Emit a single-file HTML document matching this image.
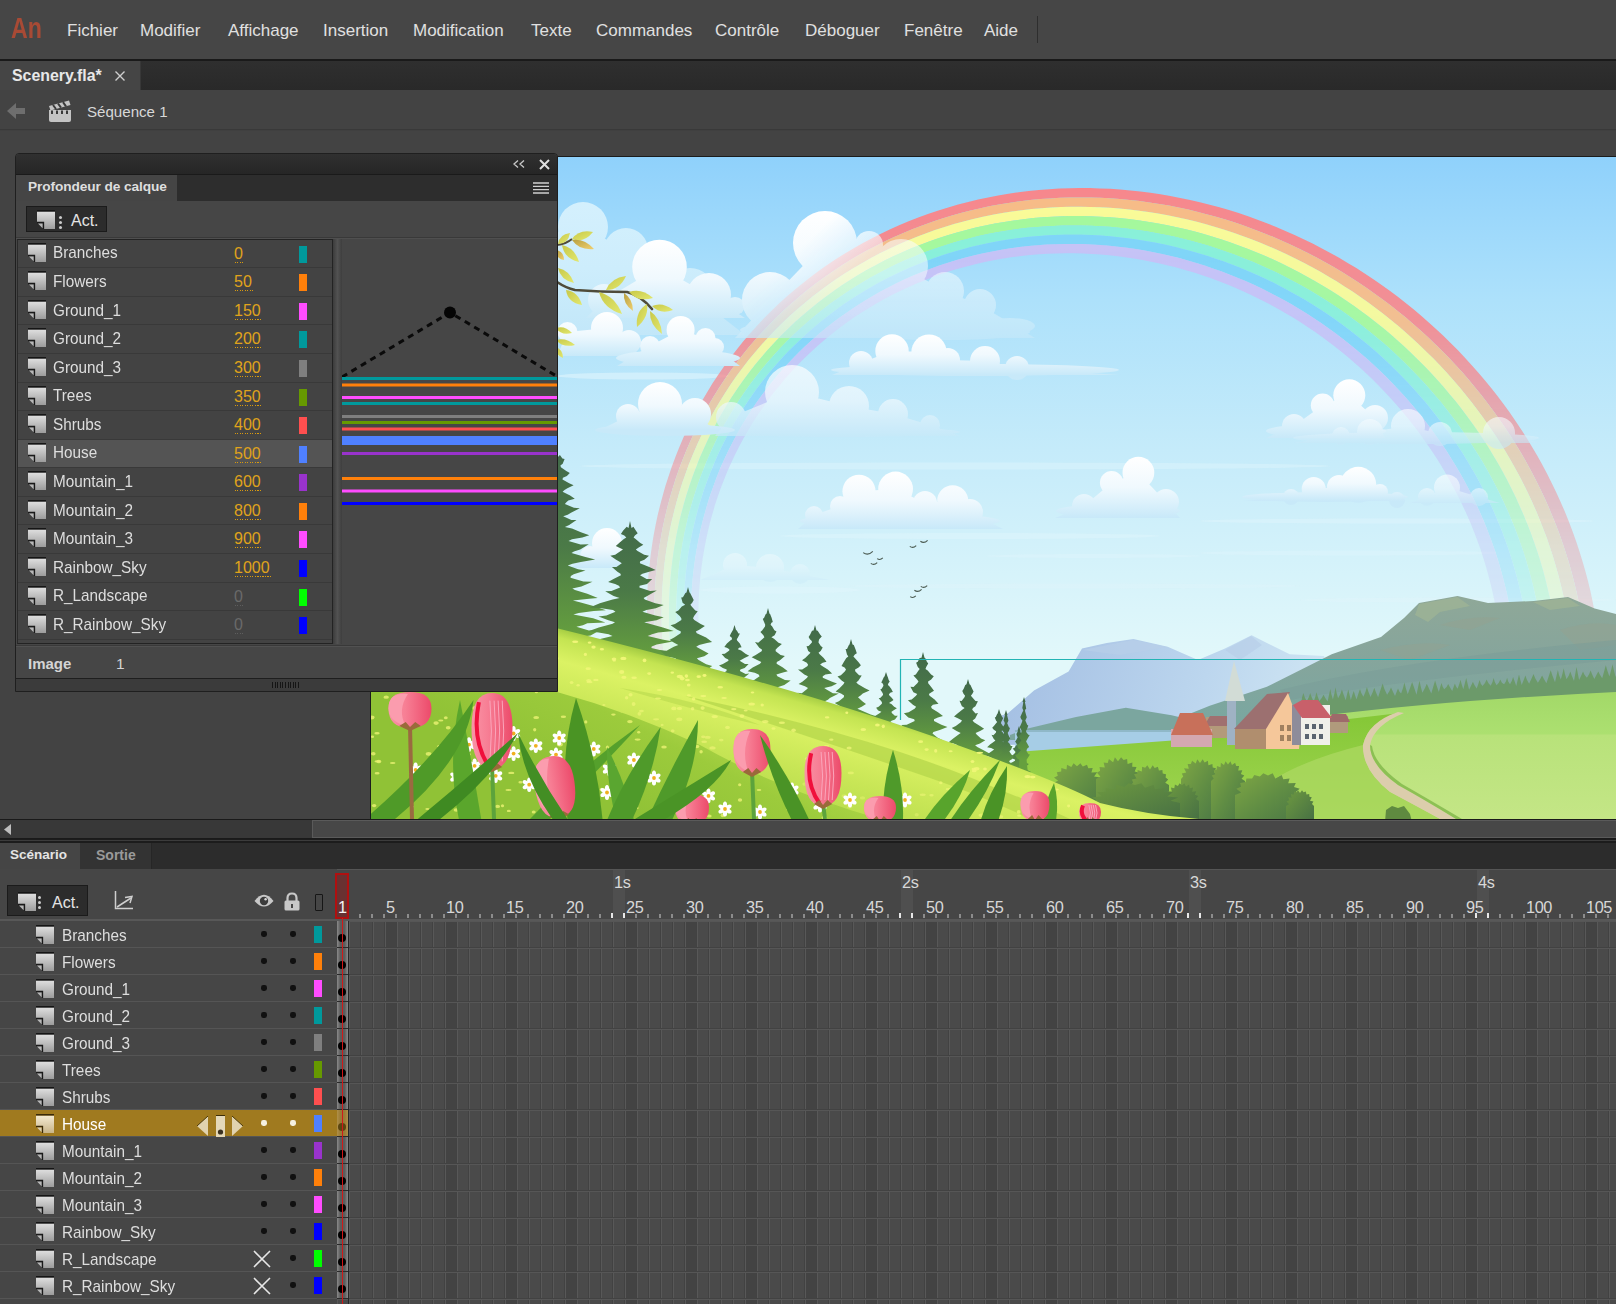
<!DOCTYPE html>
<html><head><meta charset="utf-8">
<style>
*{margin:0;padding:0;box-sizing:border-box}
html,body{width:1616px;height:1304px;overflow:hidden;background:#404040;font-family:"Liberation Sans",sans-serif;color:#dadada}
.a{position:absolute}
.t{position:absolute;white-space:nowrap;line-height:1}
#menu{left:0;top:0;width:1616px;height:59px;background:#464646}
#menu .t{font-size:17px;top:22px;color:#e0e0e0}
#tabs{left:0;top:59px;width:1616px;height:31px;background:linear-gradient(#2f2f2f,#292929);border-top:2px solid #1a1a1a}
#crumb{left:0;top:90px;width:1616px;height:40px;background:#434343;border-bottom:1px solid #393939}
#paste{left:0;top:131px;width:1616px;height:688px;background:#434343}
#stage{left:370px;top:156px;width:1246px;height:663px;overflow:hidden;background:#9ad6f8;border-left:1px solid #1c1c1c;border-top:1px solid #1c1c1c}
#stage svg{position:absolute;left:0;top:0}
#hscroll{left:0;top:819px;width:1616px;height:20px;background:#383838;border-top:1px solid #1a1a1a;border-bottom:1px solid #1a1a1a}
.lname{font-size:17px;color:#dedede;transform:scaleX(0.9);transform-origin:0 0}
.pnum{font-size:16px}
.sw{position:absolute;width:8px;height:17px}
.ico{position:absolute;width:18px;height:19px}
#panel{left:15px;top:153px;width:543px;height:539px;background:#464646;border:1px solid #1f1f1f;border-radius:4px 4px 0 0;overflow:hidden}
.prow{left:2px;width:314px;height:28.56px;border-bottom:1px solid #393939}
.trow{left:0;width:337px;height:27px;border-bottom:1px solid #555}

</style></head><body>
<svg width="0" height="0" style="position:absolute">
<defs>
<linearGradient id="icg" x1="0" y1="0" x2="0" y2="1"><stop offset="0" stop-color="#dedede"/><stop offset="1" stop-color="#9c9c9c"/></linearGradient>
<linearGradient id="icgs" x1="0" y1="0" x2="0" y2="1"><stop offset="0" stop-color="#f4ead2"/><stop offset="1" stop-color="#c8b488"/></linearGradient>
<g id="lic"><rect x="0" y="-0.5" width="18" height="2.2" fill="#151515"/><path d="M0 1.7H18V19H7V13H0Z" fill="url(#icg)"/><path d="M0 12.5H6.5V19" stroke="#1a1a1a" stroke-width="1.3" fill="none"/><path d="M1 13.6H5.6V18.2Z" fill="#b8b8b8"/></g>
<g id="lics"><rect x="0" y="-0.5" width="18" height="2.2" fill="#3a2a08"/><path d="M0 1.7H18V19H7V13H0Z" fill="url(#icgs)"/><path d="M0 12.5H6.5V19" stroke="#3a2a08" stroke-width="1.3" fill="none"/><path d="M1 13.6H5.6V18.2Z" fill="#d8ccb0"/></g>
</defs></svg>
<div id="menu" class="a">
  <div class="t" style="left:11px;top:14px;font-size:29px;color:#a84a35;transform:scaleX(0.8);transform-origin:left;font-weight:bold">An</div>
  <div class="t" style="left:67px">Fichier</div>
  <div class="t" style="left:140px">Modifier</div>
  <div class="t" style="left:228px">Affichage</div>
  <div class="t" style="left:323px">Insertion</div>
  <div class="t" style="left:413px">Modification</div>
  <div class="t" style="left:531px">Texte</div>
  <div class="t" style="left:596px">Commandes</div>
  <div class="t" style="left:715px">Contrôle</div>
  <div class="t" style="left:805px">Déboguer</div>
  <div class="t" style="left:904px">Fenêtre</div>
  <div class="t" style="left:984px">Aide</div>
  <div class="a" style="left:1037px;top:16px;width:1px;height:27px;background:#2e2e2e"></div>
</div>
<div id="tabs" class="a">
  <div class="a" style="left:0;top:0;width:141px;height:29px;background:#454545;border-right:1px solid #383838"></div>
  <div class="t" style="left:12px;top:7px;font-size:15.9px;font-weight:bold;color:#e8e8e8">Scenery.fla*</div>
  <svg class="a" style="left:115px;top:10px" width="10" height="10"><path d="M0.5 0.5L9.5 9.5M9.5 0.5L0.5 9.5" stroke="#cfcfcf" stroke-width="1.4"/></svg>
</div>
<div id="crumb" class="a">
  <svg class="a" style="left:7px;top:13px" width="20" height="16"><path d="M0 8L9 0V5H18V11H9V16Z" fill="#6e6e6e"/></svg>
  <svg class="a" style="left:48px;top:10px" width="24" height="22">
    <path d="M1 10H23V20Q23 22 21 22H3Q1 22 1 20Z" fill="#c4c4c4"/>
    <path d="M1 6L21 0.5L22.5 5L2.5 10.5Z" fill="#c4c4c4"/>
    <path d="M5 5L8 9M10 3.5L13 7.6M15 2.2L18 6.3" stroke="#3a3a3a" stroke-width="2"/>
    <path d="M4 10.5V14M9 10.5V14M14 10.5V14M19 10.5V14" stroke="#3a3a3a" stroke-width="2"/>
  </svg>
  <div class="t" style="left:87px;top:14px;font-size:15.1px;color:#d8d8d8">Séquence 1</div>
</div>
<div id="paste" class="a"></div>
<div id="hscroll" class="a">
  <svg class="a" style="left:4px;top:4px" width="8" height="12"><path d="M7 0V11L0 5.5Z" fill="#bdbdbd"/></svg>
  <div class="a" style="left:312px;top:0px;width:1304px;height:18px;background:#474747;border:1px solid #5a5a5a;border-right:none"></div>
</div>

<div class="a" id="stage"><svg width="1245" height="662" viewBox="371 157 1245 662"><defs>
<linearGradient id="sky" x1="0" y1="157" x2="0" y2="660" gradientUnits="userSpaceOnUse">
<stop offset="0" stop-color="#8fd1fb"/><stop offset="0.284" stop-color="#ade1fb"/><stop offset="0.582" stop-color="#c5ebfa"/><stop offset="0.8" stop-color="#d4f2fa"/><stop offset="1" stop-color="#e2f8fa"/></linearGradient>
<linearGradient id="cl" x1="0" y1="0" x2="0" y2="1"><stop offset="0" stop-color="#ffffff"/><stop offset="0.55" stop-color="#eef9fe"/><stop offset="1" stop-color="#c5e9fa"/></linearGradient>
<linearGradient id="cl2" x1="0" y1="0" x2="0" y2="1"><stop offset="0" stop-color="#d8f1fd"/><stop offset="1" stop-color="#b9e2f8"/></linearGradient>
<linearGradient id="rbfade" x1="0" y1="185" x2="0" y2="640" gradientUnits="userSpaceOnUse">
<stop offset="0" stop-color="#fff" stop-opacity="1"/><stop offset="0.3" stop-color="#fff" stop-opacity="0.9"/><stop offset="0.55" stop-color="#fff" stop-opacity="0.6"/><stop offset="0.8" stop-color="#fff" stop-opacity="0.35"/><stop offset="1" stop-color="#fff" stop-opacity="0.2"/></linearGradient>
<mask id="rbmask" maskUnits="userSpaceOnUse" x="371" y="157" width="1245" height="662"><rect x="371" y="157" width="1245" height="662" fill="url(#rbfade)"/></mask>
<linearGradient id="hill" x1="0" y1="0" x2="1" y2="0.6">
<stop offset="0" stop-color="#a6d044"/><stop offset="0.5" stop-color="#cfe95a"/><stop offset="1" stop-color="#b8dc4c"/></linearGradient>
<linearGradient id="tree" x1="0" y1="0" x2="0" y2="1"><stop offset="0" stop-color="#436b48"/><stop offset="0.6" stop-color="#4f7e45"/><stop offset="1" stop-color="#66a03c"/></linearGradient>
<linearGradient id="mtn" x1="0" y1="0" x2="0" y2="1"><stop offset="0" stop-color="#8ba79a"/><stop offset="1" stop-color="#7aa39a"/></linearGradient>
<linearGradient id="bmtn" x1="0" y1="0" x2="0" y2="1"><stop offset="0" stop-color="#a9c6e6"/><stop offset="1" stop-color="#bcd8ec"/></linearGradient>
<linearGradient id="meadow" x1="0" y1="0" x2="0" y2="1"><stop offset="0" stop-color="#a6d85a"/><stop offset="1" stop-color="#bfe077"/></linearGradient>
<linearGradient id="mid" x1="0" y1="0" x2="0" y2="1"><stop offset="0" stop-color="#8fcc3a"/><stop offset="1" stop-color="#a3d650"/></linearGradient>
<linearGradient id="bush" x1="0" y1="0" x2="1" y2="1"><stop offset="0" stop-color="#6f9a3a"/><stop offset="1" stop-color="#4d7a48"/></linearGradient>
<linearGradient id="tul" x1="0" y1="0" x2="1" y2="0"><stop offset="0" stop-color="#f993a6"/><stop offset="0.4" stop-color="#f77e94"/><stop offset="1" stop-color="#ec4a6a"/></linearGradient>
<linearGradient id="fg" x1="0" y1="0" x2="0" y2="1"><stop offset="0" stop-color="#a9d247"/><stop offset="1" stop-color="#8fc43a"/></linearGradient>
<linearGradient id="leaf" x1="0" y1="0" x2="1" y2="1"><stop offset="0" stop-color="#dce070"/><stop offset="1" stop-color="#c2b43c"/></linearGradient>
</defs>
<rect x="371" y="157" width="1245" height="662" fill="url(#sky)"/>
<ellipse cx="643.5" cy="376" rx="86.5" ry="3.5" fill="#e2f6fd" opacity="0.56"/>
<ellipse cx="955.0" cy="466" rx="375.0" ry="3.5" fill="#e2f6fd" opacity="0.39"/>
<ellipse cx="970.0" cy="536" rx="190.0" ry="3" fill="#e2f6fd" opacity="0.39"/>
<ellipse cx="1093.5" cy="556" rx="106.5" ry="2" fill="#e2f6fd" opacity="0.35"/>
<ellipse cx="1397.0" cy="521" rx="197.0" ry="2.5" fill="#e2f6fd" opacity="0.42"/>
<ellipse cx="1350.0" cy="553" rx="150.0" ry="2.5" fill="#e2f6fd" opacity="0.35"/>
<ellipse cx="780.0" cy="590" rx="80.0" ry="3.5" fill="#e2f6fd" opacity="0.42"/>
<ellipse cx="1075.0" cy="586" rx="225.0" ry="2.5" fill="#e2f6fd" opacity="0.28"/>
<ellipse cx="1458.0" cy="600" rx="158.0" ry="2.5" fill="#e2f6fd" opacity="0.32"/>
<g mask="url(#rbmask)">
<path d="M1600.9 729.7 L1601.6 718.9 L1602.1 708.2 L1602.3 697.4 L1602.2 686.7 L1601.9 675.9 L1601.3 665.2 L1600.5 654.6 L1599.4 643.9 L1598.1 633.3 L1596.5 622.8 L1594.7 612.3 L1592.7 601.9 L1590.5 591.6 L1588.0 581.3 L1585.3 571.1 L1582.4 560.9 L1579.3 550.9 L1576.0 540.9 L1572.4 531.1 L1568.7 521.3 L1564.8 511.6 L1560.6 502.0 L1556.3 492.6 L1551.8 483.2 L1547.2 474.0 L1542.3 464.8 L1537.3 455.8 L1532.1 446.9 L1526.7 438.1 L1521.2 429.5 L1515.5 421.0 L1509.7 412.5 L1503.7 404.3 L1497.5 396.1 L1491.2 388.1 L1484.8 380.2 L1478.2 372.5 L1471.5 364.9 L1464.7 357.4 L1457.7 350.1 L1450.6 342.9 L1443.3 335.8 L1436.0 328.9 L1428.5 322.2 L1420.9 315.6 L1413.2 309.1 L1405.4 302.8 L1397.5 296.6 L1389.4 290.6 L1381.3 284.8 L1373.0 279.1 L1364.7 273.5 L1356.3 268.1 L1347.7 262.9 L1339.1 257.8 L1330.4 252.9 L1321.5 248.2 L1312.6 243.6 L1303.6 239.2 L1294.6 235.0 L1285.4 230.9 L1276.2 227.0 L1266.9 223.3 L1257.5 219.7 L1248.1 216.3 L1238.6 213.1 L1229.0 210.1 L1219.4 207.3 L1209.7 204.7 L1199.9 202.2 L1190.1 199.9 L1180.2 197.9 L1170.3 196.0 L1160.4 194.3 L1150.4 192.8 L1140.3 191.5 L1130.3 190.4 L1120.2 189.5 L1110.1 188.8 L1099.9 188.4 L1089.8 188.1 L1079.6 188.1 L1069.4 188.2 L1059.2 188.6 L1049.0 189.2 L1038.8 190.0 L1028.7 191.0 L1018.5 192.3 L1008.4 193.8 L998.2 195.5 L988.1 197.4 L978.1 199.6 L968.1 201.9 L958.1 204.6 L948.2 207.4 L938.4 210.5 L928.6 213.8 L918.9 217.3 L909.2 221.1 L899.7 225.1 L890.2 229.3 L880.9 233.7 L871.6 238.4 L862.5 243.3 L853.4 248.4 L844.5 253.7 L835.7 259.3 L827.1 265.1 L818.6 271.1 L810.3 277.3 L802.1 283.7 L794.1 290.3 L786.2 297.1 L778.5 304.1 L771.0 311.2 L763.7 318.6 L756.6 326.2 L749.6 333.9 L742.9 341.8 L736.4 349.9 L730.1 358.1 L724.0 366.5 L718.1 375.0 L712.4 383.6 L707.0 392.4 L701.8 401.3 L696.8 410.4 L692.0 419.5 L687.5 428.8 L683.2 438.1 L679.2 447.6 L675.4 457.1 L671.8 466.7 L668.5 476.4 L665.4 486.1 L662.6 495.9 L660.0 505.7 L657.6 515.6 L655.5 525.5 L653.6 535.5 L652.0 545.5 L650.6 555.5 L649.4 565.5 L648.4 575.5 L647.7 585.5 L647.2 595.5 L647.0 605.4 L646.9 615.4 L647.1 625.4 L647.5 635.3 L648.1 645.1 L648.9 655.0 L650.0 664.8 L651.2 674.6 L652.6 684.3 L654.2 693.9 L656.1 703.5 L658.1 713.0 L660.3 722.5 L667.6 721.5 L665.4 712.2 L663.4 702.8 L661.6 693.4 L660.0 683.9 L658.5 674.3 L657.3 664.7 L656.3 655.1 L655.5 645.4 L654.9 635.7 L654.5 625.9 L654.3 616.1 L654.3 606.3 L654.6 596.5 L655.1 586.7 L655.8 576.8 L656.7 567.0 L657.8 557.1 L659.2 547.3 L660.9 537.5 L662.7 527.7 L664.8 517.9 L667.1 508.2 L669.7 498.5 L672.5 488.9 L675.5 479.3 L678.8 469.8 L682.3 460.4 L686.1 451.0 L690.1 441.7 L694.3 432.5 L698.7 423.4 L703.4 414.4 L708.3 405.6 L713.5 396.8 L718.8 388.2 L724.4 379.7 L730.2 371.3 L736.3 363.1 L742.5 355.0 L748.9 347.1 L755.6 339.3 L762.4 331.8 L769.4 324.4 L776.6 317.1 L784.0 310.1 L791.6 303.2 L799.4 296.6 L807.3 290.1 L815.3 283.8 L823.6 277.8 L831.9 271.9 L840.4 266.3 L849.1 260.8 L857.8 255.6 L866.7 250.6 L875.7 245.9 L884.9 241.3 L894.1 237.0 L903.4 232.9 L912.8 229.0 L922.2 225.4 L931.8 221.9 L941.4 218.7 L951.1 215.8 L960.8 213.0 L970.6 210.5 L980.5 208.2 L990.4 206.1 L1000.3 204.3 L1010.2 202.7 L1020.2 201.2 L1030.1 200.1 L1040.1 199.1 L1050.1 198.4 L1060.1 197.8 L1070.1 197.5 L1080.1 197.4 L1090.1 197.5 L1100.0 197.8 L1110.0 198.3 L1119.9 199.1 L1129.8 200.0 L1139.6 201.1 L1149.4 202.4 L1159.2 203.9 L1169.0 205.6 L1178.6 207.5 L1188.3 209.6 L1197.9 211.9 L1207.4 214.4 L1216.9 217.0 L1226.3 219.8 L1235.7 222.8 L1245.0 226.0 L1254.2 229.4 L1263.3 232.9 L1272.4 236.6 L1281.4 240.5 L1290.3 244.5 L1299.2 248.7 L1307.9 253.1 L1316.6 257.6 L1325.2 262.3 L1333.7 267.1 L1342.1 272.1 L1350.4 277.3 L1358.6 282.6 L1366.7 288.0 L1374.7 293.7 L1382.7 299.4 L1390.5 305.3 L1398.2 311.4 L1405.8 317.6 L1413.2 324.0 L1420.6 330.4 L1427.8 337.1 L1435.0 343.9 L1442.0 350.8 L1448.9 357.8 L1455.6 365.0 L1462.3 372.3 L1468.8 379.8 L1475.1 387.4 L1481.3 395.1 L1487.4 402.9 L1493.4 410.9 L1499.1 419.0 L1504.8 427.2 L1510.3 435.5 L1515.6 444.0 L1520.8 452.6 L1525.8 461.2 L1530.6 470.0 L1535.3 479.0 L1539.8 488.0 L1544.1 497.1 L1548.3 506.3 L1552.2 515.7 L1556.0 525.1 L1559.6 534.6 L1563.0 544.2 L1566.2 553.9 L1569.2 563.7 L1571.9 573.5 L1574.5 583.5 L1576.9 593.5 L1579.0 603.5 L1580.9 613.7 L1582.6 623.9 L1584.1 634.1 L1585.3 644.4 L1586.3 654.7 L1587.1 665.1 L1587.6 675.5 L1587.9 685.9 L1588.0 696.3 L1587.7 706.8 L1587.3 717.2 L1586.6 727.7Z" fill="#f7878c"/>
<path d="M1586.6 727.7 L1587.3 717.2 L1587.7 706.8 L1588.0 696.3 L1587.9 685.9 L1587.6 675.5 L1587.1 665.1 L1586.3 654.7 L1585.3 644.4 L1584.1 634.1 L1582.6 623.9 L1580.9 613.7 L1579.0 603.5 L1576.9 593.5 L1574.5 583.5 L1571.9 573.5 L1569.2 563.7 L1566.2 553.9 L1563.0 544.2 L1559.6 534.6 L1556.0 525.1 L1552.2 515.7 L1548.3 506.3 L1544.1 497.1 L1539.8 488.0 L1535.3 479.0 L1530.6 470.0 L1525.8 461.2 L1520.8 452.6 L1515.6 444.0 L1510.3 435.5 L1504.8 427.2 L1499.1 419.0 L1493.4 410.9 L1487.4 402.9 L1481.3 395.1 L1475.1 387.4 L1468.8 379.8 L1462.3 372.3 L1455.6 365.0 L1448.9 357.8 L1442.0 350.8 L1435.0 343.9 L1427.8 337.1 L1420.6 330.4 L1413.2 324.0 L1405.8 317.6 L1398.2 311.4 L1390.5 305.3 L1382.7 299.4 L1374.7 293.7 L1366.7 288.0 L1358.6 282.6 L1350.4 277.3 L1342.1 272.1 L1333.7 267.1 L1325.2 262.3 L1316.6 257.6 L1307.9 253.1 L1299.2 248.7 L1290.3 244.5 L1281.4 240.5 L1272.4 236.6 L1263.3 232.9 L1254.2 229.4 L1245.0 226.0 L1235.7 222.8 L1226.3 219.8 L1216.9 217.0 L1207.4 214.4 L1197.9 211.9 L1188.3 209.6 L1178.6 207.5 L1169.0 205.6 L1159.2 203.9 L1149.4 202.4 L1139.6 201.1 L1129.8 200.0 L1119.9 199.1 L1110.0 198.3 L1100.0 197.8 L1090.1 197.5 L1080.1 197.4 L1070.1 197.5 L1060.1 197.8 L1050.1 198.4 L1040.1 199.1 L1030.1 200.1 L1020.2 201.2 L1010.2 202.7 L1000.3 204.3 L990.4 206.1 L980.5 208.2 L970.6 210.5 L960.8 213.0 L951.1 215.8 L941.4 218.7 L931.8 221.9 L922.2 225.4 L912.8 229.0 L903.4 232.9 L894.1 237.0 L884.9 241.3 L875.7 245.9 L866.7 250.6 L857.8 255.6 L849.1 260.8 L840.4 266.3 L831.9 271.9 L823.6 277.8 L815.3 283.8 L807.3 290.1 L799.4 296.6 L791.6 303.2 L784.0 310.1 L776.6 317.1 L769.4 324.4 L762.4 331.8 L755.6 339.3 L748.9 347.1 L742.5 355.0 L736.3 363.1 L730.2 371.3 L724.4 379.7 L718.8 388.2 L713.5 396.8 L708.3 405.6 L703.4 414.4 L698.7 423.4 L694.3 432.5 L690.1 441.7 L686.1 451.0 L682.3 460.4 L678.8 469.8 L675.5 479.3 L672.5 488.9 L669.7 498.5 L667.1 508.2 L664.8 517.9 L662.7 527.7 L660.9 537.5 L659.2 547.3 L657.8 557.1 L656.7 567.0 L655.8 576.8 L655.1 586.7 L654.6 596.5 L654.3 606.3 L654.3 616.1 L654.5 625.9 L654.9 635.7 L655.5 645.4 L656.3 655.1 L657.3 664.7 L658.5 674.3 L660.0 683.9 L661.6 693.4 L663.4 702.8 L665.4 712.2 L667.6 721.5 L674.9 720.5 L672.7 711.3 L670.7 702.1 L668.9 692.8 L667.3 683.5 L665.9 674.1 L664.7 664.6 L663.6 655.2 L662.8 645.6 L662.2 636.1 L661.8 626.5 L661.6 616.8 L661.7 607.2 L661.9 597.5 L662.4 587.9 L663.1 578.2 L664.0 568.5 L665.1 558.8 L666.5 549.1 L668.1 539.5 L669.9 529.8 L672.0 520.2 L674.3 510.7 L676.8 501.2 L679.5 491.7 L682.5 482.3 L685.8 472.9 L689.2 463.6 L692.9 454.4 L696.9 445.3 L701.0 436.3 L705.4 427.3 L710.1 418.5 L714.9 409.8 L720.0 401.2 L725.3 392.7 L730.8 384.3 L736.5 376.1 L742.5 368.1 L748.6 360.1 L754.9 352.4 L761.5 344.8 L768.2 337.4 L775.2 330.1 L782.3 323.0 L789.6 316.1 L797.0 309.4 L804.7 302.9 L812.5 296.5 L820.4 290.4 L828.5 284.5 L836.7 278.8 L845.1 273.3 L853.6 268.0 L862.3 262.9 L871.0 258.0 L879.9 253.3 L888.8 248.9 L897.9 244.7 L907.1 240.7 L916.3 236.9 L925.6 233.4 L935.0 230.1 L944.5 227.0 L954.0 224.1 L963.6 221.5 L973.2 219.0 L982.9 216.8 L992.6 214.8 L1002.3 213.1 L1012.0 211.5 L1021.8 210.2 L1031.6 209.1 L1041.4 208.2 L1051.2 207.5 L1061.0 207.1 L1070.8 206.8 L1080.6 206.7 L1090.4 206.9 L1100.1 207.3 L1109.9 207.8 L1119.6 208.6 L1129.3 209.5 L1138.9 210.7 L1148.5 212.0 L1158.1 213.6 L1167.6 215.3 L1177.1 217.2 L1186.5 219.3 L1195.9 221.6 L1205.2 224.1 L1214.4 226.7 L1223.6 229.5 L1232.8 232.5 L1241.8 235.7 L1250.8 239.0 L1259.8 242.5 L1268.6 246.2 L1277.4 250.0 L1286.1 254.0 L1294.7 258.2 L1303.2 262.5 L1311.7 267.0 L1320.0 271.6 L1328.3 276.4 L1336.5 281.3 L1344.5 286.4 L1352.5 291.6 L1360.4 297.0 L1368.2 302.6 L1375.9 308.2 L1383.5 314.0 L1390.9 320.0 L1398.3 326.1 L1405.5 332.3 L1412.7 338.7 L1419.7 345.2 L1426.6 351.9 L1433.4 358.6 L1440.1 365.6 L1446.6 372.6 L1453.0 379.8 L1459.3 387.1 L1465.4 394.5 L1471.4 402.0 L1477.3 409.7 L1483.0 417.5 L1488.6 425.4 L1494.1 433.4 L1499.4 441.6 L1504.5 449.8 L1509.5 458.2 L1514.3 466.7 L1519.0 475.3 L1523.5 483.9 L1527.8 492.7 L1531.9 501.6 L1535.9 510.6 L1539.7 519.7 L1543.3 528.9 L1546.8 538.1 L1550.0 547.5 L1553.1 556.9 L1555.9 566.4 L1558.6 576.0 L1561.0 585.7 L1563.3 595.4 L1565.3 605.2 L1567.1 615.0 L1568.7 624.9 L1570.1 634.9 L1571.3 644.8 L1572.2 654.9 L1572.9 664.9 L1573.4 675.0 L1573.6 685.1 L1573.6 695.3 L1573.4 705.4 L1572.9 715.5 L1572.2 725.7Z" fill="#f8bb86"/>
<path d="M1572.2 725.7 L1572.9 715.5 L1573.4 705.4 L1573.6 695.3 L1573.6 685.1 L1573.4 675.0 L1572.9 664.9 L1572.2 654.9 L1571.3 644.8 L1570.1 634.9 L1568.7 624.9 L1567.1 615.0 L1565.3 605.2 L1563.3 595.4 L1561.0 585.7 L1558.6 576.0 L1555.9 566.4 L1553.1 556.9 L1550.0 547.5 L1546.8 538.1 L1543.3 528.9 L1539.7 519.7 L1535.9 510.6 L1531.9 501.6 L1527.8 492.7 L1523.5 483.9 L1519.0 475.3 L1514.3 466.7 L1509.5 458.2 L1504.5 449.8 L1499.4 441.6 L1494.1 433.4 L1488.6 425.4 L1483.0 417.5 L1477.3 409.7 L1471.4 402.0 L1465.4 394.5 L1459.3 387.1 L1453.0 379.8 L1446.6 372.6 L1440.1 365.6 L1433.4 358.6 L1426.6 351.9 L1419.7 345.2 L1412.7 338.7 L1405.5 332.3 L1398.3 326.1 L1390.9 320.0 L1383.5 314.0 L1375.9 308.2 L1368.2 302.6 L1360.4 297.0 L1352.5 291.6 L1344.5 286.4 L1336.5 281.3 L1328.3 276.4 L1320.0 271.6 L1311.7 267.0 L1303.2 262.5 L1294.7 258.2 L1286.1 254.0 L1277.4 250.0 L1268.6 246.2 L1259.8 242.5 L1250.8 239.0 L1241.8 235.7 L1232.8 232.5 L1223.6 229.5 L1214.4 226.7 L1205.2 224.1 L1195.9 221.6 L1186.5 219.3 L1177.1 217.2 L1167.6 215.3 L1158.1 213.6 L1148.5 212.0 L1138.9 210.7 L1129.3 209.5 L1119.6 208.6 L1109.9 207.8 L1100.1 207.3 L1090.4 206.9 L1080.6 206.7 L1070.8 206.8 L1061.0 207.1 L1051.2 207.5 L1041.4 208.2 L1031.6 209.1 L1021.8 210.2 L1012.0 211.5 L1002.3 213.1 L992.6 214.8 L982.9 216.8 L973.2 219.0 L963.6 221.5 L954.0 224.1 L944.5 227.0 L935.0 230.1 L925.6 233.4 L916.3 236.9 L907.1 240.7 L897.9 244.7 L888.8 248.9 L879.9 253.3 L871.0 258.0 L862.3 262.9 L853.6 268.0 L845.1 273.3 L836.7 278.8 L828.5 284.5 L820.4 290.4 L812.5 296.5 L804.7 302.9 L797.0 309.4 L789.6 316.1 L782.3 323.0 L775.2 330.1 L768.2 337.4 L761.5 344.8 L754.9 352.4 L748.6 360.1 L742.5 368.1 L736.5 376.1 L730.8 384.3 L725.3 392.7 L720.0 401.2 L714.9 409.8 L710.1 418.5 L705.4 427.3 L701.0 436.3 L696.9 445.3 L692.9 454.4 L689.2 463.6 L685.8 472.9 L682.5 482.3 L679.5 491.7 L676.8 501.2 L674.3 510.7 L672.0 520.2 L669.9 529.8 L668.1 539.5 L666.5 549.1 L665.1 558.8 L664.0 568.5 L663.1 578.2 L662.4 587.9 L661.9 597.5 L661.7 607.2 L661.6 616.8 L661.8 626.5 L662.2 636.1 L662.8 645.6 L663.6 655.2 L664.7 664.6 L665.9 674.1 L667.3 683.5 L668.9 692.8 L670.7 702.1 L672.7 711.3 L674.9 720.5 L682.1 719.4 L680.0 710.4 L678.0 701.4 L676.2 692.3 L674.6 683.1 L673.2 673.8 L672.0 664.6 L671.0 655.2 L670.2 645.9 L669.6 636.5 L669.2 627.0 L669.0 617.6 L669.0 608.1 L669.2 598.6 L669.7 589.0 L670.4 579.5 L671.3 570.0 L672.4 560.5 L673.7 551.0 L675.3 541.5 L677.1 532.0 L679.1 522.6 L681.4 513.1 L683.9 503.8 L686.6 494.5 L689.6 485.2 L692.8 476.0 L696.2 466.9 L699.8 457.8 L703.7 448.9 L707.8 440.0 L712.1 431.2 L716.7 422.6 L721.5 414.0 L726.5 405.5 L731.7 397.2 L737.2 389.0 L742.8 381.0 L748.7 373.1 L754.7 365.3 L761.0 357.7 L767.4 350.2 L774.1 342.9 L780.9 335.8 L787.9 328.9 L795.1 322.1 L802.5 315.6 L810.0 309.2 L817.6 303.0 L825.5 297.0 L833.5 291.2 L841.6 285.6 L849.8 280.2 L858.2 275.1 L866.7 270.1 L875.3 265.4 L884.0 260.8 L892.8 256.5 L901.8 252.4 L910.8 248.5 L919.9 244.9 L929.0 241.4 L938.2 238.2 L947.5 235.2 L956.9 232.5 L966.3 229.9 L975.7 227.6 L985.2 225.5 L994.8 223.6 L1004.3 221.9 L1013.9 220.4 L1023.5 219.2 L1033.1 218.1 L1042.7 217.3 L1052.3 216.7 L1061.9 216.3 L1071.5 216.1 L1081.1 216.1 L1090.7 216.3 L1100.2 216.7 L1109.8 217.3 L1119.3 218.1 L1128.7 219.1 L1138.2 220.3 L1147.6 221.7 L1156.9 223.2 L1166.2 225.0 L1175.5 226.9 L1184.7 229.0 L1193.9 231.3 L1203.0 233.8 L1212.0 236.4 L1221.0 239.2 L1229.9 242.2 L1238.7 245.4 L1247.5 248.7 L1256.2 252.2 L1264.8 255.8 L1273.3 259.6 L1281.8 263.6 L1290.2 267.7 L1298.5 272.0 L1306.7 276.4 L1314.8 280.9 L1322.9 285.7 L1330.8 290.5 L1338.7 295.6 L1346.4 300.7 L1354.1 306.0 L1361.6 311.5 L1369.1 317.0 L1376.4 322.8 L1383.7 328.6 L1390.8 334.6 L1397.8 340.7 L1404.8 347.0 L1411.6 353.4 L1418.2 359.9 L1424.8 366.5 L1431.2 373.3 L1437.6 380.2 L1443.8 387.2 L1449.8 394.4 L1455.8 401.6 L1461.6 409.0 L1467.2 416.5 L1472.7 424.1 L1478.1 431.8 L1483.4 439.7 L1488.5 447.6 L1493.4 455.7 L1498.2 463.8 L1502.8 472.1 L1507.3 480.5 L1511.6 488.9 L1515.8 497.5 L1519.7 506.2 L1523.6 514.9 L1527.2 523.7 L1530.7 532.7 L1533.9 541.7 L1537.0 550.8 L1540.0 559.9 L1542.7 569.2 L1545.2 578.5 L1547.5 587.9 L1549.7 597.3 L1551.6 606.8 L1553.3 616.4 L1554.8 626.0 L1556.1 635.6 L1557.2 645.3 L1558.1 655.0 L1558.7 664.8 L1559.2 674.6 L1559.4 684.4 L1559.3 694.2 L1559.1 704.0 L1558.6 713.8 L1557.9 723.6Z" fill="#fbfb96"/>
<path d="M1557.9 723.6 L1558.6 713.8 L1559.1 704.0 L1559.3 694.2 L1559.4 684.4 L1559.2 674.6 L1558.7 664.8 L1558.1 655.0 L1557.2 645.3 L1556.1 635.6 L1554.8 626.0 L1553.3 616.4 L1551.6 606.8 L1549.7 597.3 L1547.5 587.9 L1545.2 578.5 L1542.7 569.2 L1540.0 559.9 L1537.0 550.8 L1533.9 541.7 L1530.7 532.7 L1527.2 523.7 L1523.6 514.9 L1519.7 506.2 L1515.8 497.5 L1511.6 488.9 L1507.3 480.5 L1502.8 472.1 L1498.2 463.8 L1493.4 455.7 L1488.5 447.6 L1483.4 439.7 L1478.1 431.8 L1472.7 424.1 L1467.2 416.5 L1461.6 409.0 L1455.8 401.6 L1449.8 394.4 L1443.8 387.2 L1437.6 380.2 L1431.2 373.3 L1424.8 366.5 L1418.2 359.9 L1411.6 353.4 L1404.8 347.0 L1397.8 340.7 L1390.8 334.6 L1383.7 328.6 L1376.4 322.8 L1369.1 317.0 L1361.6 311.5 L1354.1 306.0 L1346.4 300.7 L1338.7 295.6 L1330.8 290.5 L1322.9 285.7 L1314.8 280.9 L1306.7 276.4 L1298.5 272.0 L1290.2 267.7 L1281.8 263.6 L1273.3 259.6 L1264.8 255.8 L1256.2 252.2 L1247.5 248.7 L1238.7 245.4 L1229.9 242.2 L1221.0 239.2 L1212.0 236.4 L1203.0 233.8 L1193.9 231.3 L1184.7 229.0 L1175.5 226.9 L1166.2 225.0 L1156.9 223.2 L1147.6 221.7 L1138.2 220.3 L1128.7 219.1 L1119.3 218.1 L1109.8 217.3 L1100.2 216.7 L1090.7 216.3 L1081.1 216.1 L1071.5 216.1 L1061.9 216.3 L1052.3 216.7 L1042.7 217.3 L1033.1 218.1 L1023.5 219.2 L1013.9 220.4 L1004.3 221.9 L994.8 223.6 L985.2 225.5 L975.7 227.6 L966.3 229.9 L956.9 232.5 L947.5 235.2 L938.2 238.2 L929.0 241.4 L919.9 244.9 L910.8 248.5 L901.8 252.4 L892.8 256.5 L884.0 260.8 L875.3 265.4 L866.7 270.1 L858.2 275.1 L849.8 280.2 L841.6 285.6 L833.5 291.2 L825.5 297.0 L817.6 303.0 L810.0 309.2 L802.5 315.6 L795.1 322.1 L787.9 328.9 L780.9 335.8 L774.1 342.9 L767.4 350.2 L761.0 357.7 L754.7 365.3 L748.7 373.1 L742.8 381.0 L737.2 389.0 L731.7 397.2 L726.5 405.5 L721.5 414.0 L716.7 422.6 L712.1 431.2 L707.8 440.0 L703.7 448.9 L699.8 457.8 L696.2 466.9 L692.8 476.0 L689.6 485.2 L686.6 494.5 L683.9 503.8 L681.4 513.1 L679.1 522.6 L677.1 532.0 L675.3 541.5 L673.7 551.0 L672.4 560.5 L671.3 570.0 L670.4 579.5 L669.7 589.0 L669.2 598.6 L669.0 608.1 L669.0 617.6 L669.2 627.0 L669.6 636.5 L670.2 645.9 L671.0 655.2 L672.0 664.6 L673.2 673.8 L674.6 683.1 L676.2 692.3 L678.0 701.4 L680.0 710.4 L682.1 719.4 L689.4 718.4 L687.3 709.6 L685.3 700.7 L683.5 691.7 L682.0 682.7 L680.6 673.6 L679.4 664.5 L678.3 655.3 L677.5 646.1 L676.9 636.9 L676.5 627.6 L676.3 618.3 L676.3 608.9 L676.6 599.6 L677.0 590.2 L677.7 580.9 L678.5 571.5 L679.6 562.1 L681.0 552.8 L682.5 543.5 L684.3 534.1 L686.3 524.9 L688.5 515.6 L691.0 506.4 L693.7 497.3 L696.6 488.2 L699.7 479.1 L703.1 470.2 L706.7 461.3 L710.5 452.5 L714.6 443.8 L718.8 435.1 L723.3 426.6 L728.1 418.2 L733.0 409.9 L738.1 401.7 L743.5 393.7 L749.1 385.8 L754.9 378.0 L760.8 370.4 L767.0 363.0 L773.4 355.7 L779.9 348.5 L786.6 341.6 L793.5 334.8 L800.6 328.2 L807.9 321.7 L815.3 315.5 L822.8 309.4 L830.5 303.6 L838.4 297.9 L846.4 292.5 L854.5 287.2 L862.8 282.2 L871.1 277.3 L879.6 272.7 L888.2 268.3 L896.8 264.1 L905.6 260.1 L914.5 256.4 L923.4 252.8 L932.4 249.5 L941.5 246.4 L950.6 243.5 L959.8 240.8 L969.0 238.4 L978.3 236.1 L987.6 234.1 L997.0 232.3 L1006.3 230.7 L1015.7 229.3 L1025.1 228.1 L1034.5 227.2 L1044.0 226.4 L1053.4 225.9 L1062.8 225.5 L1072.2 225.4 L1081.6 225.4 L1091.0 225.7 L1100.3 226.2 L1109.7 226.8 L1119.0 227.7 L1128.2 228.7 L1137.4 229.9 L1146.6 231.3 L1155.8 232.9 L1164.9 234.7 L1173.9 236.6 L1182.9 238.7 L1191.8 241.0 L1200.7 243.5 L1209.5 246.1 L1218.3 248.9 L1227.0 251.9 L1235.6 255.1 L1244.1 258.4 L1252.6 261.8 L1261.0 265.4 L1269.3 269.2 L1277.6 273.1 L1285.7 277.2 L1293.8 281.4 L1301.8 285.8 L1309.7 290.3 L1317.5 295.0 L1325.2 299.8 L1332.8 304.7 L1340.3 309.8 L1347.8 315.0 L1355.1 320.4 L1362.3 325.8 L1369.4 331.5 L1376.4 337.2 L1383.4 343.1 L1390.2 349.1 L1396.8 355.3 L1403.4 361.5 L1409.9 367.9 L1416.2 374.4 L1422.4 381.0 L1428.5 387.8 L1434.5 394.7 L1440.4 401.6 L1446.1 408.7 L1451.7 416.0 L1457.1 423.3 L1462.4 430.7 L1467.6 438.3 L1472.6 445.9 L1477.5 453.7 L1482.3 461.5 L1486.9 469.5 L1491.3 477.5 L1495.6 485.7 L1499.8 493.9 L1503.7 502.2 L1507.6 510.7 L1511.2 519.2 L1514.7 527.8 L1518.0 536.5 L1521.1 545.2 L1524.1 554.0 L1526.8 563.0 L1529.4 571.9 L1531.8 581.0 L1534.0 590.1 L1536.1 599.2 L1537.9 608.4 L1539.5 617.7 L1540.9 627.0 L1542.1 636.4 L1543.2 645.8 L1544.0 655.2 L1544.5 664.6 L1544.9 674.1 L1545.1 683.6 L1545.0 693.1 L1544.7 702.6 L1544.2 712.1 L1543.5 721.6Z" fill="#a5f99a"/>
<path d="M1543.5 721.6 L1544.2 712.1 L1544.7 702.6 L1545.0 693.1 L1545.1 683.6 L1544.9 674.1 L1544.5 664.6 L1544.0 655.2 L1543.2 645.8 L1542.1 636.4 L1540.9 627.0 L1539.5 617.7 L1537.9 608.4 L1536.1 599.2 L1534.0 590.1 L1531.8 581.0 L1529.4 571.9 L1526.8 563.0 L1524.1 554.0 L1521.1 545.2 L1518.0 536.5 L1514.7 527.8 L1511.2 519.2 L1507.6 510.7 L1503.7 502.2 L1499.8 493.9 L1495.6 485.7 L1491.3 477.5 L1486.9 469.5 L1482.3 461.5 L1477.5 453.7 L1472.6 445.9 L1467.6 438.3 L1462.4 430.7 L1457.1 423.3 L1451.7 416.0 L1446.1 408.7 L1440.4 401.6 L1434.5 394.7 L1428.5 387.8 L1422.4 381.0 L1416.2 374.4 L1409.9 367.9 L1403.4 361.5 L1396.8 355.3 L1390.2 349.1 L1383.4 343.1 L1376.4 337.2 L1369.4 331.5 L1362.3 325.8 L1355.1 320.4 L1347.8 315.0 L1340.3 309.8 L1332.8 304.7 L1325.2 299.8 L1317.5 295.0 L1309.7 290.3 L1301.8 285.8 L1293.8 281.4 L1285.7 277.2 L1277.6 273.1 L1269.3 269.2 L1261.0 265.4 L1252.6 261.8 L1244.1 258.4 L1235.6 255.1 L1227.0 251.9 L1218.3 248.9 L1209.5 246.1 L1200.7 243.5 L1191.8 241.0 L1182.9 238.7 L1173.9 236.6 L1164.9 234.7 L1155.8 232.9 L1146.6 231.3 L1137.4 229.9 L1128.2 228.7 L1119.0 227.7 L1109.7 226.8 L1100.3 226.2 L1091.0 225.7 L1081.6 225.4 L1072.2 225.4 L1062.8 225.5 L1053.4 225.9 L1044.0 226.4 L1034.5 227.2 L1025.1 228.1 L1015.7 229.3 L1006.3 230.7 L997.0 232.3 L987.6 234.1 L978.3 236.1 L969.0 238.4 L959.8 240.8 L950.6 243.5 L941.5 246.4 L932.4 249.5 L923.4 252.8 L914.5 256.4 L905.6 260.1 L896.8 264.1 L888.2 268.3 L879.6 272.7 L871.1 277.3 L862.8 282.2 L854.5 287.2 L846.4 292.5 L838.4 297.9 L830.5 303.6 L822.8 309.4 L815.3 315.5 L807.9 321.7 L800.6 328.2 L793.5 334.8 L786.6 341.6 L779.9 348.5 L773.4 355.7 L767.0 363.0 L760.8 370.4 L754.9 378.0 L749.1 385.8 L743.5 393.7 L738.1 401.7 L733.0 409.9 L728.1 418.2 L723.3 426.6 L718.8 435.1 L714.6 443.8 L710.5 452.5 L706.7 461.3 L703.1 470.2 L699.7 479.1 L696.6 488.2 L693.7 497.3 L691.0 506.4 L688.5 515.6 L686.3 524.9 L684.3 534.1 L682.5 543.5 L681.0 552.8 L679.6 562.1 L678.5 571.5 L677.7 580.9 L677.0 590.2 L676.6 599.6 L676.3 608.9 L676.3 618.3 L676.5 627.6 L676.9 636.9 L677.5 646.1 L678.3 655.3 L679.4 664.5 L680.6 673.6 L682.0 682.7 L683.5 691.7 L685.3 700.7 L687.3 709.6 L689.4 718.4 L696.7 717.4 L694.6 708.7 L692.6 700.0 L690.9 691.2 L689.3 682.3 L687.9 673.4 L686.7 664.4 L685.7 655.4 L684.9 646.3 L684.3 637.3 L683.9 628.1 L683.7 619.0 L683.7 609.8 L683.9 600.6 L684.3 591.4 L685.0 582.2 L685.8 573.0 L686.9 563.8 L688.2 554.6 L689.7 545.5 L691.5 536.3 L693.5 527.2 L695.7 518.1 L698.1 509.1 L700.7 500.1 L703.6 491.1 L706.7 482.2 L710.0 473.4 L713.6 464.7 L717.3 456.1 L721.3 447.5 L725.6 439.0 L730.0 430.7 L734.6 422.4 L739.5 414.3 L744.6 406.3 L749.9 398.4 L755.4 390.6 L761.0 383.0 L766.9 375.6 L773.0 368.3 L779.3 361.1 L785.7 354.1 L792.4 347.3 L799.2 340.7 L806.1 334.2 L813.3 327.9 L820.6 321.8 L828.0 315.9 L835.6 310.2 L843.3 304.6 L851.2 299.3 L859.2 294.2 L867.3 289.3 L875.5 284.6 L883.9 280.1 L892.3 275.8 L900.8 271.7 L909.5 267.8 L918.2 264.2 L926.9 260.8 L935.8 257.5 L944.7 254.5 L953.7 251.7 L962.7 249.2 L971.7 246.8 L980.9 244.7 L990.0 242.7 L999.2 241.0 L1008.4 239.5 L1017.6 238.2 L1026.8 237.1 L1036.0 236.2 L1045.2 235.5 L1054.5 235.0 L1063.7 234.8 L1072.9 234.7 L1082.1 234.8 L1091.3 235.1 L1100.4 235.6 L1109.6 236.3 L1118.6 237.2 L1127.7 238.3 L1136.7 239.5 L1145.7 240.9 L1154.6 242.5 L1163.5 244.3 L1172.3 246.3 L1181.1 248.4 L1189.8 250.7 L1198.5 253.2 L1207.1 255.8 L1215.6 258.7 L1224.1 261.6 L1232.5 264.7 L1240.8 268.0 L1249.0 271.4 L1257.2 275.0 L1265.3 278.8 L1273.3 282.6 L1281.2 286.7 L1289.1 290.9 L1296.8 295.2 L1304.5 299.6 L1312.1 304.2 L1319.6 309.0 L1326.9 313.8 L1334.2 318.8 L1341.4 324.0 L1348.5 329.3 L1355.5 334.7 L1362.4 340.2 L1369.2 345.8 L1375.9 351.6 L1382.5 357.5 L1388.9 363.5 L1395.3 369.7 L1401.5 375.9 L1407.6 382.3 L1413.6 388.8 L1419.5 395.4 L1425.3 402.1 L1430.9 408.9 L1436.4 415.9 L1441.8 422.9 L1447.0 430.1 L1452.1 437.3 L1457.1 444.7 L1461.9 452.1 L1466.6 459.7 L1471.2 467.4 L1475.6 475.1 L1479.9 482.9 L1484.0 490.9 L1487.9 498.9 L1491.7 507.0 L1495.4 515.2 L1498.8 523.5 L1502.2 531.8 L1505.3 540.3 L1508.3 548.8 L1511.1 557.3 L1513.7 566.0 L1516.2 574.7 L1518.5 583.4 L1520.5 592.3 L1522.5 601.1 L1524.2 610.1 L1525.7 619.0 L1527.0 628.1 L1528.2 637.1 L1529.1 646.2 L1529.8 655.3 L1530.4 664.5 L1530.7 673.6 L1530.8 682.8 L1530.7 692.0 L1530.4 701.2 L1529.9 710.4 L1529.2 719.6Z" fill="#88f0d8"/>
<path d="M1529.2 719.6 L1529.9 710.4 L1530.4 701.2 L1530.7 692.0 L1530.8 682.8 L1530.7 673.6 L1530.4 664.5 L1529.8 655.3 L1529.1 646.2 L1528.2 637.1 L1527.0 628.1 L1525.7 619.0 L1524.2 610.1 L1522.5 601.1 L1520.5 592.3 L1518.5 583.4 L1516.2 574.7 L1513.7 566.0 L1511.1 557.3 L1508.3 548.8 L1505.3 540.3 L1502.2 531.8 L1498.8 523.5 L1495.4 515.2 L1491.7 507.0 L1487.9 498.9 L1484.0 490.9 L1479.9 482.9 L1475.6 475.1 L1471.2 467.4 L1466.6 459.7 L1461.9 452.1 L1457.1 444.7 L1452.1 437.3 L1447.0 430.1 L1441.8 422.9 L1436.4 415.9 L1430.9 408.9 L1425.3 402.1 L1419.5 395.4 L1413.6 388.8 L1407.6 382.3 L1401.5 375.9 L1395.3 369.7 L1388.9 363.5 L1382.5 357.5 L1375.9 351.6 L1369.2 345.8 L1362.4 340.2 L1355.5 334.7 L1348.5 329.3 L1341.4 324.0 L1334.2 318.8 L1326.9 313.8 L1319.6 309.0 L1312.1 304.2 L1304.5 299.6 L1296.8 295.2 L1289.1 290.9 L1281.2 286.7 L1273.3 282.6 L1265.3 278.8 L1257.2 275.0 L1249.0 271.4 L1240.8 268.0 L1232.5 264.7 L1224.1 261.6 L1215.6 258.7 L1207.1 255.8 L1198.5 253.2 L1189.8 250.7 L1181.1 248.4 L1172.3 246.3 L1163.5 244.3 L1154.6 242.5 L1145.7 240.9 L1136.7 239.5 L1127.7 238.3 L1118.6 237.2 L1109.6 236.3 L1100.4 235.6 L1091.3 235.1 L1082.1 234.8 L1072.9 234.7 L1063.7 234.8 L1054.5 235.0 L1045.2 235.5 L1036.0 236.2 L1026.8 237.1 L1017.6 238.2 L1008.4 239.5 L999.2 241.0 L990.0 242.7 L980.9 244.7 L971.7 246.8 L962.7 249.2 L953.7 251.7 L944.7 254.5 L935.8 257.5 L926.9 260.8 L918.2 264.2 L909.5 267.8 L900.8 271.7 L892.3 275.8 L883.9 280.1 L875.5 284.6 L867.3 289.3 L859.2 294.2 L851.2 299.3 L843.3 304.6 L835.6 310.2 L828.0 315.9 L820.6 321.8 L813.3 327.9 L806.1 334.2 L799.2 340.7 L792.4 347.3 L785.7 354.1 L779.3 361.1 L773.0 368.3 L766.9 375.6 L761.0 383.0 L755.4 390.6 L749.9 398.4 L744.6 406.3 L739.5 414.3 L734.6 422.4 L730.0 430.7 L725.6 439.0 L721.3 447.5 L717.3 456.1 L713.6 464.7 L710.0 473.4 L706.7 482.2 L703.6 491.1 L700.7 500.1 L698.1 509.1 L695.7 518.1 L693.5 527.2 L691.5 536.3 L689.7 545.5 L688.2 554.6 L686.9 563.8 L685.8 573.0 L685.0 582.2 L684.3 591.4 L683.9 600.6 L683.7 609.8 L683.7 619.0 L683.9 628.1 L684.3 637.3 L684.9 646.3 L685.7 655.4 L686.7 664.4 L687.9 673.4 L689.3 682.3 L690.9 691.2 L692.6 700.0 L694.6 708.7 L696.7 717.4 L704.0 716.4 L701.9 707.8 L699.9 699.2 L698.2 690.6 L696.6 681.9 L695.2 673.1 L694.1 664.3 L693.1 655.5 L692.2 646.6 L691.6 637.7 L691.2 628.7 L691.0 619.7 L691.0 610.7 L691.2 601.7 L691.6 592.6 L692.3 583.6 L693.1 574.5 L694.2 565.5 L695.5 556.5 L697.0 547.4 L698.7 538.5 L700.6 529.5 L702.8 520.6 L705.2 511.7 L707.8 502.8 L710.6 494.1 L713.7 485.4 L716.9 476.7 L720.4 468.1 L724.2 459.6 L728.1 451.2 L732.3 442.9 L736.6 434.7 L741.2 426.6 L746.0 418.7 L751.0 410.8 L756.2 403.1 L761.6 395.5 L767.2 388.0 L773.0 380.7 L779.0 373.6 L785.2 366.6 L791.6 359.7 L798.1 353.0 L804.8 346.5 L811.7 340.2 L818.7 334.1 L825.9 328.1 L833.2 322.3 L840.7 316.7 L848.3 311.4 L856.0 306.2 L863.9 301.2 L871.9 296.4 L880.0 291.8 L888.2 287.4 L896.4 283.3 L904.8 279.3 L913.3 275.6 L921.9 272.0 L930.5 268.7 L939.2 265.6 L947.9 262.7 L956.7 260.0 L965.6 257.5 L974.5 255.3 L983.4 253.2 L992.4 251.4 L1001.4 249.7 L1010.4 248.3 L1019.4 247.1 L1028.4 246.1 L1037.5 245.2 L1046.5 244.6 L1055.6 244.2 L1064.6 244.0 L1073.6 244.0 L1082.6 244.1 L1091.6 244.5 L1100.5 245.1 L1109.5 245.8 L1118.3 246.7 L1127.2 247.8 L1136.0 249.1 L1144.8 250.6 L1153.5 252.2 L1162.1 254.0 L1170.8 256.0 L1179.3 258.1 L1187.8 260.4 L1196.3 262.9 L1204.6 265.6 L1212.9 268.4 L1221.2 271.3 L1229.3 274.4 L1237.4 277.7 L1245.5 281.1 L1253.4 284.6 L1261.3 288.3 L1269.1 292.2 L1276.7 296.2 L1284.4 300.3 L1291.9 304.6 L1299.3 309.0 L1306.7 313.5 L1313.9 318.2 L1321.1 323.0 L1328.1 327.9 L1335.1 333.0 L1342.0 338.2 L1348.7 343.5 L1355.4 348.9 L1362.0 354.4 L1368.4 360.1 L1374.8 365.9 L1381.0 371.8 L1387.1 377.8 L1393.1 383.9 L1399.0 390.2 L1404.8 396.5 L1410.5 403.0 L1416.0 409.6 L1421.4 416.2 L1426.7 423.0 L1431.9 429.9 L1436.9 436.9 L1441.8 443.9 L1446.6 451.1 L1451.2 458.4 L1455.7 465.7 L1460.1 473.2 L1464.3 480.7 L1468.4 488.4 L1472.3 496.1 L1476.1 503.9 L1479.7 511.8 L1483.2 519.7 L1486.5 527.8 L1489.6 535.9 L1492.6 544.0 L1495.5 552.3 L1498.1 560.6 L1500.6 569.0 L1502.9 577.4 L1505.1 585.9 L1507.1 594.5 L1508.8 603.1 L1510.5 611.7 L1511.9 620.4 L1513.1 629.1 L1514.2 637.9 L1515.0 646.7 L1515.7 655.5 L1516.2 664.3 L1516.4 673.2 L1516.5 682.1 L1516.4 690.9 L1516.1 699.8 L1515.5 708.7 L1514.8 717.6Z" fill="#7ed4f8"/>
<path d="M1514.8 717.6 L1515.5 708.7 L1516.1 699.8 L1516.4 690.9 L1516.5 682.1 L1516.4 673.2 L1516.2 664.3 L1515.7 655.5 L1515.0 646.7 L1514.2 637.9 L1513.1 629.1 L1511.9 620.4 L1510.5 611.7 L1508.8 603.1 L1507.1 594.5 L1505.1 585.9 L1502.9 577.4 L1500.6 569.0 L1498.1 560.6 L1495.5 552.3 L1492.6 544.0 L1489.6 535.9 L1486.5 527.8 L1483.2 519.7 L1479.7 511.8 L1476.1 503.9 L1472.3 496.1 L1468.4 488.4 L1464.3 480.7 L1460.1 473.2 L1455.7 465.7 L1451.2 458.4 L1446.6 451.1 L1441.8 443.9 L1436.9 436.9 L1431.9 429.9 L1426.7 423.0 L1421.4 416.2 L1416.0 409.6 L1410.5 403.0 L1404.8 396.5 L1399.0 390.2 L1393.1 383.9 L1387.1 377.8 L1381.0 371.8 L1374.8 365.9 L1368.4 360.1 L1362.0 354.4 L1355.4 348.9 L1348.7 343.5 L1342.0 338.2 L1335.1 333.0 L1328.1 327.9 L1321.1 323.0 L1313.9 318.2 L1306.7 313.5 L1299.3 309.0 L1291.9 304.6 L1284.4 300.3 L1276.7 296.2 L1269.1 292.2 L1261.3 288.3 L1253.4 284.6 L1245.5 281.1 L1237.4 277.7 L1229.3 274.4 L1221.2 271.3 L1212.9 268.4 L1204.6 265.6 L1196.3 262.9 L1187.8 260.4 L1179.3 258.1 L1170.8 256.0 L1162.1 254.0 L1153.5 252.2 L1144.8 250.6 L1136.0 249.1 L1127.2 247.8 L1118.3 246.7 L1109.5 245.8 L1100.5 245.1 L1091.6 244.5 L1082.6 244.1 L1073.6 244.0 L1064.6 244.0 L1055.6 244.2 L1046.5 244.6 L1037.5 245.2 L1028.4 246.1 L1019.4 247.1 L1010.4 248.3 L1001.4 249.7 L992.4 251.4 L983.4 253.2 L974.5 255.3 L965.6 257.5 L956.7 260.0 L947.9 262.7 L939.2 265.6 L930.5 268.7 L921.9 272.0 L913.3 275.6 L904.8 279.3 L896.4 283.3 L888.2 287.4 L880.0 291.8 L871.9 296.4 L863.9 301.2 L856.0 306.2 L848.3 311.4 L840.7 316.7 L833.2 322.3 L825.9 328.1 L818.7 334.1 L811.7 340.2 L804.8 346.5 L798.1 353.0 L791.6 359.7 L785.2 366.6 L779.0 373.6 L773.0 380.7 L767.2 388.0 L761.6 395.5 L756.2 403.1 L751.0 410.8 L746.0 418.7 L741.2 426.6 L736.6 434.7 L732.3 442.9 L728.1 451.2 L724.2 459.6 L720.4 468.1 L716.9 476.7 L713.7 485.4 L710.6 494.1 L707.8 502.8 L705.2 511.7 L702.8 520.6 L700.6 529.5 L698.7 538.5 L697.0 547.4 L695.5 556.5 L694.2 565.5 L693.1 574.5 L692.3 583.6 L691.6 592.6 L691.2 601.7 L691.0 610.7 L691.0 619.7 L691.2 628.7 L691.6 637.7 L692.2 646.6 L693.1 655.5 L694.1 664.3 L695.2 673.1 L696.6 681.9 L698.2 690.6 L699.9 699.2 L701.9 707.8 L704.0 716.4 L711.2 715.3 L709.2 707.0 L707.2 698.5 L705.5 690.1 L704.0 681.5 L702.6 672.9 L701.4 664.3 L700.4 655.6 L699.6 646.8 L699.0 638.1 L698.6 629.2 L698.4 620.4 L698.4 611.6 L698.6 602.7 L699.0 593.8 L699.6 584.9 L700.4 576.0 L701.5 567.2 L702.7 558.3 L704.2 549.4 L705.9 540.6 L707.8 531.8 L709.9 523.0 L712.3 514.3 L714.8 505.6 L717.6 497.0 L720.6 488.5 L723.9 480.0 L727.3 471.6 L731.0 463.2 L734.9 455.0 L739.0 446.8 L743.3 438.8 L747.8 430.9 L752.5 423.0 L757.5 415.3 L762.6 407.8 L767.9 400.3 L773.4 393.0 L779.2 385.9 L785.1 378.8 L791.1 372.0 L797.4 365.3 L803.8 358.8 L810.4 352.4 L817.2 346.2 L824.1 340.2 L831.2 334.4 L838.4 328.8 L845.8 323.3 L853.2 318.1 L860.8 313.0 L868.6 308.2 L876.4 303.5 L884.4 299.0 L892.4 294.8 L900.6 290.7 L908.8 286.9 L917.1 283.3 L925.5 279.9 L934.0 276.6 L942.5 273.6 L951.1 270.8 L959.8 268.3 L968.5 265.9 L977.2 263.7 L986.0 261.8 L994.8 260.0 L1003.6 258.4 L1012.4 257.1 L1021.2 256.0 L1030.1 255.0 L1039.0 254.3 L1047.8 253.7 L1056.7 253.4 L1065.5 253.2 L1074.3 253.3 L1083.1 253.5 L1091.9 253.9 L1100.6 254.5 L1109.4 255.3 L1118.0 256.2 L1126.7 257.4 L1135.3 258.7 L1143.8 260.2 L1152.3 261.9 L1160.8 263.7 L1169.2 265.7 L1177.5 267.8 L1185.8 270.2 L1194.0 272.6 L1202.2 275.3 L1210.3 278.1 L1218.3 281.0 L1226.2 284.1 L1234.1 287.3 L1241.9 290.7 L1249.6 294.2 L1257.2 297.9 L1264.8 301.7 L1272.3 305.7 L1279.6 309.8 L1286.9 314.0 L1294.2 318.3 L1301.3 322.8 L1308.3 327.4 L1315.2 332.1 L1322.1 337.0 L1328.8 342.0 L1335.4 347.1 L1342.0 352.3 L1348.4 357.6 L1354.7 363.0 L1361.0 368.6 L1367.1 374.3 L1373.1 380.1 L1379.0 386.0 L1384.8 392.0 L1390.4 398.1 L1396.0 404.3 L1401.4 410.6 L1406.8 417.0 L1412.0 423.5 L1417.0 430.1 L1422.0 436.8 L1426.8 443.7 L1431.5 450.6 L1436.1 457.5 L1440.5 464.6 L1444.8 471.8 L1449.0 479.0 L1453.0 486.4 L1456.9 493.8 L1460.6 501.3 L1464.2 508.9 L1467.7 516.5 L1471.0 524.2 L1474.1 532.0 L1477.1 539.9 L1480.0 547.8 L1482.6 555.8 L1485.2 563.9 L1487.5 572.0 L1489.7 580.2 L1491.7 588.4 L1493.6 596.7 L1495.2 605.0 L1496.7 613.3 L1498.1 621.7 L1499.2 630.2 L1500.2 638.6 L1501.0 647.1 L1501.6 655.6 L1502.0 664.2 L1502.2 672.7 L1502.2 681.3 L1502.1 689.9 L1501.7 698.4 L1501.2 707.0 L1500.5 715.6Z" fill="#c7c1f6"/>
</g>
<linearGradient id="g20" x1="0" y1="202.0" x2="0" y2="335.0" gradientUnits="userSpaceOnUse"><stop offset="0" stop-color="#d4f0fd"/><stop offset="0.5" stop-color="#cdedfc"/><stop offset="1" stop-color="#c2e7f9"/></linearGradient>
<g opacity="1.0" fill="url(#g20)">
<path d="M556.0 335.0 L583.0 227.0 L626.0 250.0 L690.0 292.0 L745.0 335.0Z"/>
<circle cx="583.0" cy="227.0" r="25.0"/>
<circle cx="626.0" cy="250.0" r="22.0"/>
<circle cx="690.0" cy="292.0" r="24.0"/>
<ellipse cx="566.0" cy="285.0" rx="30.0" ry="55.0"/>
</g>
<linearGradient id="g28" x1="0" y1="239.7" x2="0" y2="318.0" gradientUnits="userSpaceOnUse"><stop offset="0" stop-color="#ffffff"/><stop offset="0.5" stop-color="#f0f9fe"/><stop offset="1" stop-color="#c8e9f9"/></linearGradient>
<g opacity="1.0" fill="url(#g28)">
<path d="M586.0 318.0 L604.0 300.0 L659.5 267.0 L709.0 295.0 L745.0 318.0Z"/>
<circle cx="604.0" cy="300.0" r="16.0"/>
<circle cx="659.5" cy="267.0" r="27.3"/>
<circle cx="709.0" cy="295.0" r="22.0"/>
<ellipse cx="735.0" cy="306.0" rx="10.0" ry="9.0"/>
</g>
<linearGradient id="g36" x1="0" y1="211.0" x2="0" y2="338.0" gradientUnits="userSpaceOnUse"><stop offset="0" stop-color="#ffffff"/><stop offset="0.5" stop-color="#f0f9fe"/><stop offset="1" stop-color="#c8e9f9"/></linearGradient>
<linearGradient id="m37g" x1="812" y1="236" x2="850" y2="275" gradientUnits="userSpaceOnUse"><stop offset="0" stop-color="#fff" stop-opacity="1"/><stop offset="1" stop-color="#fff" stop-opacity="0.58"/></linearGradient>
<mask id="m37" maskUnits="userSpaceOnUse" x="371" y="157" width="1245" height="662"><rect x="371" y="157" width="1245" height="662" fill="url(#m37g)"/></mask>
<g opacity="1.0" fill="url(#g36)" mask="url(#m37)">
<path d="M735.0 338.0 L770.0 300.0 L825.0 243.0 L869.0 245.0 L901.0 266.0 L945.0 291.0 L980.0 305.0 L1035.0 338.0Z"/>
<circle cx="770.0" cy="300.0" r="28.0"/>
<circle cx="825.0" cy="243.0" r="32.0"/>
<circle cx="869.0" cy="245.0" r="14.0"/>
<circle cx="901.0" cy="266.0" r="27.0"/>
<circle cx="945.0" cy="291.0" r="19.0"/>
<circle cx="980.0" cy="305.0" r="16.0"/>
<ellipse cx="800.0" cy="330.0" rx="60.0" ry="8.0"/>
<ellipse cx="1010.0" cy="326.0" rx="25.0" ry="8.0"/>
<ellipse cx="940.0" cy="332.0" rx="90.0" ry="8.0"/>
</g>
<linearGradient id="g51" x1="0" y1="334.3" x2="0" y2="375.0" gradientUnits="userSpaceOnUse"><stop offset="0" stop-color="#ffffff"/><stop offset="0.5" stop-color="#f0f9fe"/><stop offset="1" stop-color="#c8e9f9"/></linearGradient>
<g opacity="1.0" fill="url(#g51)">
<path d="M832.0 375.0 L861.0 363.0 L892.0 351.0 L929.0 352.0 L948.0 360.0 L985.0 361.0 L1017.0 368.0 L1119.0 375.0Z"/>
<circle cx="861.0" cy="363.0" r="12.0"/>
<circle cx="892.0" cy="351.0" r="16.7"/>
<circle cx="929.0" cy="352.0" r="17.6"/>
<circle cx="948.0" cy="360.0" r="12.0"/>
<circle cx="985.0" cy="361.0" r="15.0"/>
<circle cx="1017.0" cy="368.0" r="12.0"/>
<ellipse cx="975.0" cy="370.0" rx="144.0" ry="6.0"/>
</g>
<linearGradient id="g62" x1="0" y1="312.0" x2="0" y2="356.0" gradientUnits="userSpaceOnUse"><stop offset="0" stop-color="#ffffff"/><stop offset="0.5" stop-color="#f0f9fe"/><stop offset="1" stop-color="#c8e9f9"/></linearGradient>
<g opacity="1.0" fill="url(#g62)">
<path d="M557.0 356.0 L567.5 332.0 L607.0 328.0 L629.0 342.0 L640.0 356.0Z"/>
<circle cx="567.5" cy="332.0" r="10.0"/>
<circle cx="607.0" cy="328.0" r="16.0"/>
<circle cx="629.0" cy="342.0" r="12.0"/>
</g>
<linearGradient id="g69" x1="0" y1="316.0" x2="0" y2="366.0" gradientUnits="userSpaceOnUse"><stop offset="0" stop-color="#ffffff"/><stop offset="0.5" stop-color="#f0f9fe"/><stop offset="1" stop-color="#c8e9f9"/></linearGradient>
<g opacity="1.0" fill="url(#g69)">
<path d="M617.0 366.0 L650.0 346.0 L680.6 330.0 L705.5 338.0 L715.0 347.0 L740.0 366.0Z"/>
<circle cx="650.0" cy="346.0" r="10.0"/>
<circle cx="680.6" cy="330.0" r="14.0"/>
<circle cx="705.5" cy="338.0" r="10.0"/>
<circle cx="715.0" cy="347.0" r="9.0"/>
<ellipse cx="678.0" cy="358.0" rx="62.0" ry="8.0"/>
</g>
<linearGradient id="g78" x1="0" y1="382.0" x2="0" y2="430.0" gradientUnits="userSpaceOnUse"><stop offset="0" stop-color="#ffffff"/><stop offset="0.5" stop-color="#f0f9fe"/><stop offset="1" stop-color="#c8e9f9"/></linearGradient>
<g opacity="1.0" fill="url(#g78)">
<path d="M600.0 430.0 L628.0 416.0 L660.0 404.0 L695.0 414.0 L715.0 430.0Z"/>
<circle cx="628.0" cy="416.0" r="12.0"/>
<circle cx="660.0" cy="404.0" r="22.0"/>
<circle cx="695.0" cy="414.0" r="16.0"/>
<ellipse cx="665.0" cy="430.0" rx="70.0" ry="6.0"/>
</g>
<linearGradient id="g86" x1="0" y1="365.0" x2="0" y2="436.0" gradientUnits="userSpaceOnUse"><stop offset="0" stop-color="#ffffff"/><stop offset="0.5" stop-color="#f0f9fe"/><stop offset="1" stop-color="#c8e9f9"/></linearGradient>
<g opacity="0.7" fill="url(#g86)">
<path d="M715.0 436.0 L731.0 417.0 L792.0 392.0 L849.0 406.0 L893.0 414.0 L930.0 425.0 L960.0 436.0Z"/>
<circle cx="731.0" cy="417.0" r="15.0"/>
<circle cx="792.0" cy="392.0" r="27.0"/>
<circle cx="849.0" cy="406.0" r="20.0"/>
<circle cx="893.0" cy="414.0" r="15.0"/>
<circle cx="930.0" cy="425.0" r="10.0"/>
<ellipse cx="840.0" cy="432.0" rx="120.0" ry="5.0"/>
</g>
<linearGradient id="g96" x1="0" y1="471.6" x2="0" y2="529.0" gradientUnits="userSpaceOnUse"><stop offset="0" stop-color="#ffffff"/><stop offset="0.5" stop-color="#f0f9fe"/><stop offset="1" stop-color="#c8e9f9"/></linearGradient>
<g opacity="1.0" fill="url(#g96)">
<path d="M798.0 529.0 L814.0 515.0 L840.0 506.0 L859.0 491.3 L895.6 489.0 L925.0 503.0 L952.7 500.8 L970.0 512.0 L1003.0 529.0Z"/>
<circle cx="814.0" cy="515.0" r="9.0"/>
<circle cx="840.0" cy="506.0" r="10.0"/>
<circle cx="859.0" cy="491.3" r="16.6"/>
<circle cx="895.6" cy="489.0" r="17.4"/>
<circle cx="925.0" cy="503.0" r="12.0"/>
<circle cx="952.7" cy="500.8" r="15.5"/>
<circle cx="970.0" cy="512.0" r="13.0"/>
<ellipse cx="900.0" cy="521.0" rx="100.0" ry="8.0"/>
</g>
<linearGradient id="g108" x1="0" y1="456.8" x2="0" y2="518.0" gradientUnits="userSpaceOnUse"><stop offset="0" stop-color="#ffffff"/><stop offset="0.5" stop-color="#f0f9fe"/><stop offset="1" stop-color="#c8e9f9"/></linearGradient>
<g opacity="1.0" fill="url(#g108)">
<path d="M1055.0 518.0 L1084.0 506.0 L1111.6 482.8 L1138.4 472.7 L1166.0 502.0 L1180.0 518.0Z"/>
<circle cx="1084.0" cy="506.0" r="12.0"/>
<circle cx="1111.6" cy="482.8" r="11.7"/>
<circle cx="1138.4" cy="472.7" r="15.9"/>
<circle cx="1166.0" cy="502.0" r="13.0"/>
<ellipse cx="1118.0" cy="511.0" rx="62.0" ry="7.0"/>
</g>
<linearGradient id="g117" x1="0" y1="379.3" x2="0" y2="438.0" gradientUnits="userSpaceOnUse"><stop offset="0" stop-color="#ffffff"/><stop offset="0.5" stop-color="#f0f9fe"/><stop offset="1" stop-color="#c8e9f9"/></linearGradient>
<g opacity="1.0" fill="url(#g117)">
<path d="M1266.0 438.0 L1294.0 426.0 L1322.6 405.3 L1349.3 395.3 L1375.0 418.0 L1385.0 438.0Z"/>
<circle cx="1294.0" cy="426.0" r="12.0"/>
<circle cx="1322.6" cy="405.3" r="11.8"/>
<circle cx="1349.3" cy="395.3" r="16.0"/>
<circle cx="1375.0" cy="418.0" r="13.0"/>
<ellipse cx="1326.0" cy="431.0" rx="60.0" ry="7.0"/>
</g>
<linearGradient id="g126" x1="0" y1="409.0" x2="0" y2="443.0" gradientUnits="userSpaceOnUse"><stop offset="0" stop-color="#ffffff"/><stop offset="0.5" stop-color="#f0f9fe"/><stop offset="1" stop-color="#c8e9f9"/></linearGradient>
<g opacity="0.6" fill="url(#g126)">
<path d="M1293.0 443.0 L1341.0 436.0 L1370.0 432.0 L1408.0 426.0 L1440.0 434.0 L1499.0 433.0 L1540.0 443.0Z"/>
<circle cx="1341.0" cy="436.0" r="9.0"/>
<circle cx="1370.0" cy="432.0" r="13.0"/>
<circle cx="1408.0" cy="426.0" r="17.0"/>
<circle cx="1440.0" cy="434.0" r="12.0"/>
<circle cx="1499.0" cy="433.0" r="16.0"/>
<ellipse cx="1416.0" cy="438.0" rx="123.0" ry="6.0"/>
</g>
<linearGradient id="g136" x1="0" y1="466.8" x2="0" y2="501.0" gradientUnits="userSpaceOnUse"><stop offset="0" stop-color="#ffffff"/><stop offset="0.5" stop-color="#f0f9fe"/><stop offset="1" stop-color="#c8e9f9"/></linearGradient>
<g opacity="1.0" fill="url(#g136)">
<path d="M1242.0 501.0 L1291.0 497.0 L1313.7 489.0 L1339.0 487.0 L1358.3 484.8 L1380.0 492.0 L1397.0 500.0 L1408.0 501.0Z"/>
<circle cx="1291.0" cy="497.0" r="8.0"/>
<circle cx="1313.7" cy="489.0" r="12.0"/>
<circle cx="1339.0" cy="487.0" r="12.0"/>
<circle cx="1358.3" cy="484.8" r="18.0"/>
<circle cx="1380.0" cy="492.0" r="8.0"/>
<circle cx="1397.0" cy="500.0" r="8.0"/>
<ellipse cx="1325.0" cy="497.0" rx="83.0" ry="5.0"/>
</g>
<linearGradient id="g147" x1="0" y1="474.5" x2="0" y2="503.0" gradientUnits="userSpaceOnUse"><stop offset="0" stop-color="#ffffff"/><stop offset="0.5" stop-color="#f0f9fe"/><stop offset="1" stop-color="#c8e9f9"/></linearGradient>
<g opacity="0.6" fill="url(#g147)">
<path d="M1410.0 503.0 L1427.0 497.0 L1447.0 487.5 L1479.0 497.0 L1500.0 503.0Z"/>
<circle cx="1427.0" cy="497.0" r="9.0"/>
<circle cx="1447.0" cy="487.5" r="13.0"/>
<circle cx="1479.0" cy="497.0" r="9.0"/>
</g>
<linearGradient id="g154" x1="0" y1="528.0" x2="0" y2="568.0" gradientUnits="userSpaceOnUse"><stop offset="0" stop-color="#ffffff"/><stop offset="0.5" stop-color="#f0f9fe"/><stop offset="1" stop-color="#c8e9f9"/></linearGradient>
<g opacity="1.0" fill="url(#g154)">
<path d="M570.0 568.0 L590.0 556.0 L607.0 543.0 L625.0 556.0 L650.0 568.0Z"/>
<circle cx="590.0" cy="556.0" r="10.0"/>
<circle cx="607.0" cy="543.0" r="15.0"/>
<circle cx="625.0" cy="556.0" r="10.0"/>
<ellipse cx="610.0" cy="562.0" rx="40.0" ry="6.0"/>
</g>
<linearGradient id="g162" x1="0" y1="553.0" x2="0" y2="580.0" gradientUnits="userSpaceOnUse"><stop offset="0" stop-color="#ffffff"/><stop offset="0.5" stop-color="#f0f9fe"/><stop offset="1" stop-color="#c8e9f9"/></linearGradient>
<g opacity="0.35" fill="url(#g162)">
<path d="M700.0 580.0 L735.0 565.0 L770.0 568.0 L800.0 574.0 L830.0 580.0Z"/>
<circle cx="735.0" cy="565.0" r="12.0"/>
<circle cx="770.0" cy="568.0" r="14.0"/>
<circle cx="800.0" cy="574.0" r="10.0"/>
</g>
<linearGradient id="bm2" x1="1000" y1="635" x2="1330" y2="740" gradientUnits="userSpaceOnUse"><stop offset="0" stop-color="#a2bde2"/><stop offset="0.6" stop-color="#bcd6ee"/><stop offset="1" stop-color="#d2e8f4"/></linearGradient>
<path d="M1000 716 L1007.6 713.4 L1034 690.6 L1068.6 671.5 L1082 648.6 L1106.7 643 L1133.4 639 L1167.7 646.7 L1198 660 L1225 648.6 L1251.6 635.3 L1266.9 643 L1289.7 654.3 L1324 656 L1340 700 L1300 740 L1000 745Z" fill="url(#bm2)"/>
<path d="M1082 650 L1133 640 L1167 647 L1120 655Z M1225 650 L1251 636 L1262 645 L1240 660Z" fill="#b8cfe8" opacity="0.7"/>
<linearGradient id="mt2" x1="0" y1="596" x2="0" y2="720" gradientUnits="userSpaceOnUse"><stop offset="0" stop-color="#8fa898"/><stop offset="0.5" stop-color="#86a59c"/><stop offset="1" stop-color="#7aa7a0"/></linearGradient>
<path d="M1152.5 728.7 L1209.7 705.8 L1266.9 686.7 L1331.7 654.3 L1381 637 L1404 618 L1419 603 L1457.5 596 L1488 603 L1533.7 601 L1568 597 L1594.7 608.6 L1616 614 L1616 730 L1152 735Z" fill="url(#mt2)"/>
<path d="M1419 604 L1457.5 597 L1470 606 L1440 612 L1428 622 L1415 615Z M1533 602 L1568 598 L1580 606 L1550 610Z" fill="#a4b894" opacity="0.6"/>
<path d="M1440 625 Q1470 615 1500 618 L1470 630Z M1560 630 Q1590 620 1616 625 L1616 645 L1580 650Z M1380 650 Q1420 640 1450 645 L1410 660Z" fill="#98a08c" opacity="0.35"/>
<path d="M1280 690 Q1400 660 1616 640 L1616 660 Q1400 680 1290 700Z" fill="#7a9c98" opacity="0.5"/>
<path d="M1010 735 L1026.7 728.7 L1076 717 L1125.8 707.7 L1171.6 715.3 L1200 722 L1200 740 L1010 740Z" fill="#7ba69f"/>
<rect x="1015" y="730" width="160" height="23" fill="#a6cde6"/>
<rect x="1015" y="730" width="160" height="2" fill="#8fb8c8"/>
<path d="M1300 712 L1302.0 697.4 L1303.4 693.1 L1304.8 697.4 L1306.8 701.2 L1308.9 697.1 L1310.2 692.9 L1311.6 697.1 L1313.7 701.7 L1315.4 696.5 L1316.5 692.3 L1317.7 696.5 L1319.4 700.9 L1321.9 697.8 L1323.5 694.7 L1325.1 697.8 L1327.6 701.4 L1329.2 694.1 L1330.3 689.0 L1331.3 694.1 L1332.9 699.6 L1334.5 692.9 L1335.5 687.3 L1336.6 692.9 L1338.1 698.3 L1340.4 694.0 L1341.9 689.5 L1343.4 694.0 L1345.7 700.3 L1347.2 693.7 L1348.3 689.4 L1349.3 693.7 L1350.8 699.9 L1352.5 694.5 L1353.7 691.0 L1354.8 694.5 L1356.5 699.6 L1358.6 693.1 L1360.0 689.1 L1361.3 693.1 L1363.4 696.7 L1365.5 691.7 L1366.9 687.1 L1368.4 691.7 L1370.5 697.1 L1372.8 691.9 L1374.3 687.8 L1375.8 691.9 L1378.1 697.2 L1380.8 689.0 L1382.6 683.4 L1384.4 689.0 L1387.1 694.8 L1389.5 691.1 L1391.0 687.4 L1392.6 691.1 L1395.0 695.9 L1396.8 691.4 L1398.0 688.4 L1399.3 691.4 L1401.1 693.6 L1403.1 687.7 L1404.4 682.5 L1405.7 687.7 L1407.7 694.2 L1410.4 687.1 L1412.1 681.9 L1413.9 687.1 L1416.5 694.8 L1418.3 686.1 L1419.5 680.7 L1420.6 686.1 L1422.4 692.7 L1425.1 687.7 L1426.8 683.8 L1428.6 687.7 L1431.3 693.4 L1433.6 685.4 L1435.1 680.4 L1436.6 685.4 L1438.8 692.0 L1440.4 686.6 L1441.5 682.9 L1442.6 686.6 L1444.2 689.3 L1446.6 687.0 L1448.2 683.9 L1449.8 687.0 L1452.2 691.0 L1453.8 686.6 L1454.9 683.6 L1456.0 686.6 L1457.6 688.7 L1459.3 684.1 L1460.5 679.7 L1461.6 684.1 L1463.3 689.3 L1465.0 682.8 L1466.2 678.0 L1467.4 682.8 L1469.1 689.7 L1471.4 684.9 L1472.9 681.8 L1474.4 684.9 L1476.7 688.4 L1478.4 683.7 L1479.6 680.1 L1480.8 683.7 L1482.5 686.1 L1485.0 683.0 L1486.6 679.4 L1488.3 683.0 L1490.7 685.8 L1492.5 681.9 L1493.6 678.0 L1494.8 681.9 L1496.6 685.2 L1498.8 682.7 L1500.3 679.6 L1501.9 682.7 L1504.1 684.3 L1505.9 681.4 L1507.1 677.8 L1508.2 681.4 L1510.0 684.3 L1511.9 680.7 L1513.1 677.1 L1514.4 680.7 L1516.3 685.9 L1517.9 679.0 L1519.0 674.5 L1520.1 679.0 L1521.7 684.9 L1523.9 679.4 L1525.4 675.6 L1526.8 679.4 L1529.1 683.8 L1531.7 678.3 L1533.5 674.1 L1535.2 678.3 L1537.9 682.8 L1540.4 678.8 L1542.1 675.5 L1543.8 678.8 L1546.4 683.3 L1549.0 675.4 L1550.7 670.3 L1552.4 675.4 L1555.0 682.3 L1556.7 675.0 L1557.9 670.1 L1559.0 675.0 L1560.8 679.5 L1562.5 673.6 L1563.7 668.2 L1564.8 673.6 L1566.5 679.2 L1568.8 675.4 L1570.3 671.4 L1571.7 675.4 L1574.0 681.0 L1575.5 672.5 L1576.5 667.0 L1577.6 672.5 L1579.1 680.0 L1581.5 675.0 L1583.0 671.5 L1584.6 675.0 L1586.9 677.8 L1589.1 674.2 L1590.6 670.6 L1592.1 674.2 L1594.3 679.1 L1596.7 674.5 L1598.3 671.5 L1599.8 674.5 L1602.2 678.3 L1604.4 670.5 L1605.8 665.3 L1607.3 670.5 L1609.4 676.5 L1611.3 669.6 L1612.5 664.3 L1613.7 669.6 L1615.6 677.1 L1617.1 671.8 L1618.1 668.3 L1619.1 671.8 L1620.6 675.8 L1616 725 L1300 725Z" fill="#6c9a6a"/>
<linearGradient id="rm" x1="0" y1="690" x2="0" y2="819" gradientUnits="userSpaceOnUse"><stop offset="0" stop-color="#a2d868"/><stop offset="0.34" stop-color="#ace070"/><stop offset="0.35" stop-color="#b8e27a"/><stop offset="1" stop-color="#c4e686"/></linearGradient>
<path d="M1320 716 Q1450 700 1616 692 L1616 819 L1320 819Z" fill="url(#rm)"/>
<linearGradient id="mm" x1="0" y1="720" x2="0" y2="819" gradientUnits="userSpaceOnUse"><stop offset="0" stop-color="#86c838"/><stop offset="1" stop-color="#a2d652"/></linearGradient>
<path d="M1015 752 L1179 740 L1331.7 721 L1400 713 Q1368 722 1363 745 Q1362 770 1390 792 Q1420 808 1440 819 L1015 819Z" fill="url(#mm)"/>
<path d="M1230 819 Q1262 770 1363 745 Q1362 770 1390 792 Q1420 808 1440 819Z" fill="#acd862" opacity="0.75"/>
<path d="M1398 712 Q1368 722 1363 745 Q1362 770 1390 792 Q1420 808 1440 819 L1456 819 Q1425 800 1398 785 Q1370 765 1370 745 Q1374 725 1404 713Z" fill="#dccdac"/>
<path d="M1370 745 Q1370 765 1398 785 Q1425 800 1456 819 L1462 819 Q1430 800 1402 784 Q1374 764 1372 746Z" fill="#7fb648" opacity="0.8"/>
<g>
<rect x="1206" y="717" width="22" height="21" fill="#b39a7a"/><path d="M1204 726 L1210 716 L1228 716 L1228 726Z" fill="#a07070"/>
<rect x="1330" y="716" width="18" height="17" fill="#b09a7c"/><path d="M1328 722 L1332 714 L1346 714 L1350 722Z" fill="#9e6a6a"/>
<rect x="1171" y="729" width="41" height="18" fill="#d4a8b0"/><path d="M1171 735 L1180 713 L1203 713 L1213 735Z" fill="#c8705a"/>
<rect x="1227" y="700" width="9" height="45" fill="#9fb2c4"/><path d="M1225 701 L1234 661 L1245 701Z" fill="#d2dcd6"/>
<rect x="1235" y="728" width="32" height="21" fill="#b08e6e"/><path d="M1234 729 L1267 694 L1290 692 L1268 729Z" fill="#9c7070"/>
<path d="M1266 729 L1288 693 L1301 729 L1299 749 L1266 749Z" fill="#f5c79a"/>
<rect x="1299" y="705" width="31" height="40" fill="#f0f0ea"/><rect x="1292" y="705" width="9" height="40" fill="#8e8c9a"/>
<path d="M1293 705 L1302 700 L1318 700 L1332 718 L1302 718Z" fill="#c8606a"/>
<g fill="#5a6470"><rect x="1305" y="724" width="4" height="5"/><rect x="1312" y="724" width="4" height="5"/><rect x="1319" y="724" width="4" height="5"/><rect x="1305" y="734" width="4" height="5"/><rect x="1312" y="734" width="4" height="5"/><rect x="1319" y="734" width="4" height="5"/></g>
<g fill="#a08060"><rect x="1280" y="725" width="4" height="6"/><rect x="1287" y="725" width="4" height="6"/><rect x="1280" y="735" width="4" height="6"/><rect x="1287" y="735" width="4" height="6"/></g>
</g>
<linearGradient id="bu" x1="0" y1="0" x2="1" y2="1"><stop offset="0" stop-color="#7fa744"/><stop offset="0.55" stop-color="#5f8c44"/><stop offset="1" stop-color="#4a7646"/></linearGradient>
<linearGradient id="bu2" x1="0" y1="0" x2="1" y2="1"><stop offset="0" stop-color="#6e9a40"/><stop offset="1" stop-color="#466f44"/></linearGradient>
<path d="M1053.0 783.0 L1058.1 780.7 L1054.0 777.4 L1057.8 775.7 L1056.8 772.2 L1061.2 771.6 L1061.3 767.9 L1066.5 769.4 L1067.0 764.8 L1071.3 766.9 L1073.6 763.2 L1077.0 766.3 L1080.4 763.2 L1082.8 766.5 L1087.0 764.8 L1088.3 768.3 L1092.7 767.9 L1091.4 772.6 L1097.2 772.2 L1094.1 776.5 L1100.0 777.4 L1097.9 780.5 L1101.0 783.0 L1101.0 822 L1053.0 822Z" fill="url(#bu)"/>
<path d="M1096.0 779.0 L1100.4 776.5 L1096.9 772.8 L1100.1 770.8 L1099.5 767.1 L1104.8 767.5 L1103.6 762.4 L1107.7 763.0 L1108.9 759.0 L1113.1 762.3 L1114.9 757.2 L1118.0 761.2 L1121.1 757.2 L1123.6 760.0 L1127.1 759.0 L1127.6 764.1 L1132.4 762.4 L1132.2 766.7 L1136.5 767.1 L1134.7 771.4 L1139.1 772.8 L1136.2 776.4 L1140.0 779.0 L1140.0 822 L1096.0 822Z" fill="url(#bu)"/>
<path d="M1131.0 785.0 L1133.2 782.5 L1131.8 779.4 L1136.5 778.5 L1134.0 774.2 L1137.5 773.6 L1137.6 769.9 L1141.8 771.6 L1142.1 766.8 L1145.2 767.8 L1147.3 765.2 L1150.0 769.4 L1152.7 765.2 L1154.7 768.0 L1157.9 766.8 L1158.9 770.5 L1162.4 769.9 L1162.7 773.4 L1166.0 774.2 L1165.6 777.5 L1168.2 779.4 L1165.2 782.7 L1169.0 785.0 L1169.0 822 L1131.0 822Z" fill="url(#bu)"/>
<path d="M1181.0 779.0 L1183.2 776.5 L1181.8 773.4 L1186.2 772.4 L1184.0 768.2 L1188.8 768.7 L1187.6 763.9 L1190.8 763.9 L1192.1 760.8 L1195.7 763.6 L1197.3 759.2 L1200.0 763.1 L1202.7 759.2 L1204.6 762.5 L1207.9 760.8 L1208.4 765.2 L1212.4 763.9 L1212.7 767.4 L1216.0 768.2 L1214.0 772.3 L1218.2 773.4 L1216.8 776.5 L1219.0 779.0 L1219.0 822 L1181.0 822Z" fill="url(#bu)"/>
<path d="M1211.0 781.0 L1213.8 778.6 L1211.7 775.4 L1215.3 774.2 L1213.7 770.2 L1216.7 769.5 L1216.9 765.9 L1220.5 767.3 L1220.9 762.8 L1224.0 764.9 L1225.6 761.2 L1228.0 764.6 L1230.4 761.2 L1232.0 765.1 L1235.1 762.8 L1236.2 765.9 L1239.1 765.9 L1238.2 770.6 L1242.3 770.2 L1240.9 774.1 L1244.3 775.4 L1241.6 778.7 L1245.0 781.0 L1245.0 822 L1211.0 822Z" fill="url(#bu)"/>
<path d="M1235.0 795.0 L1241.2 792.4 L1236.3 788.8 L1241.0 786.8 L1240.2 783.1 L1245.7 782.1 L1246.4 778.4 L1252.1 778.5 L1254.3 775.0 L1259.9 776.5 L1263.3 773.2 L1268.0 775.5 L1272.7 773.2 L1275.3 778.5 L1281.7 775.0 L1283.3 779.2 L1289.6 778.4 L1288.2 783.3 L1295.8 783.1 L1294.0 787.1 L1299.7 788.8 L1295.2 792.4 L1301.0 795.0 L1301.0 822 L1235.0 822Z" fill="url(#bu)"/>
<path d="M1165.0 801.0 L1168.8 799.0 L1165.7 795.9 L1168.6 794.5 L1167.7 791.3 L1171.8 791.6 L1170.9 787.4 L1174.3 788.3 L1174.9 784.6 L1177.9 786.1 L1179.6 783.2 L1182.0 785.2 L1184.4 783.2 L1186.0 786.6 L1189.1 784.6 L1189.7 788.3 L1193.1 787.4 L1192.1 791.8 L1196.3 791.3 L1194.9 794.8 L1198.3 795.9 L1195.9 798.9 L1199.0 801.0 L1199.0 822 L1165.0 822Z" fill="url(#bu2)"/>
<path d="M1090.0 803.0 L1097.6 800.6 L1091.8 797.4 L1101.8 796.3 L1097.1 792.2 L1105.9 791.8 L1105.5 787.9 L1115.3 789.4 L1116.3 784.8 L1124.4 786.9 L1128.6 783.2 L1135.0 785.1 L1141.4 783.2 L1145.0 787.8 L1153.7 784.8 L1154.9 789.2 L1164.5 787.9 L1164.3 791.7 L1172.9 792.2 L1167.3 796.4 L1178.2 797.4 L1170.6 800.7 L1180.0 803.0 L1180.0 822 L1090.0 822Z" fill="url(#bu2)"/>
<path d="M1286.0 806.0 L1289.1 804.2 L1286.6 801.5 L1289.2 800.3 L1288.2 797.3 L1291.7 797.8 L1290.8 793.9 L1293.6 794.7 L1294.2 791.4 L1296.5 792.2 L1298.0 790.2 L1300.0 793.0 L1302.0 790.2 L1303.5 792.2 L1305.8 791.4 L1306.5 794.5 L1309.2 793.9 L1309.4 796.7 L1311.8 797.3 L1310.0 800.8 L1313.4 801.5 L1312.0 804.0 L1314.0 806.0 L1314.0 822 L1286.0 822Z" fill="url(#bu2)"/>
<path d="M1385 822 L1386 810 L1392 806 L1398 808 L1404 806 L1410 814 L1412 822Z" fill="#5f8a40"/>
<linearGradient id="tg201" x1="0" y1="452.0" x2="0" y2="640.0" gradientUnits="userSpaceOnUse"><stop offset="0" stop-color="#426a4a"/><stop offset="0.5" stop-color="#4b7a47"/><stop offset="1" stop-color="#66a03e"/></linearGradient>
<path d="M556.0 449.0 L557.5 457.6 L559.9 454.9 L562.4 458.6 L564.6 459.0 L562.7 463.7 L560.4 465.5 L560.9 467.2 L566.3 470.9 L569.8 473.0 L566.9 475.9 L562.9 477.8 L562.5 479.4 L569.2 483.2 L573.6 485.2 L567.4 488.2 L564.5 490.1 L562.6 491.7 L570.1 495.5 L574.8 498.8 L568.3 500.5 L566.1 502.4 L564.9 504.0 L573.9 507.8 L579.8 508.2 L571.0 512.8 L567.7 514.7 L563.2 516.3 L571.4 520.1 L576.5 520.1 L569.2 525.1 L564.9 526.9 L572.0 528.6 L580.9 532.3 L589.3 535.3 L582.4 537.4 L572.0 539.2 L568.5 540.9 L580.6 544.6 L588.8 544.3 L580.2 549.6 L573.9 551.5 L571.5 553.1 L585.4 556.9 L595.2 559.5 L580.8 561.9 L572.5 563.8 L567.7 565.4 L578.1 569.2 L585.5 570.5 L573.7 574.2 L570.8 576.1 L570.5 577.7 L583.4 581.5 L592.5 581.8 L581.4 586.5 L572.3 588.4 L575.0 590.0 L587.3 593.8 L597.8 597.9 L589.2 598.8 L572.9 600.6 L579.8 602.3 L593.4 606.0 L605.9 610.3 L593.8 611.0 L578.7 612.9 L573.4 614.6 L593.1 618.3 L605.4 622.5 L587.4 623.3 L582.9 625.2 L576.4 626.8 L588.9 630.6 L599.9 630.3 L590.6 635.6 L575.8 637.5 L600.0 680.0 L512.0 680.0 L526.8 637.5 L514.3 635.6 L499.1 631.5 L513.3 630.6 L529.5 626.8 L538.2 625.2 L525.6 623.3 L516.7 618.8 L526.6 618.3 L540.7 614.6 L531.4 612.9 L517.8 611.0 L501.5 607.3 L515.1 606.0 L529.1 602.3 L536.9 600.6 L529.7 598.8 L514.3 596.1 L524.7 593.8 L539.6 590.0 L532.9 588.4 L524.4 586.5 L510.7 583.6 L522.0 581.5 L533.5 577.7 L539.1 576.1 L534.7 574.2 L525.2 572.1 L532.9 569.2 L541.3 565.4 L537.4 563.8 L531.2 561.9 L516.0 557.3 L526.0 556.9 L538.2 553.1 L543.6 551.5 L540.8 549.6 L531.7 544.8 L537.8 544.6 L545.7 540.9 L539.1 539.2 L536.8 537.4 L524.6 534.6 L532.5 532.3 L542.9 528.6 L541.5 526.9 L536.8 525.1 L526.4 522.4 L533.8 520.1 L543.3 516.3 L548.6 514.7 L544.6 512.8 L537.9 507.2 L542.4 507.8 L547.8 504.0 L548.4 502.4 L544.2 500.5 L537.4 498.3 L542.1 495.5 L548.6 491.7 L548.5 490.1 L546.7 488.2 L542.1 483.0 L545.5 483.2 L549.8 479.4 L550.6 477.8 L545.6 475.9 L542.9 475.1 L546.1 470.9 L549.7 467.2 L552.1 465.5 L551.3 463.7 L548.4 459.1 L550.3 458.6 L552.7 454.9 L554.5 457.6Z" fill="url(#tg201)"/>
<linearGradient id="tg203" x1="0" y1="524.0" x2="0" y2="660.0" gradientUnits="userSpaceOnUse"><stop offset="0" stop-color="#426a4a"/><stop offset="0.5" stop-color="#4b7a47"/><stop offset="1" stop-color="#66a03e"/></linearGradient>
<path d="M630.0 521.0 L631.5 528.1 L633.4 526.8 L635.8 530.6 L637.7 533.2 L634.9 535.5 L633.6 537.4 L635.6 539.0 L640.0 542.7 L643.3 544.7 L638.7 547.6 L635.8 549.5 L637.6 551.1 L644.2 554.8 L649.0 555.8 L644.4 559.7 L640.0 561.6 L639.9 563.2 L649.3 566.9 L655.7 570.1 L649.2 571.8 L642.5 573.7 L640.0 575.3 L646.6 579.0 L652.2 579.0 L647.0 584.0 L639.6 585.8 L639.4 587.4 L650.1 591.1 L656.8 590.6 L647.2 596.1 L643.6 597.9 L644.8 599.5 L655.3 603.3 L663.7 605.0 L655.8 608.2 L646.5 610.1 L642.4 611.7 L655.3 615.4 L663.7 617.3 L656.5 620.3 L644.2 622.2 L649.5 623.8 L662.9 627.5 L673.8 631.0 L658.1 632.4 L652.0 634.3 L647.7 635.9 L662.3 639.6 L673.0 641.6 L656.7 644.5 L651.7 646.4 L651.4 648.0 L667.3 651.7 L679.7 654.4 L667.9 656.7 L656.0 658.5 L671.6 700.0 L588.4 700.0 L601.2 658.5 L594.7 656.7 L574.3 655.3 L588.3 651.7 L603.0 648.0 L610.2 646.4 L600.3 644.5 L587.3 640.9 L598.0 639.6 L612.5 635.9 L608.6 634.3 L598.6 632.4 L588.4 631.3 L598.8 627.5 L612.6 623.8 L615.0 622.2 L608.4 620.3 L598.5 616.5 L606.4 615.4 L615.5 611.7 L613.0 610.1 L601.3 608.2 L589.7 607.5 L599.8 603.3 L612.6 599.5 L619.6 597.9 L613.6 596.1 L605.2 591.3 L611.4 591.1 L620.1 587.4 L618.9 585.8 L615.1 584.0 L608.1 582.0 L613.5 579.0 L620.9 575.3 L620.5 573.7 L617.4 571.8 L611.9 566.9 L616.4 566.9 L621.8 563.2 L619.2 561.6 L616.1 559.7 L610.3 555.7 L615.2 554.8 L620.7 551.1 L623.0 549.5 L618.9 547.6 L615.8 546.0 L619.4 542.7 L623.9 539.0 L626.3 537.4 L624.3 535.5 L620.9 534.1 L623.2 530.6 L626.7 526.8 L628.5 528.1Z" fill="url(#tg203)"/>
<linearGradient id="tg205" x1="0" y1="590.0" x2="0" y2="672.0" gradientUnits="userSpaceOnUse"><stop offset="0" stop-color="#426a4a"/><stop offset="0.5" stop-color="#4b7a47"/><stop offset="1" stop-color="#66a03e"/></linearGradient>
<path d="M688.0 587.0 L689.5 592.5 L690.1 593.1 L692.3 597.2 L693.7 599.9 L692.2 602.7 L690.4 604.8 L691.7 606.5 L695.3 610.6 L697.7 611.3 L694.1 616.1 L693.0 618.2 L694.3 619.9 L700.7 624.0 L704.9 625.9 L699.7 629.5 L695.8 631.5 L696.8 633.3 L706.1 637.4 L712.1 642.1 L707.0 642.9 L699.1 644.9 L696.2 646.7 L703.5 650.8 L708.6 653.6 L704.3 656.3 L696.9 658.3 L698.6 660.1 L706.2 664.2 L712.2 666.0 L707.1 669.7 L700.7 671.7 L712.0 712.0 L664.0 712.0 L678.2 671.7 L670.6 669.7 L664.3 666.0 L670.2 664.2 L677.5 660.1 L675.3 658.3 L666.4 656.3 L659.5 650.2 L666.6 650.8 L673.8 646.7 L678.3 644.9 L674.6 642.9 L669.6 640.0 L674.2 637.4 L680.6 633.3 L680.9 631.5 L676.8 629.5 L670.6 625.3 L675.0 624.0 L681.4 619.9 L681.3 618.2 L679.7 616.1 L675.2 611.9 L678.4 610.6 L681.8 606.5 L685.2 604.8 L682.6 602.7 L681.2 597.5 L682.9 597.2 L685.4 593.1 L686.5 592.5Z" fill="url(#tg205)"/>
<linearGradient id="tg207" x1="0" y1="628.0" x2="0" y2="690.0" gradientUnits="userSpaceOnUse"><stop offset="0" stop-color="#426a4a"/><stop offset="0.5" stop-color="#4b7a47"/><stop offset="1" stop-color="#66a03e"/></linearGradient>
<path d="M734.5 625.0 L736.0 629.9 L736.8 630.4 L738.5 633.5 L739.9 633.5 L737.9 637.6 L736.8 639.2 L737.1 640.5 L739.8 643.6 L741.6 647.2 L739.0 647.7 L737.9 649.3 L741.2 650.6 L745.5 653.7 L749.2 655.8 L744.5 657.9 L741.9 659.4 L739.6 660.8 L745.0 663.9 L748.6 664.0 L744.7 668.0 L740.4 669.5 L739.9 670.9 L745.6 674.0 L749.3 673.6 L743.7 678.1 L741.8 679.7 L743.6 681.0 L753.6 684.1 L760.0 686.1 L752.2 688.2 L748.2 689.8 L752.9 730.0 L716.1 730.0 L725.5 689.8 L720.9 688.2 L715.9 684.6 L720.5 684.1 L727.9 681.0 L727.3 679.7 L724.2 678.1 L717.5 674.1 L721.8 674.0 L726.5 670.9 L726.7 669.5 L722.8 668.0 L719.0 665.6 L722.9 663.9 L728.5 660.8 L728.2 659.4 L725.1 657.9 L721.6 653.9 L724.8 653.7 L729.3 650.6 L729.3 649.3 L726.9 647.7 L724.3 647.1 L726.9 643.6 L730.3 640.5 L732.1 639.2 L731.6 637.6 L729.7 636.1 L730.9 633.5 L732.6 630.4 L733.0 629.9Z" fill="url(#tg207)"/>
<linearGradient id="tg209" x1="0" y1="611.0" x2="0" y2="700.0" gradientUnits="userSpaceOnUse"><stop offset="0" stop-color="#426a4a"/><stop offset="0.5" stop-color="#4b7a47"/><stop offset="1" stop-color="#66a03e"/></linearGradient>
<path d="M768.0 608.0 L769.5 613.7 L770.1 613.9 L771.6 617.7 L772.8 622.1 L771.4 622.8 L770.6 624.7 L772.2 626.4 L774.4 630.2 L776.5 631.4 L774.6 635.3 L771.4 637.2 L774.0 638.8 L778.5 642.7 L781.9 644.0 L777.4 647.7 L775.6 649.7 L775.7 651.3 L780.6 655.1 L784.9 656.1 L780.0 660.2 L776.8 662.1 L776.6 663.8 L782.9 667.6 L787.8 671.3 L782.1 672.7 L776.4 674.6 L777.4 676.2 L785.0 680.0 L790.7 680.6 L784.3 685.1 L778.3 687.0 L777.6 688.7 L786.8 692.5 L793.0 692.0 L787.3 697.6 L779.5 699.5 L789.6 740.0 L746.4 740.0 L755.9 699.5 L753.2 697.6 L745.2 692.6 L750.9 692.5 L757.7 688.7 L760.5 687.0 L753.3 685.1 L749.5 680.8 L754.1 680.0 L759.6 676.2 L758.6 674.6 L754.7 672.7 L747.6 671.2 L752.7 667.6 L760.0 663.8 L761.3 662.1 L757.6 660.2 L751.6 657.2 L755.7 655.1 L761.6 651.3 L762.1 649.7 L759.3 647.7 L755.0 642.1 L758.2 642.7 L762.8 638.8 L764.4 637.2 L763.4 635.3 L760.4 632.0 L762.3 630.2 L765.0 626.4 L765.2 624.7 L764.4 622.8 L762.8 618.9 L764.1 617.7 L765.8 613.9 L766.5 613.7Z" fill="url(#tg209)"/>
<linearGradient id="tg211" x1="0" y1="628.0" x2="0" y2="712.0" gradientUnits="userSpaceOnUse"><stop offset="0" stop-color="#426a4a"/><stop offset="0.5" stop-color="#4b7a47"/><stop offset="1" stop-color="#66a03e"/></linearGradient>
<path d="M815.0 625.0 L816.5 630.5 L817.7 630.8 L820.1 634.4 L821.8 636.4 L819.2 639.2 L818.7 641.0 L818.5 642.5 L820.8 646.1 L822.7 647.4 L820.7 650.9 L818.5 652.7 L819.7 654.3 L823.7 657.9 L826.5 661.7 L822.7 662.7 L820.1 664.5 L822.1 666.0 L827.8 669.6 L832.1 673.4 L825.4 674.4 L822.7 676.2 L822.8 677.8 L831.5 681.4 L837.0 683.4 L831.6 686.2 L824.2 688.0 L826.5 689.6 L832.9 693.2 L838.8 693.4 L829.9 698.0 L827.9 699.8 L824.9 701.3 L830.8 704.9 L836.1 705.3 L829.9 709.7 L825.8 711.5 L835.8 752.0 L794.2 752.0 L806.4 711.5 L799.3 709.7 L794.0 707.9 L799.3 704.9 L805.0 701.3 L806.2 699.8 L804.3 698.0 L797.4 692.7 L801.8 693.2 L806.5 689.6 L808.0 688.0 L804.9 686.2 L798.6 683.9 L802.7 681.4 L807.1 677.8 L807.9 676.2 L804.3 674.4 L798.0 669.6 L802.2 669.6 L807.6 666.0 L808.0 664.5 L806.8 662.7 L802.0 660.2 L805.2 657.9 L809.0 654.3 L810.5 652.7 L808.2 650.9 L806.5 646.3 L808.6 646.1 L811.9 642.5 L811.8 641.0 L809.9 639.2 L808.6 637.1 L810.2 634.4 L812.0 630.8 L813.5 630.5Z" fill="url(#tg211)"/>
<linearGradient id="tg213" x1="0" y1="642.0" x2="0" y2="722.0" gradientUnits="userSpaceOnUse"><stop offset="0" stop-color="#426a4a"/><stop offset="0.5" stop-color="#4b7a47"/><stop offset="1" stop-color="#66a03e"/></linearGradient>
<path d="M851.0 639.0 L852.5 644.4 L853.8 645.1 L855.4 649.1 L856.8 653.3 L854.9 654.4 L853.4 656.4 L854.8 658.1 L858.4 662.1 L860.9 665.2 L858.6 667.5 L855.1 669.5 L855.2 671.2 L859.1 675.2 L861.7 675.5 L858.5 680.5 L856.3 682.5 L858.2 684.3 L865.0 688.3 L869.6 690.6 L862.8 693.6 L860.6 695.6 L858.0 697.3 L862.3 701.3 L866.0 704.1 L861.7 706.7 L857.4 708.7 L861.4 710.4 L870.7 714.4 L877.2 716.6 L871.7 719.7 L863.8 721.7 L870.2 762.0 L831.8 762.0 L840.1 721.7 L833.4 719.7 L825.2 715.5 L831.7 714.4 L840.9 710.4 L843.9 708.7 L841.1 706.7 L834.8 702.9 L838.9 701.3 L843.8 697.3 L844.1 695.6 L841.0 693.6 L835.6 691.5 L839.5 688.3 L843.4 684.3 L844.5 682.5 L841.6 680.5 L837.5 676.4 L840.9 675.2 L845.0 671.2 L846.0 669.5 L844.6 667.5 L841.5 666.1 L843.8 662.1 L846.3 658.1 L848.3 656.4 L847.0 654.4 L845.6 648.9 L847.0 649.1 L848.9 645.1 L849.5 644.4Z" fill="url(#tg213)"/>
<linearGradient id="tg215" x1="0" y1="675.0" x2="0" y2="730.0" gradientUnits="userSpaceOnUse"><stop offset="0" stop-color="#426a4a"/><stop offset="0.5" stop-color="#4b7a47"/><stop offset="1" stop-color="#66a03e"/></linearGradient>
<path d="M886.0 672.0 L887.5 676.6 L887.8 677.1 L888.7 679.9 L889.7 681.6 L888.3 683.5 L887.9 684.9 L889.1 686.1 L891.2 688.8 L892.9 692.0 L890.7 692.5 L889.1 693.9 L889.0 695.1 L891.7 697.8 L893.5 700.0 L891.3 701.5 L889.0 702.9 L891.4 704.1 L894.2 706.8 L896.9 708.2 L893.3 710.5 L891.5 711.8 L891.8 713.0 L894.9 715.8 L897.8 715.8 L895.0 719.5 L891.6 720.8 L890.2 722.0 L894.8 724.8 L897.7 726.4 L895.0 728.4 L891.3 729.8 L898.8 770.0 L873.2 770.0 L878.5 729.8 L874.5 728.4 L868.6 725.9 L873.0 724.8 L879.3 722.0 L878.3 720.8 L876.3 719.5 L872.0 718.3 L875.5 715.8 L879.9 713.0 L881.4 711.8 L878.1 710.5 L876.1 707.7 L878.6 706.8 L881.6 704.1 L882.1 702.9 L881.5 701.5 L878.7 698.2 L880.5 697.8 L883.0 695.1 L883.0 693.9 L882.3 692.5 L880.3 689.6 L881.7 688.8 L883.3 686.1 L883.4 684.9 L882.7 683.5 L881.3 682.6 L882.5 679.9 L883.9 677.1 L884.5 676.6Z" fill="url(#tg215)"/>
<linearGradient id="tg217" x1="0" y1="655.0" x2="0" y2="745.0" gradientUnits="userSpaceOnUse"><stop offset="0" stop-color="#426a4a"/><stop offset="0.5" stop-color="#4b7a47"/><stop offset="1" stop-color="#66a03e"/></linearGradient>
<path d="M923.0 652.0 L924.5 657.7 L925.2 658.0 L926.9 661.8 L928.2 663.5 L926.2 667.0 L925.5 668.9 L927.7 670.6 L931.1 674.4 L933.8 676.2 L931.2 679.6 L928.1 681.5 L928.2 683.2 L931.2 687.0 L934.0 690.7 L931.5 692.2 L928.9 694.1 L929.6 695.8 L934.6 699.6 L938.5 703.8 L932.9 704.8 L931.0 706.7 L931.9 708.4 L938.0 712.2 L943.0 716.0 L937.9 717.4 L934.0 719.3 L934.0 721.0 L941.4 724.8 L947.5 727.0 L939.8 730.0 L933.4 731.9 L932.5 733.6 L937.4 737.4 L942.1 739.9 L936.0 742.6 L932.0 744.5 L943.8 785.0 L902.2 785.0 L911.5 744.5 L908.5 742.6 L900.8 740.6 L906.3 737.4 L914.9 733.6 L912.3 731.9 L906.9 730.0 L901.2 725.1 L906.7 724.8 L914.7 721.0 L914.2 719.3 L908.3 717.4 L903.9 713.3 L908.7 712.2 L914.9 708.4 L916.1 706.7 L912.9 704.8 L907.9 700.2 L911.7 699.6 L916.0 695.8 L917.2 694.1 L913.4 692.2 L910.4 686.7 L913.5 687.0 L917.3 683.2 L918.5 681.5 L917.1 679.6 L913.4 675.5 L915.8 674.4 L918.5 670.6 L919.7 668.9 L917.8 667.0 L916.1 662.8 L917.8 661.8 L919.6 658.0 L921.5 657.7Z" fill="url(#tg217)"/>
<linearGradient id="tg219" x1="0" y1="682.0" x2="0" y2="758.0" gradientUnits="userSpaceOnUse"><stop offset="0" stop-color="#426a4a"/><stop offset="0.5" stop-color="#4b7a47"/><stop offset="1" stop-color="#66a03e"/></linearGradient>
<path d="M968.0 679.0 L969.5 684.3 L970.5 684.9 L972.2 688.7 L973.6 691.6 L972.4 693.8 L970.9 695.7 L972.2 697.3 L975.5 701.1 L977.9 701.3 L975.4 706.2 L972.9 708.1 L972.2 709.7 L975.5 713.5 L978.0 713.1 L975.2 718.6 L972.6 720.5 L974.0 722.2 L980.0 726.0 L984.1 728.7 L980.1 731.0 L975.6 732.9 L976.6 734.6 L981.0 738.4 L985.3 740.2 L980.0 743.4 L975.1 745.3 L977.3 747.0 L984.5 750.8 L990.0 753.8 L985.3 755.8 L978.9 757.7 L986.4 798.0 L949.6 798.0 L954.5 757.7 L949.3 755.8 L942.3 750.4 L948.7 750.8 L956.0 747.0 L957.7 745.3 L953.7 743.4 L948.3 742.5 L953.2 738.4 L958.6 734.6 L960.7 732.9 L956.6 731.0 L951.7 728.0 L955.8 726.0 L960.8 722.2 L962.0 720.5 L958.3 718.6 L954.0 716.5 L957.5 713.5 L962.2 709.7 L964.6 708.1 L961.9 706.2 L959.5 700.7 L961.6 701.1 L964.5 697.3 L965.1 695.7 L963.5 693.8 L962.3 691.1 L963.7 688.7 L965.3 684.9 L966.5 684.3Z" fill="url(#tg219)"/>
<linearGradient id="tg221" x1="0" y1="712.0" x2="0" y2="768.0" gradientUnits="userSpaceOnUse"><stop offset="0" stop-color="#426a4a"/><stop offset="0.5" stop-color="#4b7a47"/><stop offset="1" stop-color="#66a03e"/></linearGradient>
<path d="M999.0 709.0 L1000.5 713.7 L1000.8 714.1 L1002.1 716.9 L1003.2 718.0 L1001.9 720.7 L1001.2 722.1 L1001.0 723.3 L1002.9 726.1 L1004.2 727.1 L1002.3 729.8 L1001.6 731.2 L1002.8 732.4 L1004.9 735.2 L1006.9 737.5 L1005.1 739.0 L1003.3 740.4 L1002.7 741.6 L1006.2 744.4 L1008.6 747.5 L1005.3 748.1 L1003.2 749.5 L1005.4 750.7 L1008.6 753.5 L1011.8 755.7 L1008.5 757.3 L1004.8 758.7 L1004.3 759.9 L1009.3 762.7 L1012.7 762.8 L1009.9 766.4 L1004.9 767.8 L1011.8 808.0 L986.2 808.0 L993.3 767.8 L991.6 766.4 L986.7 764.0 L989.8 762.7 L994.4 759.9 L993.2 758.7 L990.5 757.3 L985.0 755.3 L988.5 753.5 L992.4 750.7 L994.1 749.5 L991.1 748.1 L987.1 747.3 L990.0 744.4 L994.2 741.6 L995.4 740.4 L993.8 739.0 L991.5 734.8 L993.4 735.2 L996.0 732.4 L996.1 731.2 L993.8 729.8 L992.2 727.8 L993.9 726.1 L996.1 723.3 L997.2 722.1 L996.1 720.7 L994.8 717.6 L995.8 716.9 L997.1 714.1 L997.5 713.7Z" fill="url(#tg221)"/>
<linearGradient id="tg223" x1="0" y1="729.0" x2="0" y2="775.0" gradientUnits="userSpaceOnUse"><stop offset="0" stop-color="#426a4a"/><stop offset="0.5" stop-color="#4b7a47"/><stop offset="1" stop-color="#66a03e"/></linearGradient>
<path d="M1019.0 726.0 L1020.5 730.4 L1020.1 730.8 L1020.9 733.1 L1021.6 732.8 L1020.6 736.1 L1020.3 737.3 L1021.0 738.3 L1022.9 740.6 L1024.2 742.9 L1022.6 743.6 L1021.1 744.8 L1021.4 745.8 L1022.9 748.1 L1024.2 748.8 L1022.8 751.2 L1021.4 752.3 L1021.5 753.3 L1024.2 755.6 L1026.0 757.3 L1024.2 758.7 L1021.8 759.8 L1023.9 760.8 L1026.4 763.1 L1028.9 764.0 L1026.1 766.2 L1023.7 767.3 L1025.1 768.3 L1028.2 770.6 L1031.3 772.0 L1027.4 773.7 L1025.6 774.8 L1027.8 815.0 L1010.2 815.0 L1013.8 774.8 L1011.5 773.7 L1009.0 770.5 L1011.5 770.6 L1014.7 768.3 L1013.4 767.3 L1012.7 766.2 L1008.5 765.0 L1011.2 763.1 L1014.9 760.8 L1015.3 759.8 L1013.0 758.7 L1010.4 757.5 L1012.5 755.6 L1014.7 753.3 L1016.1 752.3 L1014.9 751.2 L1012.7 748.5 L1014.3 748.1 L1015.9 745.8 L1017.0 744.8 L1016.4 743.6 L1015.1 741.5 L1016.0 740.6 L1017.2 738.3 L1017.7 737.3 L1017.0 736.1 L1016.4 734.1 L1017.0 733.1 L1018.0 730.8 L1017.5 730.4Z" fill="url(#tg223)"/>
<linearGradient id="tg225" x1="0" y1="713.0" x2="0" y2="770.0" gradientUnits="userSpaceOnUse"><stop offset="0" stop-color="#426a4a"/><stop offset="0.5" stop-color="#4b7a47"/><stop offset="1" stop-color="#66a03e"/></linearGradient>
<path d="M1006.0 710.0 L1007.5 714.7 L1007.1 715.2 L1007.8 718.0 L1008.4 720.5 L1007.9 721.8 L1007.2 723.3 L1007.8 724.5 L1008.9 727.3 L1009.9 728.0 L1009.0 731.1 L1007.8 732.6 L1007.9 733.8 L1009.2 736.7 L1010.2 738.2 L1009.1 740.5 L1007.7 741.9 L1009.1 743.1 L1010.9 746.0 L1012.5 745.9 L1011.0 749.8 L1009.4 751.2 L1010.0 752.4 L1012.0 755.3 L1014.0 755.1 L1012.3 759.1 L1009.7 760.5 L1009.2 761.7 L1012.0 764.6 L1014.0 765.3 L1011.7 768.4 L1009.7 769.8 L1014.0 810.0 L998.0 810.0 L1000.4 769.8 L999.0 768.4 L994.9 767.8 L997.7 764.6 L1001.2 761.7 L1001.3 760.5 L998.5 759.1 L996.5 756.5 L998.8 755.3 L1002.5 752.4 L1002.6 751.2 L1001.0 749.8 L998.4 747.3 L1000.3 746.0 L1002.7 743.1 L1003.6 741.9 L1002.3 740.5 L1001.4 736.8 L1002.5 736.7 L1004.0 733.8 L1004.0 732.6 L1002.7 731.1 L1001.8 729.7 L1002.9 727.3 L1004.5 724.5 L1004.8 723.3 L1004.4 721.8 L1003.6 720.7 L1004.2 718.0 L1004.9 715.2 L1004.5 714.7Z" fill="url(#tg225)"/>
<linearGradient id="tg227" x1="0" y1="700.0" x2="0" y2="760.0" gradientUnits="userSpaceOnUse"><stop offset="0" stop-color="#426a4a"/><stop offset="0.5" stop-color="#4b7a47"/><stop offset="1" stop-color="#66a03e"/></linearGradient>
<path d="M1024.0 697.0 L1025.5 701.8 L1024.9 702.3 L1025.6 705.3 L1026.2 708.7 L1025.5 709.3 L1025.0 710.8 L1025.3 712.1 L1026.1 715.1 L1026.8 717.2 L1026.0 719.1 L1025.3 720.6 L1026.0 721.9 L1027.3 724.9 L1028.3 725.6 L1027.1 728.9 L1026.2 730.4 L1026.0 731.7 L1028.3 734.7 L1029.7 735.1 L1027.5 738.7 L1026.7 740.2 L1026.1 741.5 L1027.8 744.5 L1029.1 746.9 L1027.3 748.5 L1026.6 750.0 L1026.6 751.3 L1028.5 754.3 L1030.0 754.5 L1027.6 758.3 L1026.6 759.8 L1030.4 800.0 L1017.6 800.0 L1019.4 759.8 L1017.0 758.3 L1015.1 754.9 L1017.3 754.3 L1020.0 751.3 L1021.0 750.0 L1018.2 748.5 L1016.7 744.1 L1018.5 744.5 L1020.5 741.5 L1021.4 740.2 L1020.0 738.7 L1019.0 735.9 L1020.3 734.7 L1021.6 731.7 L1021.6 730.4 L1020.8 728.9 L1019.6 727.3 L1020.7 724.9 L1022.0 721.9 L1022.4 720.6 L1021.1 719.1 L1020.3 717.0 L1021.2 715.1 L1022.5 712.1 L1023.3 710.8 L1022.8 709.3 L1022.3 708.1 L1022.8 705.3 L1023.3 702.3 L1022.5 701.8Z" fill="url(#tg227)"/>
<linearGradient id="hl" x1="760" y1="682" x2="718" y2="837" gradientUnits="userSpaceOnUse"><stop offset="0" stop-color="#a4cc42"/><stop offset="0.06" stop-color="#c4e452"/><stop offset="0.2" stop-color="#dbf264"/><stop offset="0.45" stop-color="#c8e656"/><stop offset="0.75" stop-color="#b4da4a"/><stop offset="1" stop-color="#a6d042"/></linearGradient>
<path d="M371 580 L556 628 Q800 688 960 746 Q1060 782 1100 803 Q1150 816 1213 820 L371 820Z" fill="url(#hl)"/>
<path d="M685 696 Q800 720 900 752 Q960 772 1000 790 Q1040 805 1070 819 L1030 819 Q980 795 930 778 Q820 740 685 696Z" fill="#b2d448" opacity="0.7"/>
<path d="M620 688 Q700 700 760 725 Q700 712 620 688Z" fill="#b8d84c" opacity="0.6"/>
<ellipse cx="587.3" cy="725.4" rx="1.6" ry="1.4" fill="#f3f77a" opacity="0.40"/>
<ellipse cx="593.5" cy="647.1" rx="2.2" ry="1.7" fill="#f3f77a" opacity="0.94"/>
<ellipse cx="621.7" cy="672.0" rx="2.6" ry="1.9" fill="#f3f77a" opacity="0.82"/>
<ellipse cx="718.3" cy="783.4" rx="1.8" ry="1.5" fill="#f3f77a" opacity="0.24"/>
<ellipse cx="588.2" cy="668.7" rx="2.7" ry="1.4" fill="#f3f77a" opacity="0.78"/>
<ellipse cx="721.3" cy="740.1" rx="2.3" ry="1.3" fill="#f3f77a" opacity="0.53"/>
<ellipse cx="972.5" cy="761.4" rx="1.9" ry="1.5" fill="#f3f77a" opacity="0.88"/>
<ellipse cx="831.7" cy="794.5" rx="2.7" ry="1.3" fill="#f3f77a" opacity="0.36"/>
<ellipse cx="775.7" cy="772.3" rx="1.8" ry="1.4" fill="#f3f77a" opacity="0.41"/>
<ellipse cx="577.5" cy="755.6" rx="2.8" ry="1.5" fill="#f3f77a" opacity="0.19"/>
<ellipse cx="920.6" cy="741.7" rx="2.5" ry="1.4" fill="#f3f77a" opacity="0.88"/>
<ellipse cx="996.3" cy="807.6" rx="2.3" ry="1.6" fill="#f3f77a" opacity="0.63"/>
<ellipse cx="588.7" cy="761.9" rx="2.6" ry="1.9" fill="#f3f77a" opacity="0.16"/>
<ellipse cx="758.8" cy="755.7" rx="1.5" ry="1.4" fill="#f3f77a" opacity="0.49"/>
<ellipse cx="587.8" cy="774.4" rx="1.7" ry="1.2" fill="#f3f77a" opacity="0.15"/>
<ellipse cx="761.5" cy="793.8" rx="1.6" ry="1.4" fill="#f3f77a" opacity="0.24"/>
<ellipse cx="844.4" cy="796.1" rx="2.9" ry="1.8" fill="#f3f77a" opacity="0.37"/>
<ellipse cx="702.6" cy="708.1" rx="2.1" ry="1.8" fill="#f3f77a" opacity="0.72"/>
<ellipse cx="649.2" cy="673.6" rx="1.9" ry="1.4" fill="#f3f77a" opacity="0.85"/>
<ellipse cx="559.1" cy="708.8" rx="2.1" ry="1.5" fill="#f3f77a" opacity="0.47"/>
<ellipse cx="826.6" cy="746.1" rx="2.6" ry="1.0" fill="#f3f77a" opacity="0.67"/>
<ellipse cx="1027.5" cy="776.6" rx="3.0" ry="1.7" fill="#f3f77a" opacity="0.91"/>
<ellipse cx="762.2" cy="705.0" rx="1.7" ry="1.6" fill="#f3f77a" opacity="0.84"/>
<ellipse cx="589.6" cy="642.7" rx="1.9" ry="1.1" fill="#f3f77a" opacity="0.96"/>
<ellipse cx="557.1" cy="658.4" rx="1.7" ry="1.3" fill="#f3f77a" opacity="0.80"/>
<ellipse cx="570.3" cy="794.4" rx="2.5" ry="1.1" fill="#f3f77a" opacity="0.15"/>
<ellipse cx="688.9" cy="695.3" rx="2.1" ry="1.1" fill="#f3f77a" opacity="0.78"/>
<ellipse cx="1001.0" cy="816.7" rx="2.3" ry="1.4" fill="#f3f77a" opacity="0.58"/>
<ellipse cx="601.9" cy="649.2" rx="2.1" ry="1.2" fill="#f3f77a" opacity="0.94"/>
<ellipse cx="569.1" cy="808.8" rx="2.4" ry="1.1" fill="#f3f77a" opacity="0.15"/>
<ellipse cx="833.2" cy="814.0" rx="3.0" ry="1.6" fill="#f3f77a" opacity="0.23"/>
<ellipse cx="693.6" cy="698.9" rx="1.8" ry="1.7" fill="#f3f77a" opacity="0.76"/>
<ellipse cx="835.5" cy="776.5" rx="2.1" ry="1.2" fill="#f3f77a" opacity="0.49"/>
<ellipse cx="981.4" cy="815.2" rx="2.9" ry="1.7" fill="#f3f77a" opacity="0.54"/>
<ellipse cx="985.0" cy="769.1" rx="1.9" ry="1.5" fill="#f3f77a" opacity="0.86"/>
<ellipse cx="571.6" cy="682.5" rx="1.9" ry="1.6" fill="#f3f77a" opacity="0.66"/>
<ellipse cx="1047.1" cy="815.8" rx="3.1" ry="1.3" fill="#f3f77a" opacity="0.70"/>
<ellipse cx="672.3" cy="672.6" rx="1.8" ry="1.2" fill="#f3f77a" opacity="0.90"/>
<ellipse cx="883.4" cy="799.3" rx="2.9" ry="1.4" fill="#f3f77a" opacity="0.41"/>
<ellipse cx="898.5" cy="780.3" rx="1.6" ry="1.6" fill="#f3f77a" opacity="0.57"/>
<ellipse cx="1032.8" cy="777.1" rx="2.8" ry="1.4" fill="#f3f77a" opacity="0.92"/>
<ellipse cx="650.4" cy="778.4" rx="2.1" ry="1.7" fill="#f3f77a" opacity="0.16"/>
<ellipse cx="766.9" cy="808.0" rx="2.7" ry="1.2" fill="#f3f77a" opacity="0.16"/>
<ellipse cx="623.4" cy="658.4" rx="3.0" ry="1.7" fill="#f3f77a" opacity="0.91"/>
<ellipse cx="633.4" cy="785.4" rx="3.2" ry="1.6" fill="#f3f77a" opacity="0.15"/>
<ellipse cx="740.3" cy="733.1" rx="1.7" ry="1.0" fill="#f3f77a" opacity="0.61"/>
<ellipse cx="832.4" cy="805.5" rx="2.2" ry="1.8" fill="#f3f77a" opacity="0.29"/>
<ellipse cx="688.7" cy="685.1" rx="1.9" ry="1.5" fill="#f3f77a" opacity="0.85"/>
<ellipse cx="692.6" cy="708.8" rx="1.7" ry="1.8" fill="#f3f77a" opacity="0.69"/>
<ellipse cx="742.0" cy="716.1" rx="2.5" ry="1.8" fill="#f3f77a" opacity="0.73"/>
<ellipse cx="777.0" cy="802.5" rx="2.4" ry="1.5" fill="#f3f77a" opacity="0.21"/>
<ellipse cx="559.1" cy="780.2" rx="1.8" ry="1.4" fill="#f3f77a" opacity="0.15"/>
<ellipse cx="727.5" cy="727.4" rx="2.4" ry="1.7" fill="#f3f77a" opacity="0.63"/>
<ellipse cx="612.5" cy="735.3" rx="1.9" ry="1.2" fill="#f3f77a" opacity="0.38"/>
<ellipse cx="850.8" cy="772.9" rx="3.1" ry="1.4" fill="#f3f77a" opacity="0.54"/>
<ellipse cx="877.4" cy="725.0" rx="2.4" ry="1.6" fill="#f3f77a" opacity="0.90"/>
<ellipse cx="793.6" cy="730.3" rx="2.3" ry="1.8" fill="#f3f77a" opacity="0.72"/>
<ellipse cx="922.7" cy="794.8" rx="3.1" ry="1.2" fill="#f3f77a" opacity="0.53"/>
<ellipse cx="849.6" cy="807.3" rx="2.9" ry="1.1" fill="#f3f77a" opacity="0.30"/>
<ellipse cx="620.6" cy="713.1" rx="1.6" ry="1.2" fill="#f3f77a" opacity="0.54"/>
<ellipse cx="595.2" cy="755.9" rx="2.8" ry="1.8" fill="#f3f77a" opacity="0.21"/>
<ellipse cx="637.8" cy="764.6" rx="2.6" ry="1.1" fill="#f3f77a" opacity="0.23"/>
<ellipse cx="1018.7" cy="811.9" rx="1.9" ry="1.9" fill="#f3f77a" opacity="0.66"/>
<ellipse cx="765.3" cy="721.6" rx="3.2" ry="1.7" fill="#f3f77a" opacity="0.73"/>
<ellipse cx="641.4" cy="711.1" rx="2.4" ry="1.3" fill="#f3f77a" opacity="0.59"/>
<ellipse cx="659.4" cy="689.9" rx="2.7" ry="1.0" fill="#f3f77a" opacity="0.76"/>
<ellipse cx="846.8" cy="712.8" rx="1.5" ry="1.3" fill="#f3f77a" opacity="0.93"/>
<ellipse cx="883.3" cy="726.3" rx="1.6" ry="1.9" fill="#f3f77a" opacity="0.90"/>
<ellipse cx="969.3" cy="812.7" rx="1.7" ry="1.2" fill="#f3f77a" opacity="0.53"/>
<ellipse cx="577.7" cy="776.5" rx="2.0" ry="1.1" fill="#f3f77a" opacity="0.15"/>
<ellipse cx="777.8" cy="801.3" rx="2.9" ry="1.2" fill="#f3f77a" opacity="0.22"/>
<ellipse cx="635.1" cy="802.8" rx="2.5" ry="1.6" fill="#f3f77a" opacity="0.15"/>
<ellipse cx="594.9" cy="806.4" rx="2.6" ry="1.7" fill="#f3f77a" opacity="0.15"/>
<ellipse cx="600.8" cy="791.0" rx="1.6" ry="1.8" fill="#f3f77a" opacity="0.15"/>
<ellipse cx="846.3" cy="804.2" rx="2.0" ry="1.1" fill="#f3f77a" opacity="0.32"/>
<ellipse cx="614.2" cy="660.4" rx="1.6" ry="1.2" fill="#f3f77a" opacity="0.88"/>
<ellipse cx="720.2" cy="687.3" rx="2.8" ry="1.3" fill="#f3f77a" opacity="0.88"/>
<ellipse cx="656.1" cy="719.3" rx="3.1" ry="1.1" fill="#f3f77a" opacity="0.56"/>
<ellipse cx="815.9" cy="786.9" rx="2.2" ry="1.5" fill="#f3f77a" opacity="0.38"/>
<ellipse cx="916.7" cy="814.7" rx="2.1" ry="1.7" fill="#f3f77a" opacity="0.38"/>
<ellipse cx="926.6" cy="749.6" rx="2.2" ry="1.3" fill="#f3f77a" opacity="0.84"/>
<ellipse cx="585.4" cy="654.4" rx="1.6" ry="1.7" fill="#f3f77a" opacity="0.87"/>
<ellipse cx="601.2" cy="788.2" rx="3.0" ry="1.6" fill="#f3f77a" opacity="0.15"/>
<ellipse cx="704.5" cy="675.5" rx="2.0" ry="1.4" fill="#f3f77a" opacity="0.94"/>
<ellipse cx="639.4" cy="713.8" rx="1.9" ry="1.9" fill="#f3f77a" opacity="0.57"/>
<ellipse cx="684.8" cy="811.5" rx="2.0" ry="1.3" fill="#f3f77a" opacity="0.15"/>
<ellipse cx="557.6" cy="701.7" rx="2.3" ry="1.5" fill="#f3f77a" opacity="0.51"/>
<ellipse cx="662.1" cy="724.9" rx="1.5" ry="1.2" fill="#f3f77a" opacity="0.53"/>
<ellipse cx="603.9" cy="705.1" rx="1.6" ry="1.0" fill="#f3f77a" opacity="0.57"/>
<ellipse cx="863.3" cy="729.5" rx="2.8" ry="1.6" fill="#f3f77a" opacity="0.85"/>
<ellipse cx="931.5" cy="795.3" rx="2.2" ry="1.3" fill="#f3f77a" opacity="0.55"/>
<ellipse cx="935.7" cy="750.9" rx="1.6" ry="1.8" fill="#f3f77a" opacity="0.85"/>
<ellipse cx="940.8" cy="782.7" rx="1.7" ry="1.5" fill="#f3f77a" opacity="0.66"/>
<ellipse cx="820.8" cy="787.0" rx="2.9" ry="1.7" fill="#f3f77a" opacity="0.39"/>
<ellipse cx="862.5" cy="797.9" rx="2.7" ry="1.6" fill="#f3f77a" opacity="0.39"/>
<ellipse cx="626.6" cy="697.8" rx="1.7" ry="1.8" fill="#f3f77a" opacity="0.65"/>
<ellipse cx="849.1" cy="748.0" rx="2.6" ry="1.6" fill="#f3f77a" opacity="0.70"/>
<ellipse cx="974.2" cy="770.7" rx="2.4" ry="1.5" fill="#f3f77a" opacity="0.82"/>
<ellipse cx="595.9" cy="679.9" rx="2.7" ry="1.2" fill="#f3f77a" opacity="0.72"/>
<ellipse cx="943.9" cy="813.4" rx="2.3" ry="1.3" fill="#f3f77a" opacity="0.46"/>
<ellipse cx="807.5" cy="758.5" rx="2.8" ry="1.6" fill="#f3f77a" opacity="0.56"/>
<ellipse cx="634.1" cy="677.7" rx="2.8" ry="1.3" fill="#f3f77a" opacity="0.80"/>
<ellipse cx="588.7" cy="680.5" rx="2.6" ry="1.6" fill="#f3f77a" opacity="0.71"/>
<ellipse cx="827.1" cy="717.4" rx="2.3" ry="1.1" fill="#f3f77a" opacity="0.87"/>
<ellipse cx="1068.6" cy="806.0" rx="1.5" ry="1.4" fill="#f3f77a" opacity="0.82"/>
<ellipse cx="985.8" cy="812.0" rx="2.3" ry="1.2" fill="#f3f77a" opacity="0.57"/>
<ellipse cx="666.7" cy="807.8" rx="1.9" ry="1.5" fill="#f3f77a" opacity="0.15"/>
<ellipse cx="631.1" cy="728.5" rx="3.1" ry="1.1" fill="#f3f77a" opacity="0.46"/>
<ellipse cx="678.0" cy="798.8" rx="2.3" ry="1.0" fill="#f3f77a" opacity="0.15"/>
<ellipse cx="558.9" cy="722.4" rx="2.3" ry="1.3" fill="#f3f77a" opacity="0.38"/>
<ellipse cx="630.6" cy="694.7" rx="2.0" ry="1.8" fill="#f3f77a" opacity="0.68"/>
<ellipse cx="557.9" cy="771.1" rx="2.9" ry="1.1" fill="#f3f77a" opacity="0.15"/>
<ellipse cx="751.7" cy="703.9" rx="3.2" ry="1.5" fill="#f3f77a" opacity="0.83"/>
<ellipse cx="745.7" cy="710.5" rx="2.0" ry="1.0" fill="#f3f77a" opacity="0.77"/>
<ellipse cx="610.2" cy="786.9" rx="2.0" ry="1.8" fill="#f3f77a" opacity="0.15"/>
<ellipse cx="687.4" cy="680.0" rx="2.4" ry="1.2" fill="#f3f77a" opacity="0.88"/>
<ellipse cx="752.3" cy="809.8" rx="3.0" ry="1.7" fill="#f3f77a" opacity="0.15"/>
<ellipse cx="887.0" cy="801.7" rx="3.1" ry="1.5" fill="#f3f77a" opacity="0.40"/>
<ellipse cx="950.6" cy="751.2" rx="2.0" ry="1.0" fill="#f3f77a" opacity="0.89"/>
<ellipse cx="712.7" cy="768.9" rx="3.2" ry="1.2" fill="#f3f77a" opacity="0.33"/>
<ellipse cx="644.5" cy="660.4" rx="1.9" ry="1.8" fill="#f3f77a" opacity="0.93"/>
<ellipse cx="1031.0" cy="817.3" rx="2.3" ry="1.1" fill="#f3f77a" opacity="0.65"/>
<ellipse cx="682.1" cy="678.6" rx="2.5" ry="1.8" fill="#f3f77a" opacity="0.88"/>
<ellipse cx="773.5" cy="728.5" rx="2.1" ry="1.3" fill="#f3f77a" opacity="0.70"/>
<ellipse cx="589.5" cy="682.2" rx="3.1" ry="1.1" fill="#f3f77a" opacity="0.70"/>
<ellipse cx="820.3" cy="748.4" rx="3.0" ry="1.2" fill="#f3f77a" opacity="0.65"/>
<ellipse cx="698.7" cy="676.7" rx="2.2" ry="1.4" fill="#f3f77a" opacity="0.92"/>
<ellipse cx="1055.9" cy="789.6" rx="3.0" ry="1.0" fill="#f3f77a" opacity="0.90"/>
<ellipse cx="573.9" cy="763.4" rx="3.0" ry="1.4" fill="#f3f77a" opacity="0.15"/>
<ellipse cx="761.8" cy="804.2" rx="2.9" ry="1.8" fill="#f3f77a" opacity="0.17"/>
<ellipse cx="614.0" cy="659.0" rx="2.4" ry="1.6" fill="#f3f77a" opacity="0.89"/>
<ellipse cx="895.6" cy="773.8" rx="2.3" ry="1.5" fill="#f3f77a" opacity="0.61"/>
<ellipse cx="577.7" cy="777.1" rx="1.9" ry="1.8" fill="#f3f77a" opacity="0.15"/>
<ellipse cx="623.9" cy="677.3" rx="2.6" ry="1.6" fill="#f3f77a" opacity="0.79"/>
<ellipse cx="831.3" cy="739.6" rx="2.2" ry="1.2" fill="#f3f77a" opacity="0.72"/>
<ellipse cx="714.7" cy="716.6" rx="3.1" ry="1.6" fill="#f3f77a" opacity="0.68"/>
<ellipse cx="679.8" cy="676.4" rx="3.1" ry="1.6" fill="#f3f77a" opacity="0.89"/>
<ellipse cx="817.6" cy="756.8" rx="2.2" ry="1.2" fill="#f3f77a" opacity="0.59"/>
<ellipse cx="906.0" cy="803.9" rx="1.9" ry="1.0" fill="#f3f77a" opacity="0.43"/>
<ellipse cx="733.8" cy="709.1" rx="2.7" ry="1.2" fill="#f3f77a" opacity="0.76"/>
<ellipse cx="973.9" cy="769.0" rx="2.4" ry="1.2" fill="#f3f77a" opacity="0.83"/>
<ellipse cx="672.8" cy="773.0" rx="2.0" ry="1.9" fill="#f3f77a" opacity="0.23"/>
<ellipse cx="673.8" cy="708.4" rx="2.6" ry="1.9" fill="#f3f77a" opacity="0.66"/>
<ellipse cx="633.6" cy="704.0" rx="1.9" ry="1.9" fill="#f3f77a" opacity="0.63"/>
<ellipse cx="588.5" cy="703.9" rx="3.0" ry="1.8" fill="#f3f77a" opacity="0.55"/>
<ellipse cx="940.2" cy="817.5" rx="3.1" ry="1.3" fill="#f3f77a" opacity="0.42"/>
<ellipse cx="654.0" cy="805.9" rx="2.8" ry="1.0" fill="#f3f77a" opacity="0.15"/>
<ellipse cx="752.5" cy="692.4" rx="1.8" ry="1.0" fill="#f3f77a" opacity="0.91"/>
<ellipse cx="703.3" cy="696.1" rx="3.1" ry="1.1" fill="#f3f77a" opacity="0.80"/>
<ellipse cx="743.5" cy="784.5" rx="2.9" ry="1.4" fill="#f3f77a" opacity="0.28"/>
<ellipse cx="582.8" cy="719.0" rx="2.1" ry="1.8" fill="#f3f77a" opacity="0.44"/>
<ellipse cx="658.0" cy="698.5" rx="3.0" ry="1.0" fill="#f3f77a" opacity="0.70"/>
<ellipse cx="771.8" cy="782.6" rx="2.8" ry="1.0" fill="#f3f77a" opacity="0.34"/>
<ellipse cx="575.2" cy="641.8" rx="3.1" ry="1.2" fill="#f3f77a" opacity="0.94"/>
<ellipse cx="947.8" cy="798.9" rx="2.1" ry="1.2" fill="#f3f77a" opacity="0.56"/>
<ellipse cx="694.1" cy="764.7" rx="2.0" ry="1.2" fill="#f3f77a" opacity="0.32"/>
<ellipse cx="559.0" cy="772.1" rx="3.1" ry="1.6" fill="#f3f77a" opacity="0.15"/>
<ellipse cx="679.3" cy="719.3" rx="3.1" ry="1.9" fill="#f3f77a" opacity="0.60"/>
<ellipse cx="781.9" cy="722.8" rx="3.1" ry="1.2" fill="#f3f77a" opacity="0.75"/>
<ellipse cx="976.7" cy="768.8" rx="2.9" ry="1.7" fill="#f3f77a" opacity="0.84"/>
<ellipse cx="724.1" cy="698.0" rx="2.8" ry="1.1" fill="#f3f77a" opacity="0.82"/>
<ellipse cx="660.2" cy="771.5" rx="1.9" ry="1.1" fill="#f3f77a" opacity="0.22"/>
<ellipse cx="574.7" cy="733.9" rx="2.1" ry="1.9" fill="#f3f77a" opacity="0.33"/>
<ellipse cx="1019.1" cy="815.7" rx="2.0" ry="1.1" fill="#f3f77a" opacity="0.63"/>
<ellipse cx="607.4" cy="723.7" rx="2.7" ry="1.4" fill="#f3f77a" opacity="0.45"/>
<ellipse cx="679.5" cy="708.4" rx="2.6" ry="1.6" fill="#f3f77a" opacity="0.67"/>
<ellipse cx="948.2" cy="789.2" rx="2.6" ry="1.1" fill="#f3f77a" opacity="0.63"/>
<ellipse cx="686.4" cy="676.1" rx="1.8" ry="1.8" fill="#f3f77a" opacity="0.90"/>
<ellipse cx="764.1" cy="816.6" rx="2.4" ry="1.2" fill="#f3f77a" opacity="0.15"/>
<ellipse cx="979.8" cy="752.8" rx="3.2" ry="1.1" fill="#f3f77a" opacity="0.95"/>
<ellipse cx="805.3" cy="784.0" rx="2.9" ry="1.8" fill="#f3f77a" opacity="0.38"/>
<ellipse cx="578.1" cy="685.2" rx="1.7" ry="1.2" fill="#f3f77a" opacity="0.66"/>
<linearGradient id="fgg" x1="700" y1="700" x2="640" y2="819" gradientUnits="userSpaceOnUse"><stop offset="0" stop-color="#a8d244" stop-opacity="0.6"/><stop offset="0.4" stop-color="#9ccb3c"/><stop offset="1" stop-color="#90c236"/></linearGradient>
<path d="M371 690 L557 692 Q630 712 700 745 Q780 790 880 819 L371 819Z" fill="url(#fgg)"/>
<ellipse cx="508.5" cy="790.0" rx="3.1" ry="1.1" fill="#e6f070" opacity="0.85"/>
<ellipse cx="686.4" cy="770.1" rx="1.9" ry="1.3" fill="#e6f070" opacity="0.85"/>
<ellipse cx="445.8" cy="717.7" rx="1.9" ry="1.5" fill="#e6f070" opacity="0.85"/>
<ellipse cx="377.0" cy="733.2" rx="2.7" ry="1.2" fill="#e6f070" opacity="0.85"/>
<ellipse cx="536.2" cy="717.6" rx="2.9" ry="1.5" fill="#e6f070" opacity="0.85"/>
<ellipse cx="404.5" cy="704.8" rx="2.2" ry="1.5" fill="#e6f070" opacity="0.85"/>
<ellipse cx="457.6" cy="779.6" rx="2.2" ry="1.3" fill="#e6f070" opacity="0.85"/>
<ellipse cx="533.7" cy="812.1" rx="2.0" ry="1.5" fill="#e6f070" opacity="0.85"/>
<ellipse cx="559.9" cy="744.5" rx="3.0" ry="1.9" fill="#e6f070" opacity="0.85"/>
<ellipse cx="563.4" cy="716.8" rx="2.7" ry="1.2" fill="#e6f070" opacity="0.85"/>
<ellipse cx="374.1" cy="805.6" rx="2.2" ry="1.7" fill="#e6f070" opacity="0.85"/>
<ellipse cx="585.9" cy="803.2" rx="2.3" ry="1.1" fill="#e6f070" opacity="0.85"/>
<ellipse cx="378.8" cy="761.5" rx="2.6" ry="1.8" fill="#e6f070" opacity="0.85"/>
<ellipse cx="418.1" cy="770.4" rx="2.1" ry="1.5" fill="#e6f070" opacity="0.85"/>
<ellipse cx="448.2" cy="727.7" rx="2.4" ry="1.8" fill="#e6f070" opacity="0.85"/>
<ellipse cx="428.6" cy="753.8" rx="2.9" ry="1.9" fill="#e6f070" opacity="0.85"/>
<ellipse cx="475.4" cy="708.0" rx="3.1" ry="1.9" fill="#e6f070" opacity="0.85"/>
<ellipse cx="585.0" cy="798.6" rx="2.9" ry="1.2" fill="#e6f070" opacity="0.85"/>
<ellipse cx="486.4" cy="742.4" rx="2.4" ry="1.3" fill="#e6f070" opacity="0.85"/>
<ellipse cx="436.1" cy="723.1" rx="2.7" ry="1.8" fill="#e6f070" opacity="0.85"/>
<ellipse cx="392.7" cy="762.9" rx="2.8" ry="1.0" fill="#e6f070" opacity="0.85"/>
<ellipse cx="688.1" cy="761.3" rx="2.6" ry="1.3" fill="#e6f070" opacity="0.85"/>
<ellipse cx="593.2" cy="765.4" rx="2.2" ry="1.6" fill="#e6f070" opacity="0.85"/>
<ellipse cx="607.4" cy="747.2" rx="1.5" ry="1.6" fill="#e6f070" opacity="0.85"/>
<ellipse cx="629.9" cy="721.6" rx="2.8" ry="1.7" fill="#e6f070" opacity="0.85"/>
<ellipse cx="613.4" cy="714.6" rx="2.3" ry="1.1" fill="#e6f070" opacity="0.85"/>
<ellipse cx="439.0" cy="746.3" rx="1.7" ry="1.4" fill="#e6f070" opacity="0.85"/>
<ellipse cx="759.0" cy="790.0" rx="2.4" ry="1.0" fill="#e6f070" opacity="0.85"/>
<ellipse cx="637.6" cy="739.6" rx="3.1" ry="1.1" fill="#e6f070" opacity="0.85"/>
<ellipse cx="824.4" cy="817.5" rx="2.7" ry="1.7" fill="#e6f070" opacity="0.85"/>
<ellipse cx="473.5" cy="815.7" rx="2.3" ry="1.9" fill="#e6f070" opacity="0.85"/>
<ellipse cx="788.1" cy="809.3" rx="1.6" ry="1.3" fill="#e6f070" opacity="0.85"/>
<ellipse cx="636.7" cy="807.9" rx="1.9" ry="1.2" fill="#e6f070" opacity="0.85"/>
<ellipse cx="638.7" cy="732.2" rx="1.6" ry="1.2" fill="#e6f070" opacity="0.85"/>
<ellipse cx="456.3" cy="810.0" rx="2.7" ry="1.8" fill="#e6f070" opacity="0.85"/>
<ellipse cx="460.3" cy="790.9" rx="1.7" ry="1.5" fill="#e6f070" opacity="0.85"/>
<ellipse cx="707.6" cy="737.3" rx="3.0" ry="1.5" fill="#e6f070" opacity="0.85"/>
<ellipse cx="677.8" cy="803.2" rx="1.7" ry="1.9" fill="#e6f070" opacity="0.85"/>
<ellipse cx="704.2" cy="741.7" rx="2.9" ry="1.2" fill="#e6f070" opacity="0.85"/>
<ellipse cx="561.6" cy="788.3" rx="2.3" ry="1.2" fill="#e6f070" opacity="0.85"/>
<ellipse cx="709.2" cy="816.0" rx="2.5" ry="1.6" fill="#e6f070" opacity="0.85"/>
<ellipse cx="536.4" cy="692.2" rx="1.6" ry="1.1" fill="#e6f070" opacity="0.85"/>
<ellipse cx="696.9" cy="746.5" rx="2.4" ry="1.8" fill="#e6f070" opacity="0.85"/>
<ellipse cx="440.8" cy="720.6" rx="2.6" ry="1.0" fill="#e6f070" opacity="0.85"/>
<ellipse cx="372.4" cy="736.7" rx="1.7" ry="1.3" fill="#e6f070" opacity="0.85"/>
<ellipse cx="489.6" cy="765.5" rx="2.5" ry="1.2" fill="#e6f070" opacity="0.85"/>
<ellipse cx="701.1" cy="751.8" rx="1.7" ry="1.8" fill="#e6f070" opacity="0.85"/>
<ellipse cx="499.9" cy="710.8" rx="1.7" ry="1.6" fill="#e6f070" opacity="0.85"/>
<ellipse cx="831.9" cy="790.6" rx="2.2" ry="1.2" fill="#e6f070" opacity="0.85"/>
<ellipse cx="377.1" cy="773.3" rx="2.5" ry="1.3" fill="#e6f070" opacity="0.85"/>
<ellipse cx="712.5" cy="747.9" rx="3.1" ry="1.7" fill="#e6f070" opacity="0.85"/>
<ellipse cx="502.5" cy="805.8" rx="1.6" ry="1.5" fill="#e6f070" opacity="0.85"/>
<ellipse cx="585.8" cy="721.9" rx="1.6" ry="1.7" fill="#e6f070" opacity="0.85"/>
<ellipse cx="377.5" cy="761.4" rx="3.1" ry="1.1" fill="#e6f070" opacity="0.85"/>
<ellipse cx="476.5" cy="768.6" rx="2.4" ry="1.6" fill="#e6f070" opacity="0.85"/>
<ellipse cx="534.7" cy="729.8" rx="1.6" ry="1.8" fill="#e6f070" opacity="0.85"/>
<ellipse cx="785.2" cy="782.1" rx="1.5" ry="1.8" fill="#e6f070" opacity="0.85"/>
<ellipse cx="490.5" cy="705.3" rx="1.9" ry="1.0" fill="#e6f070" opacity="0.85"/>
<ellipse cx="548.5" cy="786.5" rx="2.7" ry="1.8" fill="#e6f070" opacity="0.85"/>
<ellipse cx="664.0" cy="746.9" rx="2.8" ry="1.5" fill="#e6f070" opacity="0.85"/>
<ellipse cx="511.3" cy="772.9" rx="3.1" ry="1.2" fill="#e6f070" opacity="0.85"/>
<ellipse cx="508.7" cy="721.7" rx="2.8" ry="1.9" fill="#e6f070" opacity="0.85"/>
<ellipse cx="497.5" cy="806.4" rx="2.6" ry="1.6" fill="#e6f070" opacity="0.85"/>
<ellipse cx="722.9" cy="815.4" rx="2.3" ry="1.8" fill="#e6f070" opacity="0.85"/>
<ellipse cx="740.0" cy="800.0" rx="2.2" ry="1.7" fill="#e6f070" opacity="0.85"/>
<ellipse cx="672.7" cy="730.8" rx="1.9" ry="1.6" fill="#e6f070" opacity="0.85"/>
<ellipse cx="412.2" cy="806.8" rx="1.7" ry="1.0" fill="#e6f070" opacity="0.85"/>
<ellipse cx="427.4" cy="809.0" rx="2.1" ry="1.1" fill="#e6f070" opacity="0.85"/>
<ellipse cx="386.2" cy="697.2" rx="2.7" ry="1.6" fill="#e6f070" opacity="0.85"/>
<ellipse cx="739.7" cy="784.8" rx="1.6" ry="1.5" fill="#e6f070" opacity="0.85"/>
<ellipse cx="563.2" cy="795.0" rx="2.9" ry="1.8" fill="#e6f070" opacity="0.85"/>
<ellipse cx="405.9" cy="801.3" rx="3.1" ry="1.8" fill="#e6f070" opacity="0.85"/>
<ellipse cx="427.7" cy="717.9" rx="1.7" ry="1.0" fill="#e6f070" opacity="0.85"/>
<ellipse cx="819.4" cy="794.3" rx="2.6" ry="1.7" fill="#e6f070" opacity="0.85"/>
<ellipse cx="423.8" cy="704.3" rx="2.8" ry="1.2" fill="#e6f070" opacity="0.85"/>
<ellipse cx="539.8" cy="745.4" rx="1.5" ry="1.2" fill="#e6f070" opacity="0.85"/>
<ellipse cx="520.5" cy="782.2" rx="2.1" ry="1.3" fill="#e6f070" opacity="0.85"/>
<ellipse cx="821.4" cy="769.9" rx="1.6" ry="1.4" fill="#e6f070" opacity="0.85"/>
<ellipse cx="601.9" cy="789.4" rx="2.1" ry="1.6" fill="#e6f070" opacity="0.85"/>
<ellipse cx="371.7" cy="717.5" rx="2.8" ry="1.9" fill="#e6f070" opacity="0.85"/>
<ellipse cx="373.3" cy="753.8" rx="2.3" ry="1.7" fill="#e6f070" opacity="0.85"/>
<ellipse cx="468.6" cy="754.3" rx="2.1" ry="1.7" fill="#e6f070" opacity="0.85"/>
<ellipse cx="508.8" cy="810.9" rx="2.0" ry="1.2" fill="#e6f070" opacity="0.85"/>
<ellipse cx="741.0" cy="754.8" rx="1.7" ry="1.6" fill="#e6f070" opacity="0.85"/>
<ellipse cx="413.8" cy="791.3" rx="2.7" ry="1.7" fill="#e6f070" opacity="0.85"/>
<ellipse cx="703.2" cy="736.8" rx="2.2" ry="1.4" fill="#e6f070" opacity="0.85"/>
<ellipse cx="480.0" cy="725.2" rx="3.0" ry="1.5" fill="#e6f070" opacity="0.85"/>
<ellipse cx="571.7" cy="803.4" rx="1.9" ry="1.4" fill="#e6f070" opacity="0.85"/>
<g fill="#ffffff"><ellipse cx="415.6" cy="766.1" rx="3.5" ry="2.1" transform="rotate(-90.0 415.6 766.1)"/><ellipse cx="412.3" cy="768.1" rx="3.5" ry="2.1" transform="rotate(-150.0 412.3 768.1)"/><ellipse cx="412.3" cy="771.9" rx="3.5" ry="2.1" transform="rotate(-210.0 412.3 771.9)"/><ellipse cx="415.6" cy="773.9" rx="3.5" ry="2.1" transform="rotate(-270.0 415.6 773.9)"/><ellipse cx="418.9" cy="771.9" rx="3.5" ry="2.1" transform="rotate(-330.0 418.9 771.9)"/><ellipse cx="418.9" cy="768.1" rx="3.5" ry="2.1" transform="rotate(-390.0 418.9 768.1)"/></g>
<circle cx="415.6" cy="770.0" r="1.9" fill="#f0b020"/>
<g fill="#ffffff"><ellipse cx="456.8" cy="773.1" rx="3.5" ry="2.1" transform="rotate(-90.0 456.8 773.1)"/><ellipse cx="453.5" cy="775.1" rx="3.5" ry="2.1" transform="rotate(-150.0 453.5 775.1)"/><ellipse cx="453.5" cy="778.9" rx="3.5" ry="2.1" transform="rotate(-210.0 453.5 778.9)"/><ellipse cx="456.8" cy="780.9" rx="3.5" ry="2.1" transform="rotate(-270.0 456.8 780.9)"/><ellipse cx="460.1" cy="778.9" rx="3.5" ry="2.1" transform="rotate(-330.0 460.1 778.9)"/><ellipse cx="460.1" cy="775.1" rx="3.5" ry="2.1" transform="rotate(-390.0 460.1 775.1)"/></g>
<circle cx="456.8" cy="777.0" r="1.9" fill="#f0b020"/>
<g fill="#ffffff"><ellipse cx="474.6" cy="761.9" rx="3.5" ry="2.1" transform="rotate(-90.0 474.6 761.9)"/><ellipse cx="471.3" cy="763.9" rx="3.5" ry="2.1" transform="rotate(-150.0 471.3 763.9)"/><ellipse cx="471.3" cy="767.7" rx="3.5" ry="2.1" transform="rotate(-210.0 471.3 767.7)"/><ellipse cx="474.6" cy="769.6" rx="3.5" ry="2.1" transform="rotate(-270.0 474.6 769.6)"/><ellipse cx="477.9" cy="767.7" rx="3.5" ry="2.1" transform="rotate(-330.0 477.9 767.7)"/><ellipse cx="477.9" cy="763.9" rx="3.5" ry="2.1" transform="rotate(-390.0 477.9 763.9)"/></g>
<circle cx="474.6" cy="765.8" r="1.9" fill="#f0b020"/>
<g fill="#ffffff"><ellipse cx="495.7" cy="771.9" rx="3.5" ry="2.1" transform="rotate(-90.0 495.7 771.9)"/><ellipse cx="492.4" cy="773.9" rx="3.5" ry="2.1" transform="rotate(-150.0 492.4 773.9)"/><ellipse cx="492.4" cy="777.7" rx="3.5" ry="2.1" transform="rotate(-210.0 492.4 777.7)"/><ellipse cx="495.7" cy="779.6" rx="3.5" ry="2.1" transform="rotate(-270.0 495.7 779.6)"/><ellipse cx="499.0" cy="777.7" rx="3.5" ry="2.1" transform="rotate(-330.0 499.0 777.7)"/><ellipse cx="499.0" cy="773.9" rx="3.5" ry="2.1" transform="rotate(-390.0 499.0 773.9)"/></g>
<circle cx="495.7" cy="775.8" r="1.9" fill="#f0b020"/>
<g fill="#ffffff"><ellipse cx="513.6" cy="749.8" rx="3.5" ry="2.1" transform="rotate(-90.0 513.6 749.8)"/><ellipse cx="510.3" cy="751.7" rx="3.5" ry="2.1" transform="rotate(-150.0 510.3 751.7)"/><ellipse cx="510.3" cy="755.5" rx="3.5" ry="2.1" transform="rotate(-210.0 510.3 755.5)"/><ellipse cx="513.6" cy="757.5" rx="3.5" ry="2.1" transform="rotate(-270.0 513.6 757.5)"/><ellipse cx="516.9" cy="755.5" rx="3.5" ry="2.1" transform="rotate(-330.0 516.9 755.5)"/><ellipse cx="516.9" cy="751.7" rx="3.5" ry="2.1" transform="rotate(-390.0 516.9 751.7)"/></g>
<circle cx="513.6" cy="753.6" r="1.9" fill="#f0b020"/>
<g fill="#ffffff"><ellipse cx="535.8" cy="741.9" rx="3.5" ry="2.1" transform="rotate(-90.0 535.8 741.9)"/><ellipse cx="532.5" cy="743.9" rx="3.5" ry="2.1" transform="rotate(-150.0 532.5 743.9)"/><ellipse cx="532.5" cy="747.7" rx="3.5" ry="2.1" transform="rotate(-210.0 532.5 747.7)"/><ellipse cx="535.8" cy="749.6" rx="3.5" ry="2.1" transform="rotate(-270.0 535.8 749.6)"/><ellipse cx="539.1" cy="747.7" rx="3.5" ry="2.1" transform="rotate(-330.0 539.1 747.7)"/><ellipse cx="539.1" cy="743.9" rx="3.5" ry="2.1" transform="rotate(-390.0 539.1 743.9)"/></g>
<circle cx="535.8" cy="745.8" r="1.9" fill="#f0b020"/>
<g fill="#ffffff"><ellipse cx="559.2" cy="734.1" rx="3.5" ry="2.1" transform="rotate(-90.0 559.2 734.1)"/><ellipse cx="555.9" cy="736.1" rx="3.5" ry="2.1" transform="rotate(-150.0 555.9 736.1)"/><ellipse cx="555.9" cy="739.9" rx="3.5" ry="2.1" transform="rotate(-210.0 555.9 739.9)"/><ellipse cx="559.2" cy="741.9" rx="3.5" ry="2.1" transform="rotate(-270.0 559.2 741.9)"/><ellipse cx="562.5" cy="739.9" rx="3.5" ry="2.1" transform="rotate(-330.0 562.5 739.9)"/><ellipse cx="562.5" cy="736.1" rx="3.5" ry="2.1" transform="rotate(-390.0 562.5 736.1)"/></g>
<circle cx="559.2" cy="738.0" r="1.9" fill="#f0b020"/>
<g fill="#ffffff"><ellipse cx="556.0" cy="750.9" rx="3.5" ry="2.1" transform="rotate(-90.0 556.0 750.9)"/><ellipse cx="552.7" cy="752.8" rx="3.5" ry="2.1" transform="rotate(-150.0 552.7 752.8)"/><ellipse cx="552.7" cy="756.6" rx="3.5" ry="2.1" transform="rotate(-210.0 552.7 756.6)"/><ellipse cx="556.0" cy="758.6" rx="3.5" ry="2.1" transform="rotate(-270.0 556.0 758.6)"/><ellipse cx="559.3" cy="756.6" rx="3.5" ry="2.1" transform="rotate(-330.0 559.3 756.6)"/><ellipse cx="559.3" cy="752.8" rx="3.5" ry="2.1" transform="rotate(-390.0 559.3 752.8)"/></g>
<circle cx="556.0" cy="754.7" r="1.9" fill="#f0b020"/>
<g fill="#ffffff"><ellipse cx="529.2" cy="780.9" rx="3.5" ry="2.1" transform="rotate(-90.0 529.2 780.9)"/><ellipse cx="525.9" cy="782.8" rx="3.5" ry="2.1" transform="rotate(-150.0 525.9 782.8)"/><ellipse cx="525.9" cy="786.6" rx="3.5" ry="2.1" transform="rotate(-210.0 525.9 786.6)"/><ellipse cx="529.2" cy="788.6" rx="3.5" ry="2.1" transform="rotate(-270.0 529.2 788.6)"/><ellipse cx="532.5" cy="786.6" rx="3.5" ry="2.1" transform="rotate(-330.0 532.5 786.6)"/><ellipse cx="532.5" cy="782.8" rx="3.5" ry="2.1" transform="rotate(-390.0 532.5 782.8)"/></g>
<circle cx="529.2" cy="784.7" r="1.9" fill="#f0b020"/>
<g fill="#ffffff"><ellipse cx="609.4" cy="765.1" rx="3.5" ry="2.1" transform="rotate(-90.0 609.4 765.1)"/><ellipse cx="606.1" cy="767.1" rx="3.5" ry="2.1" transform="rotate(-150.0 606.1 767.1)"/><ellipse cx="606.1" cy="770.9" rx="3.5" ry="2.1" transform="rotate(-210.0 606.1 770.9)"/><ellipse cx="609.4" cy="772.9" rx="3.5" ry="2.1" transform="rotate(-270.0 609.4 772.9)"/><ellipse cx="612.7" cy="770.9" rx="3.5" ry="2.1" transform="rotate(-330.0 612.7 770.9)"/><ellipse cx="612.7" cy="767.1" rx="3.5" ry="2.1" transform="rotate(-390.0 612.7 767.1)"/></g>
<circle cx="609.4" cy="769.0" r="1.9" fill="#f0b020"/>
<g fill="#ffffff"><ellipse cx="607.0" cy="788.6" rx="3.5" ry="2.1" transform="rotate(-90.0 607.0 788.6)"/><ellipse cx="603.7" cy="790.6" rx="3.5" ry="2.1" transform="rotate(-150.0 603.7 790.6)"/><ellipse cx="603.7" cy="794.4" rx="3.5" ry="2.1" transform="rotate(-210.0 603.7 794.4)"/><ellipse cx="607.0" cy="796.4" rx="3.5" ry="2.1" transform="rotate(-270.0 607.0 796.4)"/><ellipse cx="610.3" cy="794.4" rx="3.5" ry="2.1" transform="rotate(-330.0 610.3 794.4)"/><ellipse cx="610.3" cy="790.6" rx="3.5" ry="2.1" transform="rotate(-390.0 610.3 790.6)"/></g>
<circle cx="607.0" cy="792.5" r="1.9" fill="#f0b020"/>
<g fill="#ffffff"><ellipse cx="633.9" cy="756.1" rx="3.5" ry="2.1" transform="rotate(-90.0 633.9 756.1)"/><ellipse cx="630.6" cy="758.1" rx="3.5" ry="2.1" transform="rotate(-150.0 630.6 758.1)"/><ellipse cx="630.6" cy="761.9" rx="3.5" ry="2.1" transform="rotate(-210.0 630.6 761.9)"/><ellipse cx="633.9" cy="763.9" rx="3.5" ry="2.1" transform="rotate(-270.0 633.9 763.9)"/><ellipse cx="637.2" cy="761.9" rx="3.5" ry="2.1" transform="rotate(-330.0 637.2 761.9)"/><ellipse cx="637.2" cy="758.1" rx="3.5" ry="2.1" transform="rotate(-390.0 637.2 758.1)"/></g>
<circle cx="633.9" cy="760.0" r="1.9" fill="#f0b020"/>
<g fill="#ffffff"><ellipse cx="708.5" cy="792.0" rx="3.5" ry="2.1" transform="rotate(-90.0 708.5 792.0)"/><ellipse cx="705.2" cy="794.0" rx="3.5" ry="2.1" transform="rotate(-150.0 705.2 794.0)"/><ellipse cx="705.2" cy="797.8" rx="3.5" ry="2.1" transform="rotate(-210.0 705.2 797.8)"/><ellipse cx="708.5" cy="799.8" rx="3.5" ry="2.1" transform="rotate(-270.0 708.5 799.8)"/><ellipse cx="711.8" cy="797.8" rx="3.5" ry="2.1" transform="rotate(-330.0 711.8 797.8)"/><ellipse cx="711.8" cy="794.0" rx="3.5" ry="2.1" transform="rotate(-390.0 711.8 794.0)"/></g>
<circle cx="708.5" cy="795.9" r="1.9" fill="#f0b020"/>
<g fill="#ffffff"><ellipse cx="725.0" cy="805.1" rx="3.5" ry="2.1" transform="rotate(-90.0 725.0 805.1)"/><ellipse cx="721.7" cy="807.1" rx="3.5" ry="2.1" transform="rotate(-150.0 721.7 807.1)"/><ellipse cx="721.7" cy="810.9" rx="3.5" ry="2.1" transform="rotate(-210.0 721.7 810.9)"/><ellipse cx="725.0" cy="812.9" rx="3.5" ry="2.1" transform="rotate(-270.0 725.0 812.9)"/><ellipse cx="728.3" cy="810.9" rx="3.5" ry="2.1" transform="rotate(-330.0 728.3 810.9)"/><ellipse cx="728.3" cy="807.1" rx="3.5" ry="2.1" transform="rotate(-390.0 728.3 807.1)"/></g>
<circle cx="725.0" cy="809.0" r="1.9" fill="#f0b020"/>
<g fill="#ffffff"><ellipse cx="654.0" cy="774.1" rx="3.5" ry="2.1" transform="rotate(-90.0 654.0 774.1)"/><ellipse cx="650.7" cy="776.1" rx="3.5" ry="2.1" transform="rotate(-150.0 650.7 776.1)"/><ellipse cx="650.7" cy="779.9" rx="3.5" ry="2.1" transform="rotate(-210.0 650.7 779.9)"/><ellipse cx="654.0" cy="781.9" rx="3.5" ry="2.1" transform="rotate(-270.0 654.0 781.9)"/><ellipse cx="657.3" cy="779.9" rx="3.5" ry="2.1" transform="rotate(-330.0 657.3 779.9)"/><ellipse cx="657.3" cy="776.1" rx="3.5" ry="2.1" transform="rotate(-390.0 657.3 776.1)"/></g>
<circle cx="654.0" cy="778.0" r="1.9" fill="#f0b020"/>
<g fill="#ffffff"><ellipse cx="469.0" cy="740.8" rx="3.5" ry="2.1" transform="rotate(-90.0 469.0 740.8)"/><ellipse cx="465.7" cy="742.7" rx="3.5" ry="2.1" transform="rotate(-150.0 465.7 742.7)"/><ellipse cx="465.7" cy="746.5" rx="3.5" ry="2.1" transform="rotate(-210.0 465.7 746.5)"/><ellipse cx="469.0" cy="748.5" rx="3.5" ry="2.1" transform="rotate(-270.0 469.0 748.5)"/><ellipse cx="472.3" cy="746.5" rx="3.5" ry="2.1" transform="rotate(-330.0 472.3 746.5)"/><ellipse cx="472.3" cy="742.7" rx="3.5" ry="2.1" transform="rotate(-390.0 472.3 742.7)"/></g>
<circle cx="469.0" cy="744.6" r="1.9" fill="#f0b020"/>
<g fill="#ffffff"><ellipse cx="513.6" cy="729.6" rx="3.5" ry="2.1" transform="rotate(-90.0 513.6 729.6)"/><ellipse cx="510.3" cy="731.6" rx="3.5" ry="2.1" transform="rotate(-150.0 510.3 731.6)"/><ellipse cx="510.3" cy="735.4" rx="3.5" ry="2.1" transform="rotate(-210.0 510.3 735.4)"/><ellipse cx="513.6" cy="737.4" rx="3.5" ry="2.1" transform="rotate(-270.0 513.6 737.4)"/><ellipse cx="516.9" cy="735.4" rx="3.5" ry="2.1" transform="rotate(-330.0 516.9 735.4)"/><ellipse cx="516.9" cy="731.6" rx="3.5" ry="2.1" transform="rotate(-390.0 516.9 731.6)"/></g>
<circle cx="513.6" cy="733.5" r="1.9" fill="#f0b020"/>
<g fill="#ffffff"><ellipse cx="593.8" cy="745.1" rx="3.5" ry="2.1" transform="rotate(-90.0 593.8 745.1)"/><ellipse cx="590.5" cy="747.1" rx="3.5" ry="2.1" transform="rotate(-150.0 590.5 747.1)"/><ellipse cx="590.5" cy="750.9" rx="3.5" ry="2.1" transform="rotate(-210.0 590.5 750.9)"/><ellipse cx="593.8" cy="752.9" rx="3.5" ry="2.1" transform="rotate(-270.0 593.8 752.9)"/><ellipse cx="597.1" cy="750.9" rx="3.5" ry="2.1" transform="rotate(-330.0 597.1 750.9)"/><ellipse cx="597.1" cy="747.1" rx="3.5" ry="2.1" transform="rotate(-390.0 597.1 747.1)"/></g>
<circle cx="593.8" cy="749.0" r="1.9" fill="#f0b020"/>
<g fill="#ffffff"><ellipse cx="792.0" cy="786.1" rx="3.5" ry="2.1" transform="rotate(-90.0 792.0 786.1)"/><ellipse cx="788.7" cy="788.1" rx="3.5" ry="2.1" transform="rotate(-150.0 788.7 788.1)"/><ellipse cx="788.7" cy="791.9" rx="3.5" ry="2.1" transform="rotate(-210.0 788.7 791.9)"/><ellipse cx="792.0" cy="793.9" rx="3.5" ry="2.1" transform="rotate(-270.0 792.0 793.9)"/><ellipse cx="795.3" cy="791.9" rx="3.5" ry="2.1" transform="rotate(-330.0 795.3 791.9)"/><ellipse cx="795.3" cy="788.1" rx="3.5" ry="2.1" transform="rotate(-390.0 795.3 788.1)"/></g>
<circle cx="792.0" cy="790.0" r="1.9" fill="#f0b020"/>
<g fill="#ffffff"><ellipse cx="820.0" cy="801.1" rx="3.5" ry="2.1" transform="rotate(-90.0 820.0 801.1)"/><ellipse cx="816.7" cy="803.1" rx="3.5" ry="2.1" transform="rotate(-150.0 816.7 803.1)"/><ellipse cx="816.7" cy="806.9" rx="3.5" ry="2.1" transform="rotate(-210.0 816.7 806.9)"/><ellipse cx="820.0" cy="808.9" rx="3.5" ry="2.1" transform="rotate(-270.0 820.0 808.9)"/><ellipse cx="823.3" cy="806.9" rx="3.5" ry="2.1" transform="rotate(-330.0 823.3 806.9)"/><ellipse cx="823.3" cy="803.1" rx="3.5" ry="2.1" transform="rotate(-390.0 823.3 803.1)"/></g>
<circle cx="820.0" cy="805.0" r="1.9" fill="#f0b020"/>
<g fill="#ffffff"><ellipse cx="850.0" cy="796.1" rx="3.5" ry="2.1" transform="rotate(-90.0 850.0 796.1)"/><ellipse cx="846.7" cy="798.1" rx="3.5" ry="2.1" transform="rotate(-150.0 846.7 798.1)"/><ellipse cx="846.7" cy="801.9" rx="3.5" ry="2.1" transform="rotate(-210.0 846.7 801.9)"/><ellipse cx="850.0" cy="803.9" rx="3.5" ry="2.1" transform="rotate(-270.0 850.0 803.9)"/><ellipse cx="853.3" cy="801.9" rx="3.5" ry="2.1" transform="rotate(-330.0 853.3 801.9)"/><ellipse cx="853.3" cy="798.1" rx="3.5" ry="2.1" transform="rotate(-390.0 853.3 798.1)"/></g>
<circle cx="850.0" cy="800.0" r="1.9" fill="#f0b020"/>
<g fill="#ffffff"><ellipse cx="880.0" cy="808.1" rx="3.5" ry="2.1" transform="rotate(-90.0 880.0 808.1)"/><ellipse cx="876.7" cy="810.1" rx="3.5" ry="2.1" transform="rotate(-150.0 876.7 810.1)"/><ellipse cx="876.7" cy="813.9" rx="3.5" ry="2.1" transform="rotate(-210.0 876.7 813.9)"/><ellipse cx="880.0" cy="815.9" rx="3.5" ry="2.1" transform="rotate(-270.0 880.0 815.9)"/><ellipse cx="883.3" cy="813.9" rx="3.5" ry="2.1" transform="rotate(-330.0 883.3 813.9)"/><ellipse cx="883.3" cy="810.1" rx="3.5" ry="2.1" transform="rotate(-390.0 883.3 810.1)"/></g>
<circle cx="880.0" cy="812.0" r="1.9" fill="#f0b020"/>
<g fill="#ffffff"><ellipse cx="760.0" cy="808.1" rx="3.5" ry="2.1" transform="rotate(-90.0 760.0 808.1)"/><ellipse cx="756.7" cy="810.1" rx="3.5" ry="2.1" transform="rotate(-150.0 756.7 810.1)"/><ellipse cx="756.7" cy="813.9" rx="3.5" ry="2.1" transform="rotate(-210.0 756.7 813.9)"/><ellipse cx="760.0" cy="815.9" rx="3.5" ry="2.1" transform="rotate(-270.0 760.0 815.9)"/><ellipse cx="763.3" cy="813.9" rx="3.5" ry="2.1" transform="rotate(-330.0 763.3 813.9)"/><ellipse cx="763.3" cy="810.1" rx="3.5" ry="2.1" transform="rotate(-390.0 763.3 810.1)"/></g>
<circle cx="760.0" cy="812.0" r="1.9" fill="#f0b020"/>
<g fill="#ffffff"><ellipse cx="905.0" cy="796.1" rx="3.5" ry="2.1" transform="rotate(-90.0 905.0 796.1)"/><ellipse cx="901.7" cy="798.1" rx="3.5" ry="2.1" transform="rotate(-150.0 901.7 798.1)"/><ellipse cx="901.7" cy="801.9" rx="3.5" ry="2.1" transform="rotate(-210.0 901.7 801.9)"/><ellipse cx="905.0" cy="803.9" rx="3.5" ry="2.1" transform="rotate(-270.0 905.0 803.9)"/><ellipse cx="908.3" cy="801.9" rx="3.5" ry="2.1" transform="rotate(-330.0 908.3 801.9)"/><ellipse cx="908.3" cy="798.1" rx="3.5" ry="2.1" transform="rotate(-390.0 908.3 798.1)"/></g>
<circle cx="905.0" cy="800.0" r="1.9" fill="#f0b020"/>
<path d="M458.8 819.0 Q446.7 759.5 460.0 700.0 Q471.4 759.5 481.2 819.0Z" fill="#5aa62c"/>
<path d="M365.0 819.0 Q434.1 759.5 473.5 700.0 Q467.1 759.5 395.0 819.0Z" fill="#4f9a28"/>
<path d="M530.0 819.0 Q574.3 772.0 640.0 725.0 Q596.3 772.0 550.0 819.0Z" fill="#55a02c"/>
<path d="M567.5 819.0 Q558.8 758.5 576.0 698.0 Q597.3 758.5 602.5 819.0Z" fill="#4a9424"/>
<path d="M616.2 819.0 Q606.4 783.0 607.0 747.0 Q625.6 783.0 633.8 819.0Z" fill="#5aa630"/>
<path d="M647.5 819.0 Q670.2 769.5 698.0 720.0 Q697.7 769.5 672.5 819.0Z" fill="#4f9a2a"/>
<path d="M883.0 819.0 Q882.0 784.5 893.0 750.0 Q904.0 784.5 903.0 819.0Z" fill="#4f9a2a"/>
<path d="M925.0 819.0 Q941.5 794.5 970.0 770.0 Q963.5 794.5 945.0 819.0Z" fill="#58a42c"/>
<path d="M981.2 819.0 Q988.9 792.5 1007.0 766.0 Q1008.1 792.5 998.8 819.0Z" fill="#4a9326"/>
<path d="M1043.8 819.0 Q1045.1 801.0 1054.0 783.0 Q1058.9 801.0 1056.2 819.0Z" fill="#58a42c"/>
<path d="M410.0 725.0 L412.0 819.0" stroke="#9a6a40" stroke-width="4"/>
<g transform="rotate(0 410.0 710.0)">
<path d="M388.5 708.2 Q388.5 692.0 410.0 692.0 Q431.5 692.0 431.5 708.2 Q431.5 728.0 410.0 728.0 Q388.5 728.0 388.5 708.2Z" fill="url(#tul)"/>
<path d="M388.5 708.2 Q388.5 692.0 407.9 694.0 Q397.1 710.0 405.7 726.2 Q388.5 720.8 388.5 708.2Z" fill="#fb9cae"/>
<path d="M399.2 726.0 L405.7 722.0 L410.0 727.0 L415.2 722.0 L420.8 726.0 L410.0 731.0Z" fill="#9a6a3a"/>
</g>
<path d="M492.0 766.0 L494.0 819.0" stroke="#5ca33c" stroke-width="4"/>
<g transform="rotate(0 492.0 731.0)">
<path d="M471.5 727.2 Q471.5 693.0 492.0 693.0 Q512.5 693.0 512.5 727.2 Q512.5 769.0 492.0 769.0 Q471.5 769.0 471.5 727.2Z" fill="url(#tul)"/>
<path d="M478.9 702.1 Q471.5 738.6 487.9 765.2" stroke="#f0103c" stroke-width="4" fill="none"/>
<path d="M489.9 700.6 Q492.9 731.0 489.9 761.4" stroke="#fba6bc" stroke-width="1" fill="none"/>
<path d="M494.1 700.6 Q497.1 731.0 494.1 761.4" stroke="#fba6bc" stroke-width="1" fill="none"/>
<path d="M498.1 700.6 Q501.1 731.0 498.1 761.4" stroke="#fba6bc" stroke-width="1" fill="none"/>
<path d="M502.2 700.6 Q505.2 731.0 502.2 761.4" stroke="#fba6bc" stroke-width="1" fill="none"/>
<path d="M481.8 767.0 L487.9 763.0 L492.0 768.0 L496.9 763.0 L502.2 767.0 L492.0 772.0Z" fill="#9a6a3a"/>
</g>
<path d="M555.0 815.0 L557.0 819.0" stroke="#5ca33c" stroke-width="4"/>
<g transform="rotate(-8 555.0 787.0)">
<path d="M535.0 783.9 Q535.0 756.0 555.0 756.0 Q575.0 756.0 575.0 783.9 Q575.0 818.0 555.0 818.0 Q535.0 818.0 535.0 783.9Z" fill="url(#tul)"/>
<path d="M535.0 783.9 Q535.0 756.0 553.0 758.0 Q543.0 787.0 551.0 814.9 Q535.0 805.6 535.0 783.9Z" fill="#fb9cae"/>
<path d="M545.0 816.0 L551.0 812.0 L555.0 817.0 L559.8 812.0 L565.0 816.0 L555.0 821.0Z" fill="#9a6a3a"/>
</g>
<path d="M692.0 821.0 L694.0 819.0" stroke="#5ca33c" stroke-width="4"/>
<g transform="rotate(0 692.0 809.0)">
<path d="M675.0 807.5 Q675.0 794.0 692.0 794.0 Q709.0 794.0 709.0 807.5 Q709.0 824.0 692.0 824.0 Q675.0 824.0 675.0 807.5Z" fill="url(#tul)"/>
<path d="M675.0 807.5 Q675.0 794.0 690.3 796.0 Q681.8 809.0 688.6 822.5 Q675.0 818.0 675.0 807.5Z" fill="#fb9cae"/>
<path d="M683.5 822.0 L688.6 818.0 L692.0 823.0 L696.1 818.0 L700.5 822.0 L692.0 827.0Z" fill="#9a6a3a"/>
</g>
<path d="M752.0 771.0 L754.0 819.0" stroke="#5ca33c" stroke-width="4"/>
<g transform="rotate(0 752.0 751.5)">
<path d="M733.5 749.2 Q733.5 729.0 752.0 729.0 Q770.5 729.0 770.5 749.2 Q770.5 774.0 752.0 774.0 Q733.5 774.0 733.5 749.2Z" fill="url(#tul)"/>
<path d="M733.5 749.2 Q733.5 729.0 750.1 731.0 Q740.9 751.5 748.3 771.8 Q733.5 765.0 733.5 749.2Z" fill="#fb9cae"/>
<path d="M742.8 772.0 L748.3 768.0 L752.0 773.0 L756.4 768.0 L761.2 772.0 L752.0 777.0Z" fill="#9a6a3a"/>
</g>
<path d="M823.0 803.0 L825.0 819.0" stroke="#5ca33c" stroke-width="4"/>
<g transform="rotate(0 823.0 776.0)">
<path d="M804.5 773.0 Q804.5 746.0 823.0 746.0 Q841.5 746.0 841.5 773.0 Q841.5 806.0 823.0 806.0 Q804.5 806.0 804.5 773.0Z" fill="url(#tul)"/>
<path d="M811.2 753.2 Q804.5 782.0 819.3 803.0" stroke="#f0103c" stroke-width="4" fill="none"/>
<path d="M821.1 752.0 Q824.1 776.0 821.1 800.0" stroke="#fba6bc" stroke-width="1" fill="none"/>
<path d="M824.9 752.0 Q827.9 776.0 824.9 800.0" stroke="#fba6bc" stroke-width="1" fill="none"/>
<path d="M828.5 752.0 Q831.5 776.0 828.5 800.0" stroke="#fba6bc" stroke-width="1" fill="none"/>
<path d="M832.2 752.0 Q835.2 776.0 832.2 800.0" stroke="#fba6bc" stroke-width="1" fill="none"/>
<path d="M813.8 804.0 L819.3 800.0 L823.0 805.0 L827.4 800.0 L832.2 804.0 L823.0 809.0Z" fill="#9a6a3a"/>
</g>
<path d="M880.0 819.0 L882.0 819.0" stroke="#5ca33c" stroke-width="4"/>
<g transform="rotate(0 880.0 809.0)">
<path d="M864.0 807.7 Q864.0 796.0 880.0 796.0 Q896.0 796.0 896.0 807.7 Q896.0 822.0 880.0 822.0 Q864.0 822.0 864.0 807.7Z" fill="url(#tul)"/>
<path d="M864.0 807.7 Q864.0 796.0 878.4 798.0 Q870.4 809.0 876.8 820.7 Q864.0 816.8 864.0 807.7Z" fill="#fb9cae"/>
<path d="M872.0 820.0 L876.8 816.0 L880.0 821.0 L883.8 816.0 L888.0 820.0 L880.0 825.0Z" fill="#9a6a3a"/>
</g>
<path d="M1035.0 818.0 L1037.0 819.0" stroke="#5ca33c" stroke-width="4"/>
<g transform="rotate(0 1035.0 806.0)">
<path d="M1020.5 804.5 Q1020.5 791.0 1035.0 791.0 Q1049.5 791.0 1049.5 804.5 Q1049.5 821.0 1035.0 821.0 Q1020.5 821.0 1020.5 804.5Z" fill="url(#tul)"/>
<path d="M1020.5 804.5 Q1020.5 791.0 1033.5 793.0 Q1026.3 806.0 1032.1 819.5 Q1020.5 815.0 1020.5 804.5Z" fill="#fb9cae"/>
<path d="M1027.8 819.0 L1032.1 815.0 L1035.0 820.0 L1038.5 815.0 L1042.2 819.0 L1035.0 824.0Z" fill="#9a6a3a"/>
</g>
<path d="M1090.0 820.0 L1092.0 819.0" stroke="#5ca33c" stroke-width="4"/>
<g transform="rotate(0 1090.0 813.0)">
<path d="M1079.0 812.0 Q1079.0 803.0 1090.0 803.0 Q1101.0 803.0 1101.0 812.0 Q1101.0 823.0 1090.0 823.0 Q1079.0 823.0 1079.0 812.0Z" fill="url(#tul)"/>
<path d="M1083.0 805.4 Q1079.0 815.0 1087.8 822.0" stroke="#f0103c" stroke-width="4" fill="none"/>
<path d="M1088.9 805.0 Q1091.9 813.0 1088.9 821.0" stroke="#fba6bc" stroke-width="1" fill="none"/>
<path d="M1091.1 805.0 Q1094.1 813.0 1091.1 821.0" stroke="#fba6bc" stroke-width="1" fill="none"/>
<path d="M1093.3 805.0 Q1096.3 813.0 1093.3 821.0" stroke="#fba6bc" stroke-width="1" fill="none"/>
<path d="M1095.5 805.0 Q1098.5 813.0 1095.5 821.0" stroke="#fba6bc" stroke-width="1" fill="none"/>
<path d="M1084.5 821.0 L1087.8 817.0 L1090.0 822.0 L1092.6 817.0 L1095.5 821.0 L1090.0 826.0Z" fill="#9a6a3a"/>
</g>
<path d="M417.8 819.0 Q469.7 776.0 518.0 733.0 Q494.5 776.0 440.2 819.0Z" fill="#3f8a22"/>
<path d="M552.5 819.0 Q522.1 776.0 518.0 733.0 Q538.6 776.0 567.5 819.0Z" fill="#438e24"/>
<path d="M607.5 819.0 Q626.5 773.0 660.6 727.0 Q654.0 773.0 632.5 819.0Z" fill="#4f9a2a"/>
<path d="M635.0 819.0 Q682.9 789.5 731.0 760.0 Q715.9 789.5 665.0 819.0Z" fill="#4a9426"/>
<path d="M791.2 819.0 Q770.4 777.0 760.0 735.0 Q789.6 777.0 808.8 819.0Z" fill="#4a9326"/>
<path d="M951.2 819.0 Q970.4 789.5 1000.0 760.0 Q989.6 789.5 968.8 819.0Z" fill="#4f9a2a"/>
<linearGradient id="lf2" x1="0" y1="0" x2="1" y2="1"><stop offset="0" stop-color="#c8c848"/><stop offset="1" stop-color="#e2e870"/></linearGradient>
<linearGradient id="lf3" x1="0" y1="0" x2="1" y2="1"><stop offset="0" stop-color="#b8a040"/><stop offset="1" stop-color="#f0d070"/></linearGradient>
<path d="M557 282 Q566 288 575 290 Q600 292 627 292 Q640 295 652 309" stroke="#4f4b3a" stroke-width="2.6" fill="none" stroke-linecap="round"/>
<path d="M557 245 Q566 244 572 239" stroke="#4f4b3a" stroke-width="2" fill="none"/>
<path d="M558.0 244.0 Q568.1 244.2 570.0 233.0 Q559.1 234.4 558.0 244.0Z" fill="url(#lf2)"/>
<path d="M572.0 239.0 Q584.0 243.4 593.0 232.0 Q579.2 229.0 572.0 239.0Z" fill="url(#lf2)"/>
<path d="M572.0 240.0 Q579.2 250.5 594.0 249.0 Q584.3 238.2 572.0 240.0Z" fill="url(#lf3)"/>
<path d="M562.0 245.0 Q564.0 258.3 579.0 262.0 Q574.7 247.6 562.0 245.0Z" fill="url(#lf2)"/>
<path d="M556.0 250.0 Q554.9 258.2 564.0 260.0 Q563.8 251.1 556.0 250.0Z" fill="url(#lf3)"/>
<path d="M558.0 268.0 Q560.4 279.9 574.0 283.0 Q569.5 270.2 558.0 268.0Z" fill="url(#lf2)"/>
<path d="M566.0 290.0 Q567.7 302.6 582.0 305.0 Q578.1 291.5 566.0 290.0Z" fill="url(#lf2)"/>
<path d="M606.0 290.0 Q619.6 290.3 626.0 276.0 Q610.9 277.8 606.0 290.0Z" fill="url(#lf2)"/>
<path d="M599.0 292.0 Q603.1 308.4 622.0 314.0 Q614.9 296.0 599.0 292.0Z" fill="url(#lf2)"/>
<path d="M624.0 293.0 Q622.7 303.8 633.0 311.0 Q632.9 298.7 624.0 293.0Z" fill="url(#lf3)"/>
<path d="M629.0 292.0 Q637.9 302.5 653.0 298.0 Q641.5 287.7 629.0 292.0Z" fill="url(#lf2)"/>
<path d="M647.0 304.0 Q635.2 311.2 637.0 327.0 Q649.1 317.2 647.0 304.0Z" fill="url(#lf2)"/>
<path d="M650.0 311.0 Q649.2 324.6 662.0 334.0 Q661.0 318.4 650.0 311.0Z" fill="url(#lf2)"/>
<path d="M652.0 306.0 Q660.1 314.7 673.0 310.0 Q662.6 301.6 652.0 306.0Z" fill="url(#lf2)"/>
<path d="M556.0 328.0 Q561.4 336.0 572.0 333.0 Q564.8 325.1 556.0 328.0Z" fill="url(#lf2)"/>
<path d="M556.0 340.0 Q563.0 348.1 575.0 345.0 Q565.9 337.0 556.0 340.0Z" fill="url(#lf2)"/>
<path d="M556.0 347.0 Q554.9 354.6 563.0 358.0 Q562.9 349.5 556.0 347.0Z" fill="url(#lf2)"/>
<path d="M863.2 552.6 Q868.0 556.2 872.8 551.4" stroke="#4a5a50" stroke-width="1.1" fill="none"/>
<path d="M877.2 558.6 Q880.0 560.7 882.8 557.9" stroke="#4a5a50" stroke-width="1.1" fill="none"/>
<path d="M870.8 563.4 Q874.0 565.8 877.2 562.6" stroke="#4a5a50" stroke-width="1.1" fill="none"/>
<path d="M909.8 546.4 Q913.0 548.8 916.2 545.6" stroke="#4a5a50" stroke-width="1.1" fill="none"/>
<path d="M920.4 541.2 Q924.0 543.9 927.6 540.3" stroke="#4a5a50" stroke-width="1.1" fill="none"/>
<path d="M914.4 590.2 Q918.0 592.9 921.6 589.3" stroke="#4a5a50" stroke-width="1.1" fill="none"/>
<path d="M920.8 586.4 Q924.0 588.8 927.2 585.6" stroke="#4a5a50" stroke-width="1.1" fill="none"/>
<path d="M910.2 596.6 Q913.0 598.7 915.8 595.9" stroke="#4a5a50" stroke-width="1.1" fill="none"/>
<path d="M900.5 720 V659.5 H1616" stroke="#22b4b4" stroke-width="1.2" fill="none"/></svg></div>
<div class="a" id="panel">
<div class="a" style="left:0;top:0;width:541px;height:21px;background:linear-gradient(#303030,#262626);border-bottom:1px solid #1a1a1a"></div>
<svg class="a" style="left:497px;top:6px" width="12" height="8"><path d="M5 0.5L1 4L5 7.5M11 0.5L7 4L11 7.5" stroke="#c8c8c8" stroke-width="1.3" fill="none"/></svg>
<svg class="a" style="left:523px;top:5px" width="11" height="11"><path d="M1 1L10 10M10 1L1 10" stroke="#e0e0e0" stroke-width="2"/></svg>
<div class="a" style="left:0;top:21px;width:541px;height:26px;background:#2d2d2d"></div>
<div class="a" style="left:0;top:21px;width:161px;height:26px;background:#454545"></div>
<div class="t" style="left:12px;top:26px;font-size:13.7px;font-weight:bold;color:#dedede;letter-spacing:-0.1px">Profondeur de calque</div>
<svg class="a" style="left:517px;top:28px" width="16" height="12"><path d="M0 1H16M0 4.3H16M0 7.6H16M0 11H16" stroke="#cfcfcf" stroke-width="1.3"/></svg>
<div class="a" style="left:10px;top:52px;width:81px;height:26px;background:#2c2c2c;border:1px solid #1b1b1b"></div>
<svg class="ico" style="left:21px;top:56px" width="18" height="19"><use href="#lic"/></svg>
<div class="a" style="left:43px;top:62px;width:3px;height:3px;background:#ccc;border-radius:50%"></div>
<div class="a" style="left:43px;top:67px;width:3px;height:3px;background:#ccc;border-radius:50%"></div>
<div class="a" style="left:43px;top:72px;width:3px;height:3px;background:#ccc;border-radius:50%"></div>
<div class="t" style="left:55px;top:59px;font-size:16px;color:#e4e4e4">Act.</div>
<div class="a" style="left:0;top:83px;width:541px;height:1px;background:#393939"></div>
<div class="a" style="left:0;top:84px;width:541px;height:1px;background:#4f4f4f"></div>
<div class="a" style="left:1px;top:85px;width:316px;height:405px;background:#434343;border:1px solid #232323;border-left-color:#2a2a2a"></div>
<div class="a" style="left:317px;top:85px;width:9px;height:405px;background:linear-gradient(90deg,#3c3c3c,#525252,#3e3e3e)"></div>
<div class="a" style="left:0;top:491px;width:541px;height:1px;background:#393939"></div>
<div class="a" style="left:0;top:492px;width:541px;height:1px;background:#515151"></div>
<div class="t" style="left:12px;top:502px;font-size:15px;font-weight:bold;color:#d4d4d4">Image</div>
<div class="t" style="left:100px;top:502px;font-size:15.5px;color:#d4d4d4">1</div>
<div class="a" style="left:0;top:524px;width:541px;height:1px;background:#1e1e1e"></div>
<div class="a" style="left:0;top:525px;width:541px;height:12px;background:#3b3b3b"></div>
<div class="a" style="left:256px;top:528px;width:29px;height:6px;background:repeating-linear-gradient(90deg,#151515 0 1px,transparent 1px 2.6px)"></div>

<div class="a prow" style="top:85.80px;background:#434343"><svg class="ico" style="left:10px;top:3px" width="18" height="19"><use href="#lic"/></svg><div class="t lname" style="left:35px;top:4.7px">Branches</div><div class="t pnum" style="left:216px;top:6px;color:#e0a31b">0</div><div class="a" style="left:217px;top:22px;width:9px;height:1px;background:repeating-linear-gradient(90deg,#d89a10 0 1px,transparent 1px 2.5px)"></div><div class="sw" style="left:281px;top:6px;background:#00999c"></div></div>
<div class="a prow" style="top:114.36px;background:#434343"><svg class="ico" style="left:10px;top:3px" width="18" height="19"><use href="#lic"/></svg><div class="t lname" style="left:35px;top:4.7px">Flowers</div><div class="t pnum" style="left:216px;top:6px;color:#e0a31b">50</div><div class="a" style="left:217px;top:22px;width:18px;height:1px;background:repeating-linear-gradient(90deg,#d89a10 0 1px,transparent 1px 2.5px)"></div><div class="sw" style="left:281px;top:6px;background:#ff800a"></div></div>
<div class="a prow" style="top:142.92px;background:#434343"><svg class="ico" style="left:10px;top:3px" width="18" height="19"><use href="#lic"/></svg><div class="t lname" style="left:35px;top:4.7px">Ground_1</div><div class="t pnum" style="left:216px;top:6px;color:#e0a31b">150</div><div class="a" style="left:217px;top:22px;width:27px;height:1px;background:repeating-linear-gradient(90deg,#d89a10 0 1px,transparent 1px 2.5px)"></div><div class="sw" style="left:281px;top:6px;background:#ff4cff"></div></div>
<div class="a prow" style="top:171.48px;background:#434343"><svg class="ico" style="left:10px;top:3px" width="18" height="19"><use href="#lic"/></svg><div class="t lname" style="left:35px;top:4.7px">Ground_2</div><div class="t pnum" style="left:216px;top:6px;color:#e0a31b">200</div><div class="a" style="left:217px;top:22px;width:27px;height:1px;background:repeating-linear-gradient(90deg,#d89a10 0 1px,transparent 1px 2.5px)"></div><div class="sw" style="left:281px;top:6px;background:#00999c"></div></div>
<div class="a prow" style="top:200.04px;background:#434343"><svg class="ico" style="left:10px;top:3px" width="18" height="19"><use href="#lic"/></svg><div class="t lname" style="left:35px;top:4.7px">Ground_3</div><div class="t pnum" style="left:216px;top:6px;color:#e0a31b">300</div><div class="a" style="left:217px;top:22px;width:27px;height:1px;background:repeating-linear-gradient(90deg,#d89a10 0 1px,transparent 1px 2.5px)"></div><div class="sw" style="left:281px;top:6px;background:#7f7f7f"></div></div>
<div class="a prow" style="top:228.60px;background:#434343"><svg class="ico" style="left:10px;top:3px" width="18" height="19"><use href="#lic"/></svg><div class="t lname" style="left:35px;top:4.7px">Trees</div><div class="t pnum" style="left:216px;top:6px;color:#e0a31b">350</div><div class="a" style="left:217px;top:22px;width:27px;height:1px;background:repeating-linear-gradient(90deg,#d89a10 0 1px,transparent 1px 2.5px)"></div><div class="sw" style="left:281px;top:6px;background:#669900"></div></div>
<div class="a prow" style="top:257.16px;background:#434343"><svg class="ico" style="left:10px;top:3px" width="18" height="19"><use href="#lic"/></svg><div class="t lname" style="left:35px;top:4.7px">Shrubs</div><div class="t pnum" style="left:216px;top:6px;color:#e0a31b">400</div><div class="a" style="left:217px;top:22px;width:27px;height:1px;background:repeating-linear-gradient(90deg,#d89a10 0 1px,transparent 1px 2.5px)"></div><div class="sw" style="left:281px;top:6px;background:#ff4f4f"></div></div>
<div class="a prow" style="top:285.72px;background:#545454"><svg class="ico" style="left:10px;top:3px" width="18" height="19"><use href="#lic"/></svg><div class="t lname" style="left:35px;top:4.7px">House</div><div class="t pnum" style="left:216px;top:6px;color:#e0a31b">500</div><div class="a" style="left:217px;top:22px;width:27px;height:1px;background:repeating-linear-gradient(90deg,#d89a10 0 1px,transparent 1px 2.5px)"></div><div class="sw" style="left:281px;top:6px;background:#4f80ff"></div></div>
<div class="a prow" style="top:314.28px;background:#434343"><svg class="ico" style="left:10px;top:3px" width="18" height="19"><use href="#lic"/></svg><div class="t lname" style="left:35px;top:4.7px">Mountain_1</div><div class="t pnum" style="left:216px;top:6px;color:#e0a31b">600</div><div class="a" style="left:217px;top:22px;width:27px;height:1px;background:repeating-linear-gradient(90deg,#d89a10 0 1px,transparent 1px 2.5px)"></div><div class="sw" style="left:281px;top:6px;background:#9933cc"></div></div>
<div class="a prow" style="top:342.84px;background:#434343"><svg class="ico" style="left:10px;top:3px" width="18" height="19"><use href="#lic"/></svg><div class="t lname" style="left:35px;top:4.7px">Mountain_2</div><div class="t pnum" style="left:216px;top:6px;color:#e0a31b">800</div><div class="a" style="left:217px;top:22px;width:27px;height:1px;background:repeating-linear-gradient(90deg,#d89a10 0 1px,transparent 1px 2.5px)"></div><div class="sw" style="left:281px;top:6px;background:#ff800a"></div></div>
<div class="a prow" style="top:371.40px;background:#434343"><svg class="ico" style="left:10px;top:3px" width="18" height="19"><use href="#lic"/></svg><div class="t lname" style="left:35px;top:4.7px">Mountain_3</div><div class="t pnum" style="left:216px;top:6px;color:#e0a31b">900</div><div class="a" style="left:217px;top:22px;width:27px;height:1px;background:repeating-linear-gradient(90deg,#d89a10 0 1px,transparent 1px 2.5px)"></div><div class="sw" style="left:281px;top:6px;background:#ff4cff"></div></div>
<div class="a prow" style="top:399.96px;background:#434343"><svg class="ico" style="left:10px;top:3px" width="18" height="19"><use href="#lic"/></svg><div class="t lname" style="left:35px;top:4.7px">Rainbow_Sky</div><div class="t pnum" style="left:216px;top:6px;color:#e0a31b">1000</div><div class="a" style="left:217px;top:22px;width:36px;height:1px;background:repeating-linear-gradient(90deg,#d89a10 0 1px,transparent 1px 2.5px)"></div><div class="sw" style="left:281px;top:6px;background:#0000ff"></div></div>
<div class="a prow" style="top:428.52px;background:#434343"><svg class="ico" style="left:10px;top:3px" width="18" height="19"><use href="#lic"/></svg><div class="t lname" style="left:35px;top:4.7px">R_Landscape</div><div class="t pnum" style="left:216px;top:6px;color:#6a6a6a">0</div><div class="a" style="left:217px;top:22px;width:9px;height:1px;background:repeating-linear-gradient(90deg,#5e5e5e 0 1px,transparent 1px 2.5px)"></div><div class="sw" style="left:281px;top:6px;background:#00ff00"></div></div>
<div class="a prow" style="top:457.08px;background:#434343"><svg class="ico" style="left:10px;top:3px" width="18" height="19"><use href="#lic"/></svg><div class="t lname" style="left:35px;top:4.7px">R_Rainbow_Sky</div><div class="t pnum" style="left:216px;top:6px;color:#6a6a6a">0</div><div class="a" style="left:217px;top:22px;width:9px;height:1px;background:repeating-linear-gradient(90deg,#5e5e5e 0 1px,transparent 1px 2.5px)"></div><div class="sw" style="left:281px;top:6px;background:#0000ff"></div></div>
<svg class="a" style="left:326px;top:84px" width="216" height="405">
<path d="M0 139L108 74.5L216 139" stroke="#0a0a0a" stroke-width="3" stroke-dasharray="6,5" fill="none"/>
<circle cx="108" cy="74.5" r="6" fill="#050505"/>
<rect x="0" y="139" width="216" height="3" fill="#00999c"/>
<rect x="0" y="145.5" width="216" height="3" fill="#ff800a"/>
<rect x="0" y="158" width="216" height="3" fill="#ff4cff"/>
<rect x="0" y="164" width="216" height="3" fill="#00999c"/>
<rect x="0" y="177" width="216" height="3" fill="#7f7f7f"/>
<rect x="0" y="183" width="216" height="3" fill="#669900"/>
<rect x="0" y="189.5" width="216" height="3" fill="#ff4f4f"/>
<rect x="0" y="198" width="216" height="9" fill="#4f80ff"/>
<rect x="0" y="214" width="216" height="3" fill="#9933cc"/>
<rect x="0" y="239" width="216" height="3" fill="#ff800a"/>
<rect x="0" y="251.5" width="216" height="3" fill="#ff4cff"/>
<rect x="0" y="264" width="216" height="3" fill="#0000ff"/>
</svg>

</div>
<div class="a" style="left:0;top:839px;width:1616px;height:465px;background:#464646"></div>
<div class="a" style="left:0;top:839px;width:1616px;height:4px;background:#1c1c1c"></div><div class="a" style="left:0;top:840px;width:1616px;height:1px;background:#3c3c3c"></div>
<div class="a" style="left:0;top:843px;width:1616px;height:26px;background:#2c2c2c"></div>
<div class="a" style="left:0;top:843px;width:80px;height:26px;background:#454545"></div>
<div class="a" style="left:80px;top:843px;width:72px;height:26px;background:#333;border-right:1px solid #262626"></div>
<div class="t" style="left:10px;top:848px;font-size:13.5px;font-weight:bold;color:#e4e4e4">Scénario</div>
<div class="t" style="left:96px;top:848px;font-size:14px;font-weight:bold;color:#9a9a9a">Sortie</div>
<div class="a" style="left:7px;top:885px;width:81px;height:31px;background:#2c2c2c;border:1px solid #1b1b1b"></div>
<svg class="ico" style="left:18px;top:892px" width="18" height="19"><use href="#lic"/></svg>
<div class="a" style="left:38px;top:896px;width:3px;height:3px;background:#ccc;border-radius:50%"></div>
<div class="a" style="left:38px;top:901px;width:3px;height:3px;background:#ccc;border-radius:50%"></div>
<div class="a" style="left:38px;top:906px;width:3px;height:3px;background:#ccc;border-radius:50%"></div>
<div class="t" style="left:52px;top:895px;font-size:16px;color:#e4e4e4">Act.</div>
<svg class="a" style="left:114px;top:890px" width="20" height="20"><path d="M1.5 1V18.5H19" stroke="#cfcfcf" stroke-width="1.5" fill="none"/><path d="M3 17L17 8" stroke="#cfcfcf" stroke-width="1.5"/><path d="M11 7.5L18 6.5L16 13" stroke="#cfcfcf" stroke-width="1.5" fill="none"/></svg>
<svg class="a" style="left:254px;top:893px" width="20" height="16"><path d="M0.5 8Q10 -4.5 19.5 8Q10 19 0.5 8Z" fill="#c8c8c8"/><circle cx="10" cy="8" r="4.2" fill="#3c3c3c"/><circle cx="11.6" cy="6.3" r="1.2" fill="#d8d8d8"/></svg>
<svg class="a" style="left:283px;top:892px" width="18" height="19"><path d="M4.5 9V6Q4.5 1.5 9 1.5Q13.5 1.5 13.5 6V9" stroke="#c8c8c8" stroke-width="2.2" fill="none"/><rect x="1.5" y="8.5" width="15" height="10" rx="1.5" fill="#c8c8c8"/><rect x="8" y="12" width="2" height="4" fill="#464646"/></svg>
<div class="a" style="left:315px;top:894px;width:8px;height:17px;border:1.5px solid #161616;border-radius:1px"></div>

<div class="a trow" style="top:921px;background:#464646"><svg class="ico" style="left:36px;top:4px" width="18" height="19"><use href="#lic"/></svg><div class="t lname" style="left:62px;top:5.6px;">Branches</div>
<div class="a" style="left:261px;top:10px;width:6px;height:6px;border-radius:40%;background:#101010"></div>
<div class="a" style="left:290px;top:10px;width:6px;height:6px;border-radius:40%;background:#101010"></div>
<div class="sw" style="left:314px;top:5px;height:17px;background:#00999c"></div>
</div>
<div class="a trow" style="top:948px;background:#464646"><svg class="ico" style="left:36px;top:4px" width="18" height="19"><use href="#lic"/></svg><div class="t lname" style="left:62px;top:5.6px;">Flowers</div>
<div class="a" style="left:261px;top:10px;width:6px;height:6px;border-radius:40%;background:#101010"></div>
<div class="a" style="left:290px;top:10px;width:6px;height:6px;border-radius:40%;background:#101010"></div>
<div class="sw" style="left:314px;top:5px;height:17px;background:#ff800a"></div>
</div>
<div class="a trow" style="top:975px;background:#464646"><svg class="ico" style="left:36px;top:4px" width="18" height="19"><use href="#lic"/></svg><div class="t lname" style="left:62px;top:5.6px;">Ground_1</div>
<div class="a" style="left:261px;top:10px;width:6px;height:6px;border-radius:40%;background:#101010"></div>
<div class="a" style="left:290px;top:10px;width:6px;height:6px;border-radius:40%;background:#101010"></div>
<div class="sw" style="left:314px;top:5px;height:17px;background:#ff4cff"></div>
</div>
<div class="a trow" style="top:1002px;background:#464646"><svg class="ico" style="left:36px;top:4px" width="18" height="19"><use href="#lic"/></svg><div class="t lname" style="left:62px;top:5.6px;">Ground_2</div>
<div class="a" style="left:261px;top:10px;width:6px;height:6px;border-radius:40%;background:#101010"></div>
<div class="a" style="left:290px;top:10px;width:6px;height:6px;border-radius:40%;background:#101010"></div>
<div class="sw" style="left:314px;top:5px;height:17px;background:#00999c"></div>
</div>
<div class="a trow" style="top:1029px;background:#464646"><svg class="ico" style="left:36px;top:4px" width="18" height="19"><use href="#lic"/></svg><div class="t lname" style="left:62px;top:5.6px;">Ground_3</div>
<div class="a" style="left:261px;top:10px;width:6px;height:6px;border-radius:40%;background:#101010"></div>
<div class="a" style="left:290px;top:10px;width:6px;height:6px;border-radius:40%;background:#101010"></div>
<div class="sw" style="left:314px;top:5px;height:17px;background:#7f7f7f"></div>
</div>
<div class="a trow" style="top:1056px;background:#464646"><svg class="ico" style="left:36px;top:4px" width="18" height="19"><use href="#lic"/></svg><div class="t lname" style="left:62px;top:5.6px;">Trees</div>
<div class="a" style="left:261px;top:10px;width:6px;height:6px;border-radius:40%;background:#101010"></div>
<div class="a" style="left:290px;top:10px;width:6px;height:6px;border-radius:40%;background:#101010"></div>
<div class="sw" style="left:314px;top:5px;height:17px;background:#669900"></div>
</div>
<div class="a trow" style="top:1083px;background:#464646"><svg class="ico" style="left:36px;top:4px" width="18" height="19"><use href="#lic"/></svg><div class="t lname" style="left:62px;top:5.6px;">Shrubs</div>
<div class="a" style="left:261px;top:10px;width:6px;height:6px;border-radius:40%;background:#101010"></div>
<div class="a" style="left:290px;top:10px;width:6px;height:6px;border-radius:40%;background:#101010"></div>
<div class="sw" style="left:314px;top:5px;height:17px;background:#ff4f4f"></div>
</div>
<div class="a trow" style="top:1110px;background:#a07a1f"><svg class="ico" style="left:36px;top:4px" width="18" height="19"><use href="#lics"/></svg><div class="t lname" style="left:62px;top:5.6px;color:#fff">House</div>
<div class="a" style="left:261px;top:10px;width:6px;height:6px;border-radius:40%;background:#f5f0e0"></div>
<div class="a" style="left:290px;top:10px;width:6px;height:6px;border-radius:40%;background:#f5f0e0"></div>
<div class="sw" style="left:314px;top:5px;height:17px;background:#4f80ff"></div>
<svg class="a" style="left:196px;top:5px" width="50" height="23">
<path d="M12 1L1 11L12 21Z" fill="#e0d2ae"/>
<path d="M12 1L1 11" stroke="#4a3808" stroke-width="1"/>
<rect x="20" y="-2" width="9" height="3" fill="#3e2e06"/>
<rect x="20" y="1" width="9" height="21" fill="#e4d8b8"/>
<circle cx="24.5" cy="17" r="2.6" fill="#3a3020"/>
<path d="M36 1L47 11L36 21Z" fill="#e0d2ae"/>
<path d="M36 1L47 11" stroke="#4a3808" stroke-width="1"/>
</svg>

</div>
<div class="a trow" style="top:1137px;background:#464646"><svg class="ico" style="left:36px;top:4px" width="18" height="19"><use href="#lic"/></svg><div class="t lname" style="left:62px;top:5.6px;">Mountain_1</div>
<div class="a" style="left:261px;top:10px;width:6px;height:6px;border-radius:40%;background:#101010"></div>
<div class="a" style="left:290px;top:10px;width:6px;height:6px;border-radius:40%;background:#101010"></div>
<div class="sw" style="left:314px;top:5px;height:17px;background:#9933cc"></div>
</div>
<div class="a trow" style="top:1164px;background:#464646"><svg class="ico" style="left:36px;top:4px" width="18" height="19"><use href="#lic"/></svg><div class="t lname" style="left:62px;top:5.6px;">Mountain_2</div>
<div class="a" style="left:261px;top:10px;width:6px;height:6px;border-radius:40%;background:#101010"></div>
<div class="a" style="left:290px;top:10px;width:6px;height:6px;border-radius:40%;background:#101010"></div>
<div class="sw" style="left:314px;top:5px;height:17px;background:#ff800a"></div>
</div>
<div class="a trow" style="top:1191px;background:#464646"><svg class="ico" style="left:36px;top:4px" width="18" height="19"><use href="#lic"/></svg><div class="t lname" style="left:62px;top:5.6px;">Mountain_3</div>
<div class="a" style="left:261px;top:10px;width:6px;height:6px;border-radius:40%;background:#101010"></div>
<div class="a" style="left:290px;top:10px;width:6px;height:6px;border-radius:40%;background:#101010"></div>
<div class="sw" style="left:314px;top:5px;height:17px;background:#ff4cff"></div>
</div>
<div class="a trow" style="top:1218px;background:#464646"><svg class="ico" style="left:36px;top:4px" width="18" height="19"><use href="#lic"/></svg><div class="t lname" style="left:62px;top:5.6px;">Rainbow_Sky</div>
<div class="a" style="left:261px;top:10px;width:6px;height:6px;border-radius:40%;background:#101010"></div>
<div class="a" style="left:290px;top:10px;width:6px;height:6px;border-radius:40%;background:#101010"></div>
<div class="sw" style="left:314px;top:5px;height:17px;background:#0000ff"></div>
</div>
<div class="a trow" style="top:1245px;background:#464646"><svg class="ico" style="left:36px;top:4px" width="18" height="19"><use href="#lic"/></svg><div class="t lname" style="left:62px;top:5.6px;">R_Landscape</div>
<svg class="a" style="left:253px;top:5px" width="18" height="18"><path d="M1 1L17 17M17 1L1 17" stroke="#e6e6e6" stroke-width="1.6"/></svg>
<div class="a" style="left:290px;top:10px;width:6px;height:6px;border-radius:40%;background:#101010"></div>
<div class="sw" style="left:314px;top:5px;height:17px;background:#00ff00"></div>
</div>
<div class="a trow" style="top:1272px;background:#464646"><svg class="ico" style="left:36px;top:4px" width="18" height="19"><use href="#lic"/></svg><div class="t lname" style="left:62px;top:5.6px;">R_Rainbow_Sky</div>
<svg class="a" style="left:253px;top:5px" width="18" height="18"><path d="M1 1L17 17M17 1L1 17" stroke="#e6e6e6" stroke-width="1.6"/></svg>
<div class="a" style="left:290px;top:10px;width:6px;height:6px;border-radius:40%;background:#101010"></div>
<div class="sw" style="left:314px;top:5px;height:17px;background:#0000ff"></div>
</div>
<div class="a" style="left:337px;top:869px;width:1279px;height:50px;background:#464646;border-top:1px solid #555"></div>
<div class="a" style="left:613px;top:870px;width:12px;height:49px;background:#4f4f4f"></div>
<div class="a" style="left:901px;top:870px;width:12px;height:49px;background:#4f4f4f"></div>
<div class="a" style="left:1189px;top:870px;width:12px;height:49px;background:#4f4f4f"></div>
<div class="a" style="left:1477px;top:870px;width:12px;height:49px;background:#4f4f4f"></div>
<div class="a" style="left:337px;top:914px;width:1279px;height:4px;background:repeating-linear-gradient(90deg,transparent 0 10px,#8c8c8c 10px 12px)"></div>
<div class="a" style="left:611px;top:913px;width:2px;height:5px;background:#e8e8e8"></div>
<div class="a" style="left:623px;top:913px;width:2px;height:5px;background:#e8e8e8"></div>
<div class="a" style="left:899px;top:913px;width:2px;height:5px;background:#e8e8e8"></div>
<div class="a" style="left:911px;top:913px;width:2px;height:5px;background:#e8e8e8"></div>
<div class="a" style="left:1187px;top:913px;width:2px;height:5px;background:#e8e8e8"></div>
<div class="a" style="left:1199px;top:913px;width:2px;height:5px;background:#e8e8e8"></div>
<div class="a" style="left:1475px;top:913px;width:2px;height:5px;background:#e8e8e8"></div>
<div class="a" style="left:1487px;top:913px;width:2px;height:5px;background:#e8e8e8"></div>
<div class="a" style="left:0;top:919px;width:1616px;height:2px;background:#585858"></div>
<div class="a" style="left:335px;top:873px;width:14px;height:46px;background:rgba(140,28,28,0.5);border:2px solid #b01010"></div>
<div class="t" style="left:338px;top:899px;font-size:16.3px;color:#f4f4f4;letter-spacing:-0.4px">1</div>
<div class="t" style="left:386px;top:899px;font-size:16.3px;color:#d8d8d8;letter-spacing:-0.4px">5</div>
<div class="t" style="left:446px;top:899px;font-size:16.3px;color:#d8d8d8;letter-spacing:-0.4px">10</div>
<div class="t" style="left:506px;top:899px;font-size:16.3px;color:#d8d8d8;letter-spacing:-0.4px">15</div>
<div class="t" style="left:566px;top:899px;font-size:16.3px;color:#d8d8d8;letter-spacing:-0.4px">20</div>
<div class="t" style="left:626px;top:899px;font-size:16.3px;color:#d8d8d8;letter-spacing:-0.4px">25</div>
<div class="t" style="left:686px;top:899px;font-size:16.3px;color:#d8d8d8;letter-spacing:-0.4px">30</div>
<div class="t" style="left:746px;top:899px;font-size:16.3px;color:#d8d8d8;letter-spacing:-0.4px">35</div>
<div class="t" style="left:806px;top:899px;font-size:16.3px;color:#d8d8d8;letter-spacing:-0.4px">40</div>
<div class="t" style="left:866px;top:899px;font-size:16.3px;color:#d8d8d8;letter-spacing:-0.4px">45</div>
<div class="t" style="left:926px;top:899px;font-size:16.3px;color:#d8d8d8;letter-spacing:-0.4px">50</div>
<div class="t" style="left:986px;top:899px;font-size:16.3px;color:#d8d8d8;letter-spacing:-0.4px">55</div>
<div class="t" style="left:1046px;top:899px;font-size:16.3px;color:#d8d8d8;letter-spacing:-0.4px">60</div>
<div class="t" style="left:1106px;top:899px;font-size:16.3px;color:#d8d8d8;letter-spacing:-0.4px">65</div>
<div class="t" style="left:1166px;top:899px;font-size:16.3px;color:#d8d8d8;letter-spacing:-0.4px">70</div>
<div class="t" style="left:1226px;top:899px;font-size:16.3px;color:#d8d8d8;letter-spacing:-0.4px">75</div>
<div class="t" style="left:1286px;top:899px;font-size:16.3px;color:#d8d8d8;letter-spacing:-0.4px">80</div>
<div class="t" style="left:1346px;top:899px;font-size:16.3px;color:#d8d8d8;letter-spacing:-0.4px">85</div>
<div class="t" style="left:1406px;top:899px;font-size:16.3px;color:#d8d8d8;letter-spacing:-0.4px">90</div>
<div class="t" style="left:1466px;top:899px;font-size:16.3px;color:#d8d8d8;letter-spacing:-0.4px">95</div>
<div class="t" style="left:1526px;top:899px;font-size:16.3px;color:#d8d8d8;letter-spacing:-0.4px">100</div>
<div class="t" style="left:1586px;top:899px;font-size:16.3px;color:#d8d8d8;letter-spacing:-0.4px">105</div>
<div class="t" style="left:614px;top:874px;font-size:16.3px;color:#d8d8d8;letter-spacing:-0.4px">1s</div>
<div class="t" style="left:902px;top:874px;font-size:16.3px;color:#d8d8d8;letter-spacing:-0.4px">2s</div>
<div class="t" style="left:1190px;top:874px;font-size:16.3px;color:#d8d8d8;letter-spacing:-0.4px">3s</div>
<div class="t" style="left:1478px;top:874px;font-size:16.3px;color:#d8d8d8;letter-spacing:-0.4px">4s</div>
<div class="a" style="left:337px;top:921px;width:1279px;height:383px;background:repeating-linear-gradient(180deg,#565656 0 1px,transparent 1px 26px,#424242 26px 27px),repeating-linear-gradient(90deg,#585858 0 1px,transparent 1px 11px,#424242 11px 12px),repeating-linear-gradient(90deg,transparent 0 48px,#434343 48px 60px),#4a4a4a"></div>
<div class="a" style="left:337px;top:921px;width:11px;height:26px;background:linear-gradient(90deg,#8a8a8a,#5c5c5c 30%,#5c5c5c 70%,#8a8a8a)"></div>
<div class="a" style="left:338px;top:934px;width:8px;height:8px;border-radius:50%;background:#000"></div>
<div class="a" style="left:337px;top:947px;width:11px;height:1px;background:#2a2a2a"></div>
<div class="a" style="left:337px;top:948px;width:11px;height:26px;background:linear-gradient(90deg,#8a8a8a,#5c5c5c 30%,#5c5c5c 70%,#8a8a8a)"></div>
<div class="a" style="left:338px;top:961px;width:8px;height:8px;border-radius:50%;background:#000"></div>
<div class="a" style="left:337px;top:974px;width:11px;height:1px;background:#2a2a2a"></div>
<div class="a" style="left:337px;top:975px;width:11px;height:26px;background:linear-gradient(90deg,#8a8a8a,#5c5c5c 30%,#5c5c5c 70%,#8a8a8a)"></div>
<div class="a" style="left:338px;top:988px;width:8px;height:8px;border-radius:50%;background:#000"></div>
<div class="a" style="left:337px;top:1001px;width:11px;height:1px;background:#2a2a2a"></div>
<div class="a" style="left:337px;top:1002px;width:11px;height:26px;background:linear-gradient(90deg,#8a8a8a,#5c5c5c 30%,#5c5c5c 70%,#8a8a8a)"></div>
<div class="a" style="left:338px;top:1015px;width:8px;height:8px;border-radius:50%;background:#000"></div>
<div class="a" style="left:337px;top:1028px;width:11px;height:1px;background:#2a2a2a"></div>
<div class="a" style="left:337px;top:1029px;width:11px;height:26px;background:linear-gradient(90deg,#8a8a8a,#5c5c5c 30%,#5c5c5c 70%,#8a8a8a)"></div>
<div class="a" style="left:338px;top:1042px;width:8px;height:8px;border-radius:50%;background:#000"></div>
<div class="a" style="left:337px;top:1055px;width:11px;height:1px;background:#2a2a2a"></div>
<div class="a" style="left:337px;top:1056px;width:11px;height:26px;background:linear-gradient(90deg,#8a8a8a,#5c5c5c 30%,#5c5c5c 70%,#8a8a8a)"></div>
<div class="a" style="left:338px;top:1069px;width:8px;height:8px;border-radius:50%;background:#000"></div>
<div class="a" style="left:337px;top:1082px;width:11px;height:1px;background:#2a2a2a"></div>
<div class="a" style="left:337px;top:1083px;width:11px;height:26px;background:linear-gradient(90deg,#8a8a8a,#5c5c5c 30%,#5c5c5c 70%,#8a8a8a)"></div>
<div class="a" style="left:338px;top:1096px;width:8px;height:8px;border-radius:50%;background:#000"></div>
<div class="a" style="left:337px;top:1109px;width:11px;height:1px;background:#2a2a2a"></div>
<div class="a" style="left:337px;top:1110px;width:11px;height:26px;background:linear-gradient(90deg,#b09048,#9a7a36 30%,#9a7a36 70%,#b09048)"></div>
<div class="a" style="left:338px;top:1123px;width:8px;height:8px;border-radius:50%;background:#5a4510"></div>
<div class="a" style="left:337px;top:1136px;width:11px;height:1px;background:#2a2a2a"></div>
<div class="a" style="left:337px;top:1137px;width:11px;height:26px;background:linear-gradient(90deg,#8a8a8a,#5c5c5c 30%,#5c5c5c 70%,#8a8a8a)"></div>
<div class="a" style="left:338px;top:1150px;width:8px;height:8px;border-radius:50%;background:#000"></div>
<div class="a" style="left:337px;top:1163px;width:11px;height:1px;background:#2a2a2a"></div>
<div class="a" style="left:337px;top:1164px;width:11px;height:26px;background:linear-gradient(90deg,#8a8a8a,#5c5c5c 30%,#5c5c5c 70%,#8a8a8a)"></div>
<div class="a" style="left:338px;top:1177px;width:8px;height:8px;border-radius:50%;background:#000"></div>
<div class="a" style="left:337px;top:1190px;width:11px;height:1px;background:#2a2a2a"></div>
<div class="a" style="left:337px;top:1191px;width:11px;height:26px;background:linear-gradient(90deg,#8a8a8a,#5c5c5c 30%,#5c5c5c 70%,#8a8a8a)"></div>
<div class="a" style="left:338px;top:1204px;width:8px;height:8px;border-radius:50%;background:#000"></div>
<div class="a" style="left:337px;top:1217px;width:11px;height:1px;background:#2a2a2a"></div>
<div class="a" style="left:337px;top:1218px;width:11px;height:26px;background:linear-gradient(90deg,#8a8a8a,#5c5c5c 30%,#5c5c5c 70%,#8a8a8a)"></div>
<div class="a" style="left:338px;top:1231px;width:8px;height:8px;border-radius:50%;background:#000"></div>
<div class="a" style="left:337px;top:1244px;width:11px;height:1px;background:#2a2a2a"></div>
<div class="a" style="left:337px;top:1245px;width:11px;height:26px;background:linear-gradient(90deg,#8a8a8a,#5c5c5c 30%,#5c5c5c 70%,#8a8a8a)"></div>
<div class="a" style="left:338px;top:1258px;width:8px;height:8px;border-radius:50%;background:#000"></div>
<div class="a" style="left:337px;top:1271px;width:11px;height:1px;background:#2a2a2a"></div>
<div class="a" style="left:337px;top:1272px;width:11px;height:26px;background:linear-gradient(90deg,#8a8a8a,#5c5c5c 30%,#5c5c5c 70%,#8a8a8a)"></div>
<div class="a" style="left:338px;top:1285px;width:8px;height:8px;border-radius:50%;background:#000"></div>
<div class="a" style="left:337px;top:1298px;width:11px;height:1px;background:#2a2a2a"></div>
<div class="a" style="left:348px;top:921px;width:1px;height:383px;background:#262626"></div>

<div class="a" style="left:342px;top:918px;width:1px;height:386px;background:#d01818"></div>
</body></html>
